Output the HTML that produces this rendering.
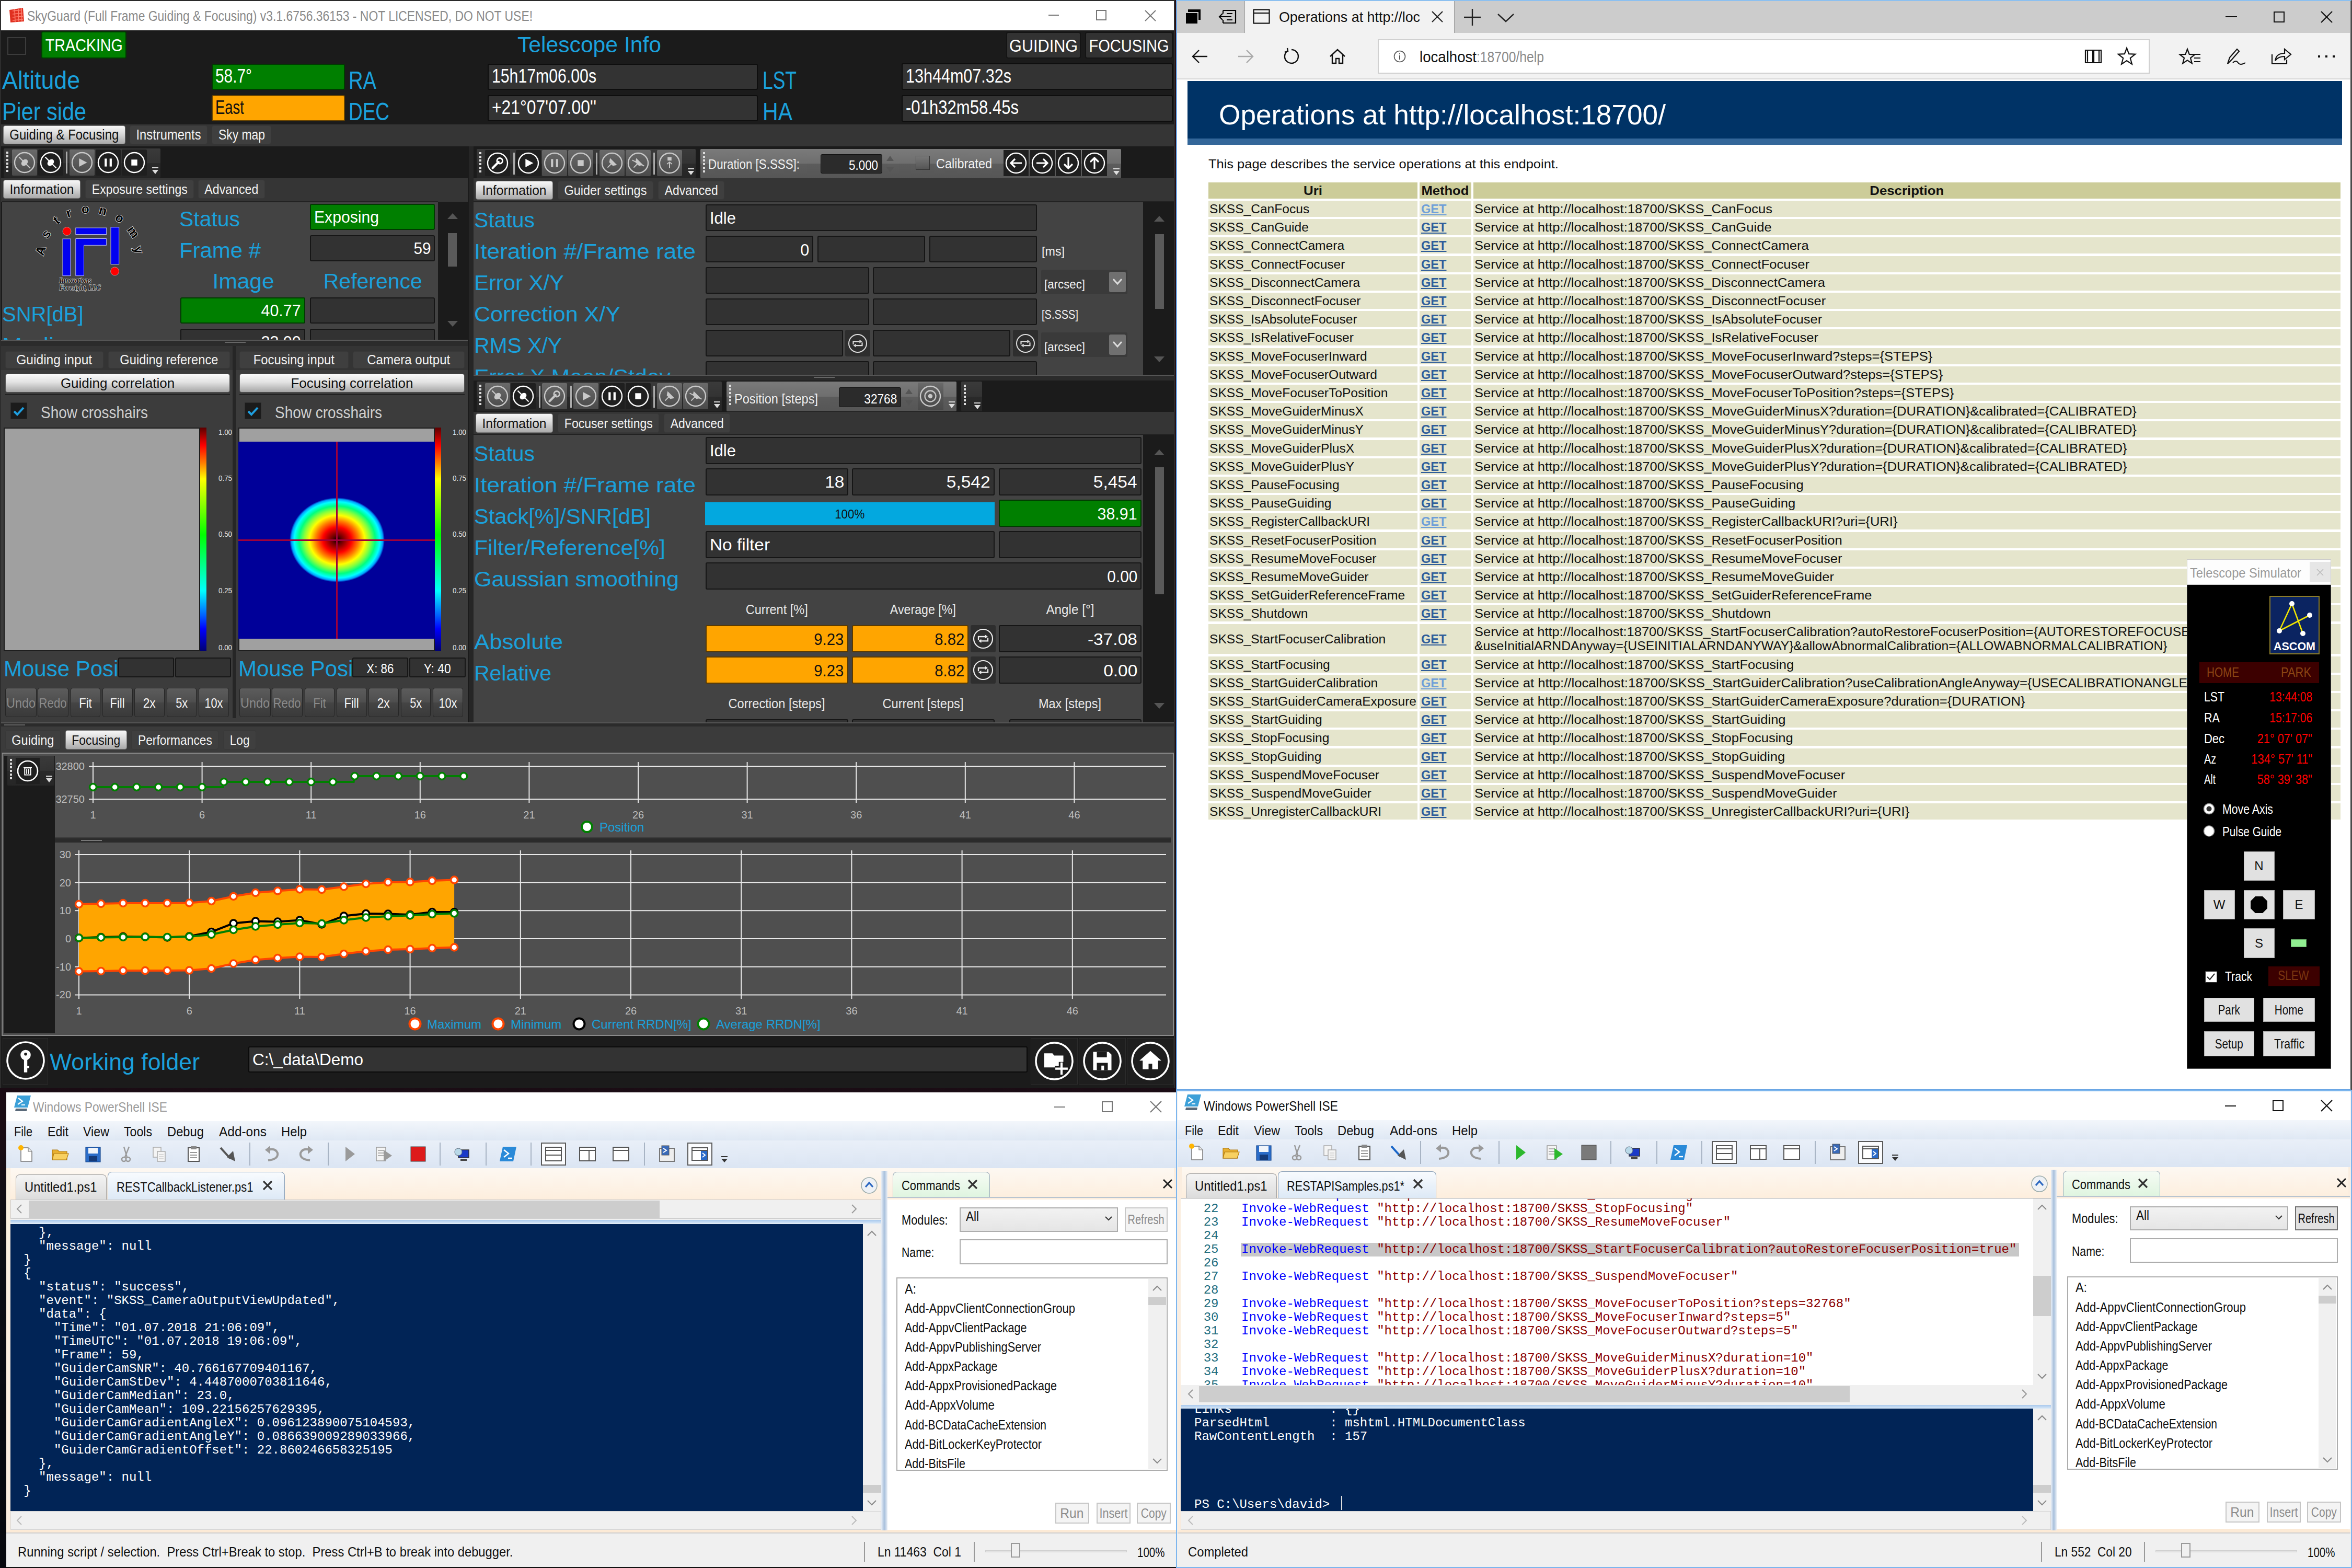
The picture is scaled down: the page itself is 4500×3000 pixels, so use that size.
<!DOCTYPE html>
<html><head><meta charset="utf-8"><title>Screen</title>
<style>
html,body{margin:0;padding:0;background:#000;}
#scr{position:relative;width:4500px;height:3000px;overflow:hidden;background:linear-gradient(#2a0e16 0%,#1a0c14 72%,#0c0c14 80%,#06080e 100%);font-family:"Liberation Sans",sans-serif;}
#scr div{position:absolute;box-sizing:border-box;}
#scr .t{white-space:pre;}
#scr svg{position:absolute;overflow:visible;}
</style></head><body><div id="scr">
<div style="left:0.0px;top:0.0px;width:2248.0px;height:2082.0px;background:#1b1b1b;border:2px solid #2d2d2d;border-top:2px solid #2a2a2a;"></div>
<div style="left:2.0px;top:2.0px;width:2244.0px;height:56.0px;background:#ffffff;"></div>
<svg style="left:16px;top:13px" width="32" height="32"><path d="M2,6 L28,2 L30,28 L4,30Z" fill="#e03020"/><path d="M8,8 L26,6 M8,14 L27,12 M8,20 L28,18 M8,26 L28,24 M12,5 L13,29 M19,4 L20,28 M25,3 L26,28" stroke="#ff8070" stroke-width="1.5"/></svg>
<div class="t" style="left:52.0px;top:18.1px;font-size:27px;line-height:27px;color:#8a8a8a;font-family:'Liberation Sans', sans-serif;transform:scaleX(0.8487);transform-origin:left 0;">SkyGuard (Full Frame Guiding &amp; Focusing) v3.1.6756.36153 - NOT LICENSED, DO NOT USE!</div>
<div style="left:2006.0px;top:28.0px;width:20.0px;height:2.0px;background:#777;"></div>
<div style="left:2097.0px;top:19.0px;width:20.0px;height:20.0px;border:2px solid #777;"></div>
<svg style="left:2190px;top:19px" width="22" height="22"><path d="M1,1 L21,21 M21,1 L1,21" stroke="#777" stroke-width="2"/></svg>
<div style="left:14.0px;top:71.0px;width:36.0px;height:34.0px;border:2px solid #3c3c3c;"></div>
<div style="left:79.0px;top:60.0px;width:163.0px;height:52.0px;background:#007f00;border:2px solid #003a00;border-radius:3px;"></div>
<div class="t" style="left:72.7px;top:69.2px;font-size:34px;line-height:34px;color:#fff;font-family:'Liberation Sans', sans-serif;transform:scaleX(0.8424);transform-origin:center 0;">TRACKING</div>
<div class="t" style="left:990.0px;top:65.4px;font-size:42px;line-height:42px;color:#1ba1dc;font-family:'Liberation Sans', sans-serif;transform:scaleX(1.0154);transform-origin:left 0;">Telescope Info</div>
<div style="left:1925.0px;top:61.0px;width:143.0px;height:51.0px;background:#323232;border:2px solid #141414;border-radius:4px;"></div>
<div class="t" style="left:1925.9px;top:71.1px;font-size:33px;line-height:33px;color:#fff;font-family:'Liberation Sans', sans-serif;transform:scaleX(0.9280);transform-origin:center 0;">GUIDING</div>
<div style="left:2076.0px;top:61.0px;width:168.0px;height:51.0px;background:#323232;border:2px solid #141414;border-radius:4px;"></div>
<div class="t" style="left:2072.9px;top:71.1px;font-size:33px;line-height:33px;color:#fff;font-family:'Liberation Sans', sans-serif;transform:scaleX(0.8785);transform-origin:center 0;">FOCUSING</div>
<div class="t" style="left:4.0px;top:128.5px;font-size:49px;line-height:49px;color:#1ba1dc;font-family:'Liberation Sans', sans-serif;transform:scaleX(0.9117);transform-origin:left 0;">Altitude</div>
<div class="t" style="left:4.0px;top:188.5px;font-size:49px;line-height:49px;color:#1ba1dc;font-family:'Liberation Sans', sans-serif;transform:scaleX(0.8445);transform-origin:left 0;">Pier side</div>
<div style="left:405.0px;top:122.0px;width:255.0px;height:50.0px;background:#007f00;border:2px solid #003a00;border-radius:3px;"></div>
<div class="t" style="left:412.0px;top:127.5px;font-size:36px;line-height:36px;color:#fff;font-family:'Liberation Sans', sans-serif;transform:scaleX(0.8288);transform-origin:left 0;">58.7°</div>
<div style="left:405.0px;top:182.0px;width:255.0px;height:50.0px;background:#ffa500;border:2px solid #6a4500;border-radius:3px;"></div>
<div class="t" style="left:412.0px;top:187.5px;font-size:36px;line-height:36px;color:#111;font-family:'Liberation Sans', sans-serif;transform:scaleX(0.7635);transform-origin:left 0;">East</div>
<div class="t" style="left:667.0px;top:128.5px;font-size:49px;line-height:49px;color:#1ba1dc;font-family:'Liberation Sans', sans-serif;transform:scaleX(0.7786);transform-origin:left 0;">RA</div>
<div class="t" style="left:667.0px;top:188.5px;font-size:49px;line-height:49px;color:#1ba1dc;font-family:'Liberation Sans', sans-serif;transform:scaleX(0.7540);transform-origin:left 0;">DEC</div>
<div style="left:933.0px;top:122.0px;width:517.0px;height:50.0px;background:#333;border:2px solid #0e0e0e;border-radius:3px;"></div>
<div class="t" style="left:941.0px;top:127.5px;font-size:36px;line-height:36px;color:#fff;font-family:'Liberation Sans', sans-serif;transform:scaleX(0.8397);transform-origin:left 0;">15h17m06.00s</div>
<div style="left:933.0px;top:182.0px;width:517.0px;height:50.0px;background:#333;border:2px solid #0e0e0e;border-radius:3px;"></div>
<div class="t" style="left:941.0px;top:187.5px;font-size:36px;line-height:36px;color:#fff;font-family:'Liberation Sans', sans-serif;transform:scaleX(0.8841);transform-origin:left 0;">+21°07&#x27;07.00&#x27;&#x27;</div>
<div class="t" style="left:1459.0px;top:128.5px;font-size:49px;line-height:49px;color:#1ba1dc;font-family:'Liberation Sans', sans-serif;transform:scaleX(0.7233);transform-origin:left 0;">LST</div>
<div class="t" style="left:1459.0px;top:188.5px;font-size:49px;line-height:49px;color:#1ba1dc;font-family:'Liberation Sans', sans-serif;transform:scaleX(0.8374);transform-origin:left 0;">HA</div>
<div style="left:1725.0px;top:121.0px;width:519.0px;height:51.0px;background:#333;border:2px solid #0e0e0e;border-radius:3px;"></div>
<div class="t" style="left:1733.0px;top:127.5px;font-size:36px;line-height:36px;color:#fff;font-family:'Liberation Sans', sans-serif;transform:scaleX(0.8481);transform-origin:left 0;">13h44m07.32s</div>
<div style="left:1725.0px;top:182.0px;width:519.0px;height:51.0px;background:#333;border:2px solid #0e0e0e;border-radius:3px;"></div>
<div class="t" style="left:1733.0px;top:187.5px;font-size:36px;line-height:36px;color:#fff;font-family:'Liberation Sans', sans-serif;transform:scaleX(0.8634);transform-origin:left 0;">-01h32m58.45s</div>
<div style="left:2.0px;top:238.0px;width:2244.0px;height:42.0px;background:#353535;"></div>
<div style="left:6.0px;top:240.0px;width:234.0px;height:36.0px;background:linear-gradient(#f7f7f7,#d9d9d9 45%,#a9a9a9);border-radius:4px;border:1px solid #777;"></div>
<div class="t" style="left:5.2px;top:244.6px;font-size:27px;line-height:27px;color:#111;font-family:'Liberation Sans', sans-serif;transform:scaleX(0.8870);transform-origin:center 0;">Guiding &amp; Focusing</div>
<div style="left:248.0px;top:240.0px;width:149.0px;height:36.0px;background:#3f3f3f;border-radius:4px;border:1px solid #383838;"></div>
<div class="t" style="left:252.0px;top:244.6px;font-size:27px;line-height:27px;color:#f2f2f2;font-family:'Liberation Sans', sans-serif;transform:scaleX(0.8791);transform-origin:center 0;">Instruments</div>
<div style="left:405.0px;top:240.0px;width:114.0px;height:36.0px;background:#3f3f3f;border-radius:4px;border:1px solid #383838;"></div>
<div class="t" style="left:409.5px;top:244.6px;font-size:27px;line-height:27px;color:#f2f2f2;font-family:'Liberation Sans', sans-serif;transform:scaleX(0.8474);transform-origin:center 0;">Sky map</div>
<div style="left:2.0px;top:280.0px;width:893.0px;height:61.0px;background:#1b1b1b;"></div>
<div style="left:7.0px;top:284.0px;width:300.0px;height:56.0px;background:linear-gradient(#3a3a3a,#333 50%,#2a2a2a 51%,#262626);border-radius:2px;"></div>
<svg style="left:11px;top:290px" width="8" height="44"><rect x="1" y="0" width="4" height="4" fill="#ddd"/><rect x="1" y="7" width="4" height="4" fill="#ddd"/><rect x="1" y="14" width="4" height="4" fill="#ddd"/><rect x="1" y="21" width="4" height="4" fill="#ddd"/><rect x="1" y="28" width="4" height="4" fill="#ddd"/><rect x="1" y="35" width="4" height="4" fill="#ddd"/></svg>
<div style="left:23.0px;top:286.0px;width:48.0px;height:50.0px;background:linear-gradient(#6a6a6a,#5a5a5a 50%,#4a4a4a);border-radius:2px;"></div>
<svg style="left:24.0px;top:288.0px" width="46" height="46" viewBox="-23 -23 46 46"><circle r="19" fill="none" stroke="#c8c8c8" stroke-width="2.4"/><path d="M-10.5,-10.5 L10.5,10.5" stroke="#c8c8c8" stroke-width="2.3"/><ellipse cx="0" cy="0" rx="7.2" ry="5.3" transform="rotate(-45)" fill="#c8c8c8"/></svg>
<div style="left:73.0px;top:286.0px;width:48.0px;height:50.0px;background:#1f1f1f;border-radius:2px;"></div>
<svg style="left:74.0px;top:288.0px" width="46" height="46" viewBox="-23 -23 46 46"><circle r="19" fill="none" stroke="#fff" stroke-width="2.4"/><path d="M-10.5,-10.5 L10.5,10.5" stroke="#fff" stroke-width="2.3"/><ellipse cx="0" cy="0" rx="7.2" ry="5.3" transform="rotate(-45)" fill="#fff"/></svg>
<div style="left:126.0px;top:290.0px;width:3.0px;height:42.0px;background:#aaa;"></div>
<div style="left:133.0px;top:286.0px;width:48.0px;height:50.0px;background:linear-gradient(#6a6a6a,#5a5a5a 50%,#4a4a4a);border-radius:2px;"></div>
<svg style="left:134.0px;top:288.0px" width="46" height="46" viewBox="-23 -23 46 46"><circle r="19" fill="none" stroke="#c8c8c8" stroke-width="2.4"/><path d="M-5.7,-8.0 L9.5,0 L-5.7,8.0 Z" fill="#c8c8c8"/></svg>
<div style="left:183.0px;top:286.0px;width:48.0px;height:50.0px;background:#1f1f1f;border-radius:2px;"></div>
<svg style="left:184.0px;top:288.0px" width="46" height="46" viewBox="-23 -23 46 46"><circle r="19" fill="none" stroke="#fff" stroke-width="2.4"/><rect x="-6.8" y="-7.6" width="4.2" height="15.2" fill="#fff"/><rect x="2.7" y="-7.6" width="4.2" height="15.2" fill="#fff"/></svg>
<div style="left:233.0px;top:286.0px;width:48.0px;height:50.0px;background:#1f1f1f;border-radius:2px;"></div>
<svg style="left:234.0px;top:288.0px" width="46" height="46" viewBox="-23 -23 46 46"><circle r="19" fill="none" stroke="#fff" stroke-width="2.4"/><rect x="-5.7" y="-5.7" width="11.4" height="11.4" fill="#fff"/></svg>
<svg style="left:290px;top:320px" width="14" height="16"><rect x="1" y="0" width="12" height="2" fill="#ddd"/><path d="M1,5 L13,5 L7,13Z" fill="#ddd"/></svg>
<div style="left:2.0px;top:341.0px;width:893.0px;height:45.0px;background:#353535;"></div>
<div style="left:6.0px;top:344.0px;width:148.0px;height:36.0px;background:linear-gradient(#f7f7f7,#d9d9d9 45%,#a9a9a9);border-radius:4px;border:1px solid #777;"></div>
<div class="t" style="left:15.0px;top:349.1px;font-size:26px;line-height:26px;color:#111;font-family:'Liberation Sans', sans-serif;transform:scaleX(0.9457);transform-origin:center 0;">Information</div>
<div style="left:163.0px;top:344.0px;width:208.0px;height:36.0px;background:#3f3f3f;border-radius:4px;border:1px solid #383838;"></div>
<div class="t" style="left:163.7px;top:349.1px;font-size:26px;line-height:26px;color:#f2f2f2;font-family:'Liberation Sans', sans-serif;transform:scaleX(0.8855);transform-origin:center 0;">Exposure settings</div>
<div style="left:379.0px;top:344.0px;width:128.0px;height:36.0px;background:#3f3f3f;border-radius:4px;border:1px solid #383838;"></div>
<div class="t" style="left:385.2px;top:349.1px;font-size:26px;line-height:26px;color:#f2f2f2;font-family:'Liberation Sans', sans-serif;transform:scaleX(0.8907);transform-origin:center 0;">Advanced</div>
<div style="left:4.0px;top:385.0px;width:834.0px;height:2.0px;background:#222;"></div>
<div style="left:4px;top:387px;width:834px;height:263px;overflow:hidden;background:#434343;">
<svg style="left:-4px;top:-7px" width="300" height="200" viewBox="0 380 300 200"><text x="77.8" y="487.5" text-anchor="middle" font-family="Liberation Sans" font-weight="bold" font-size="24" fill="#000" stroke="#e8e8e8" stroke-width="1.6" paint-order="stroke" transform="rotate(-72 77.8 479.5)">A</text><text x="88" y="455.6" text-anchor="middle" font-family="Liberation Sans" font-weight="bold" font-size="24" fill="#000" stroke="#e8e8e8" stroke-width="1.6" paint-order="stroke" transform="rotate(-55 88 447.6)">s</text><text x="107.8" y="429.5" text-anchor="middle" font-family="Liberation Sans" font-weight="bold" font-size="24" fill="#000" stroke="#e8e8e8" stroke-width="1.6" paint-order="stroke" transform="rotate(-38 107.8 421.5)">t</text><text x="131.4" y="415.4" text-anchor="middle" font-family="Liberation Sans" font-weight="bold" font-size="24" fill="#000" stroke="#e8e8e8" stroke-width="1.6" paint-order="stroke" transform="rotate(-18 131.4 407.4)">r</text><text x="163.3" y="408.4" text-anchor="middle" font-family="Liberation Sans" font-weight="bold" font-size="24" fill="#000" stroke="#e8e8e8" stroke-width="1.6" paint-order="stroke" transform="rotate(0 163.3 400.4)">o</text><text x="197" y="411" text-anchor="middle" font-family="Liberation Sans" font-weight="bold" font-size="24" fill="#000" stroke="#e8e8e8" stroke-width="1.6" paint-order="stroke" transform="rotate(15 197 403)">n</text><text x="229" y="425" text-anchor="middle" font-family="Liberation Sans" font-weight="bold" font-size="24" fill="#000" stroke="#e8e8e8" stroke-width="1.6" paint-order="stroke" transform="rotate(32 229 417)">o</text><text x="255" y="451.8" text-anchor="middle" font-family="Liberation Sans" font-weight="bold" font-size="24" fill="#000" stroke="#e8e8e8" stroke-width="1.6" paint-order="stroke" transform="rotate(55 255 443.8)">m</text><text x="265.3" y="486.2" text-anchor="middle" font-family="Liberation Sans" font-weight="bold" font-size="24" fill="#000" stroke="#e8e8e8" stroke-width="1.6" paint-order="stroke" transform="rotate(75 265.3 478.2)">y</text><circle cx="128" cy="442.5" r="8" fill="#f00" stroke="#ccc" stroke-width="0.6"/><circle cx="219.6" cy="519" r="8" fill="#f00" stroke="#ccc" stroke-width="0.6"/><rect x="120" y="457" width="15" height="70.6" fill="#0000f0" stroke="#b8b8ff" stroke-width="1"/><rect x="144.8" y="436" width="58.9" height="12.5" fill="#0000f0" stroke="#b8b8ff" stroke-width="1"/><path d="M144.8,456.5 L203.7,456.5 L203.7,469.3 L160.5,469.3 L160.5,527.6 L144.8,527.6Z" fill="#0000f0" stroke="#b8b8ff" stroke-width="1"/><rect x="212" y="434.8" width="15.7" height="70.8" fill="#0000f0" stroke="#b8b8ff" stroke-width="1"/><text x="113.5" y="541.3" font-family="Liberation Serif" font-style="italic" font-weight="bold" font-size="15" fill="#111" stroke="#eee" stroke-width="1.2" paint-order="stroke" textLength="61" lengthAdjust="spacingAndGlyphs">Innovations</text><text x="113.5" y="555.4" font-family="Liberation Serif" font-style="italic" font-weight="bold" font-size="15" fill="#111" stroke="#eee" stroke-width="1.2" paint-order="stroke" textLength="79" lengthAdjust="spacingAndGlyphs">Foresight, LLC</text></svg>
<div class="t" style="left:339.0px;top:12.1px;font-size:40px;line-height:40px;color:#1ba1dc;font-family:'Liberation Sans', sans-serif;transform:scaleX(1.0229);transform-origin:left 0;">Status</div>
<div style="left:589.0px;top:3.0px;width:239.0px;height:50.0px;background:#007f00;border:2px solid #003a00;border-radius:3px;"></div>
<div class="t" style="left:597.0px;top:12.8px;font-size:31px;line-height:31px;color:#fff;font-family:'Liberation Sans', sans-serif;transform:scaleX(0.9723);transform-origin:left 0;">Exposing</div>
<div class="t" style="left:339.0px;top:72.1px;font-size:40px;line-height:40px;color:#1ba1dc;font-family:'Liberation Sans', sans-serif;transform:scaleX(1.0475);transform-origin:left 0;">Frame #</div>
<div style="left:589.0px;top:63.0px;width:239.0px;height:50.0px;background:#323232;border:2px solid #161616;border-radius:3px;"></div>
<div class="t" style="left:785.5px;top:72.8px;font-size:31px;line-height:31px;color:#fff;font-family:'Liberation Sans', sans-serif;transform:scaleX(0.9570);transform-origin:right 0;">59</div>
<div class="t" style="left:406.4px;top:131.1px;font-size:40px;line-height:40px;color:#1ba1dc;font-family:'Liberation Sans', sans-serif;transform:scaleX(1.0614);transform-origin:center 0;">Image</div>
<div class="t" style="left:616.7px;top:131.1px;font-size:40px;line-height:40px;color:#1ba1dc;font-family:'Liberation Sans', sans-serif;transform:scaleX(1.0241);transform-origin:center 0;">Reference</div>
<div class="t" style="left:0.0px;top:194.1px;font-size:40px;line-height:40px;color:#1ba1dc;font-family:'Liberation Sans', sans-serif;">SNR[dB]</div>
<div style="left:341.0px;top:182.0px;width:239.0px;height:50.0px;background:#007f00;border:2px solid #003a00;border-radius:3px;"></div>
<div class="t" style="left:494.4px;top:191.8px;font-size:31px;line-height:31px;color:#fff;font-family:'Liberation Sans', sans-serif;transform:scaleX(0.9797);transform-origin:right 0;">40.77</div>
<div style="left:589.0px;top:182.0px;width:239.0px;height:50.0px;background:#323232;border:2px solid #161616;border-radius:3px;"></div>
<div class="t" style="left:0.0px;top:254.1px;font-size:40px;line-height:40px;color:#1ba1dc;font-family:'Liberation Sans', sans-serif;transform:scaleX(1.1433);transform-origin:left 0;">Median</div>
<div style="left:341.0px;top:242.0px;width:239.0px;height:50.0px;background:#323232;border:2px solid #161616;border-radius:3px;"></div>
<div class="t" style="left:494.4px;top:251.8px;font-size:31px;line-height:31px;color:#fff;font-family:'Liberation Sans', sans-serif;transform:scaleX(0.9797);transform-origin:right 0;">23.00</div>
<div style="left:589.0px;top:242.0px;width:239.0px;height:50.0px;background:#323232;border:2px solid #161616;border-radius:3px;"></div>
</div>
<div style="left:838.0px;top:387.0px;width:57.0px;height:263.0px;background:#1b1b1b;"></div>
<svg style="left:855px;top:405px" width="22" height="16"><path d="M1,14 L11,3 L21,14Z" fill="#555"/></svg>
<div style="left:857.0px;top:446.0px;width:17.0px;height:64.0px;background:#5a5a5a;"></div>
<svg style="left:855px;top:612px" width="22" height="16"><path d="M1,2 L11,13 L21,2Z" fill="#555"/></svg>
<div style="left:2.0px;top:650.0px;width:893.0px;height:12.0px;background:#2b2b2b;border-top:2px solid #555;"></div>
<div style="left:430.0px;top:654.0px;width:40.0px;height:2.0px;background:#666;"></div>
<div style="left:2.0px;top:662.0px;width:893.0px;height:720.0px;background:#3c3c3c;"></div>
<div style="left:2.0px;top:662.0px;width:893.0px;height:46.0px;background:#343434;"></div>
<div style="left:10.0px;top:672.0px;width:188.0px;height:33.0px;background:#3f3f3f;border-radius:4px;border:1px solid #383838;"></div>
<div class="t" style="left:30.3px;top:676.1px;font-size:25px;line-height:25px;color:#f2f2f2;font-family:'Liberation Sans', sans-serif;transform:scaleX(0.9842);transform-origin:center 0;">Guiding input</div>
<div style="left:207.0px;top:672.0px;width:233.0px;height:33.0px;background:#3f3f3f;border-radius:4px;border:1px solid #383838;"></div>
<div class="t" style="left:224.1px;top:676.1px;font-size:25px;line-height:25px;color:#f2f2f2;font-family:'Liberation Sans', sans-serif;transform:scaleX(0.9460);transform-origin:center 0;">Guiding reference</div>
<div style="left:458.0px;top:672.0px;width:209.0px;height:33.0px;background:#3f3f3f;border-radius:4px;border:1px solid #383838;"></div>
<div class="t" style="left:481.2px;top:676.1px;font-size:25px;line-height:25px;color:#f2f2f2;font-family:'Liberation Sans', sans-serif;transform:scaleX(0.9533);transform-origin:center 0;">Focusing input</div>
<div style="left:675.0px;top:672.0px;width:214.0px;height:33.0px;background:#3f3f3f;border-radius:4px;border:1px solid #383838;"></div>
<div class="t" style="left:699.3px;top:676.1px;font-size:25px;line-height:25px;color:#f2f2f2;font-family:'Liberation Sans', sans-serif;transform:scaleX(0.9615);transform-origin:center 0;">Camera output</div>
<div style="left:445.0px;top:662.0px;width:7.0px;height:712.0px;background:#262626;"></div>
<div style="left:10.0px;top:715.0px;width:430.0px;height:36.0px;background:linear-gradient(#fbfbfb,#e2e2e2 45%,#a6a6a6);border-radius:4px;border:1px solid #555;"></div>
<div class="t" style="left:115.9px;top:720.4px;font-size:26px;line-height:26px;color:#111;font-family:'Liberation Sans', sans-serif;">Guiding correlation</div>
<div style="left:458.0px;top:715.0px;width:431.0px;height:36.0px;background:linear-gradient(#fbfbfb,#e2e2e2 45%,#a6a6a6);border-radius:4px;border:1px solid #555;"></div>
<div class="t" style="left:556.4px;top:720.4px;font-size:26px;line-height:26px;color:#111;font-family:'Liberation Sans', sans-serif;">Focusing correlation</div>
<div style="left:10.0px;top:754.0px;width:430.0px;height:2.0px;background:#222;"></div>
<div style="left:458.0px;top:754.0px;width:431.0px;height:2.0px;background:#222;"></div>
<div style="left:20.0px;top:770.0px;width:32.0px;height:32.0px;background:#1b1b1b;border:1px solid #2a2a2a;"></div>
<svg style="left:24px;top:776px" width="24" height="22"><path d="M3,11 L9,17 L21,4" fill="none" stroke="#1e9fe0" stroke-width="4"/></svg>
<div class="t" style="left:78.0px;top:772.9px;font-size:32px;line-height:32px;color:#cfcfcf;font-family:'Liberation Sans', sans-serif;transform:scaleX(0.8733);transform-origin:left 0;">Show crosshairs</div>
<div style="left:468.0px;top:770.0px;width:32.0px;height:32.0px;background:#1b1b1b;border:1px solid #2a2a2a;"></div>
<svg style="left:472px;top:776px" width="24" height="22"><path d="M3,11 L9,17 L21,4" fill="none" stroke="#1e9fe0" stroke-width="4"/></svg>
<div class="t" style="left:526.0px;top:772.9px;font-size:32px;line-height:32px;color:#cfcfcf;font-family:'Liberation Sans', sans-serif;transform:scaleX(0.8733);transform-origin:left 0;">Show crosshairs</div>
<div style="left:7.0px;top:818.0px;width:376.0px;height:428.0px;background:#a0a0a0;border:2px solid #1e1e1e;"></div>
<div style="left:383.0px;top:818.0px;width:12.0px;height:428.0px;background:linear-gradient(#5a0000,#ff0000 8%,#ff8000 16%,#ffff00 23%,#00ff00 48%,#00ffff 73%,#0060ff 84%,#0000ff 90%,#000070);"></div>
<div class="t" style="left:418.0px;top:820.1px;font-size:14px;line-height:14px;color:#e6e6e6;font-family:'Liberation Sans', sans-serif;transform:scaleX(0.9542);transform-origin:left 0;">1.00</div>
<div class="t" style="left:866.0px;top:820.1px;font-size:14px;line-height:14px;color:#e6e6e6;font-family:'Liberation Sans', sans-serif;transform:scaleX(0.9542);transform-origin:left 0;">1.00</div>
<div class="t" style="left:418.0px;top:908.1px;font-size:14px;line-height:14px;color:#e6e6e6;font-family:'Liberation Sans', sans-serif;transform:scaleX(0.9542);transform-origin:left 0;">0.75</div>
<div class="t" style="left:866.0px;top:908.1px;font-size:14px;line-height:14px;color:#e6e6e6;font-family:'Liberation Sans', sans-serif;transform:scaleX(0.9542);transform-origin:left 0;">0.75</div>
<div class="t" style="left:418.0px;top:1015.1px;font-size:14px;line-height:14px;color:#e6e6e6;font-family:'Liberation Sans', sans-serif;transform:scaleX(0.9542);transform-origin:left 0;">0.50</div>
<div class="t" style="left:866.0px;top:1015.1px;font-size:14px;line-height:14px;color:#e6e6e6;font-family:'Liberation Sans', sans-serif;transform:scaleX(0.9542);transform-origin:left 0;">0.50</div>
<div class="t" style="left:418.0px;top:1123.1px;font-size:14px;line-height:14px;color:#e6e6e6;font-family:'Liberation Sans', sans-serif;transform:scaleX(0.9542);transform-origin:left 0;">0.25</div>
<div class="t" style="left:866.0px;top:1123.1px;font-size:14px;line-height:14px;color:#e6e6e6;font-family:'Liberation Sans', sans-serif;transform:scaleX(0.9542);transform-origin:left 0;">0.25</div>
<div class="t" style="left:418.0px;top:1232.1px;font-size:14px;line-height:14px;color:#e6e6e6;font-family:'Liberation Sans', sans-serif;transform:scaleX(0.9542);transform-origin:left 0;">0.00</div>
<div class="t" style="left:866.0px;top:1232.1px;font-size:14px;line-height:14px;color:#e6e6e6;font-family:'Liberation Sans', sans-serif;transform:scaleX(0.9542);transform-origin:left 0;">0.00</div>
<div style="left:456.0px;top:818.0px;width:376.0px;height:428.0px;background:#a0a0a0;border:2px solid #1e1e1e;"></div>
<div style="left:456px;top:845px;width:376px;height:377px;background:#000099;overflow:hidden;"><div style="left:98px;top:107px;width:182px;height:162px;border-radius:50%;background:radial-gradient(ellipse closest-side,#000 0%,#600 10%,#f00 30%,#ff8000 45%,#ffff00 58%,#80ff40 70%,#00ff80 80%,#00ffff 90%,#00a0ff 96%,rgba(0,0,153,0) 100%);"></div></div>
<div style="left:643.0px;top:845.0px;width:3.0px;height:377.0px;background:#a0003a;"></div>
<div style="left:456.0px;top:1032.0px;width:376.0px;height:3.0px;background:#a0003a;"></div>
<div style="left:832.0px;top:818.0px;width:12.0px;height:428.0px;background:linear-gradient(#5a0000,#ff0000 8%,#ff8000 16%,#ffff00 23%,#00ff00 48%,#00ffff 73%,#0060ff 84%,#0000ff 90%,#000070);"></div>
<div style="left:4px;top:1250px;width:222px;height:60px;overflow:hidden;">
<div class="t" style="left:3.0px;top:9.4px;font-size:42px;line-height:42px;color:#1ba1dc;font-family:'Liberation Sans', sans-serif;">Mouse Position</div>
</div>
<div style="left:226.0px;top:1258.0px;width:107.0px;height:38.0px;background:#323232;border:2px solid #161616;border-radius:3px;"></div>
<div style="left:335.0px;top:1258.0px;width:107.0px;height:38.0px;background:#323232;border:2px solid #161616;border-radius:3px;"></div>
<div style="left:452px;top:1250px;width:222px;height:60px;overflow:hidden;">
<div class="t" style="left:4.0px;top:9.4px;font-size:42px;line-height:42px;color:#1ba1dc;font-family:'Liberation Sans', sans-serif;">Mouse Position</div>
</div>
<div style="left:674.0px;top:1258.0px;width:107.0px;height:38.0px;background:#323232;border:2px solid #161616;border-radius:3px;"></div>
<div class="t" style="left:697.1px;top:1266.0px;font-size:26px;line-height:26px;color:#fff;font-family:'Liberation Sans', sans-serif;transform:scaleX(0.8566);transform-origin:center 0;">X: 86</div>
<div style="left:783.0px;top:1258.0px;width:108.0px;height:38.0px;background:#323232;border:2px solid #161616;border-radius:3px;"></div>
<div class="t" style="left:807.4px;top:1266.0px;font-size:26px;line-height:26px;color:#fff;font-family:'Liberation Sans', sans-serif;transform:scaleX(0.8773);transform-origin:center 0;">Y: 40</div>
<div style="left:10.0px;top:1316.0px;width:60.0px;height:56.0px;background:linear-gradient(#5c5c5c,#4e4e4e 50%,#444 51%,#3a3a3a);border:1px solid #262626;border-radius:4px;"></div>
<div class="t" style="left:8.9px;top:1332.4px;font-size:26px;line-height:26px;color:#8a8a8a;font-family:'Liberation Sans', sans-serif;transform:scaleX(0.9010);transform-origin:center 0;">Undo</div>
<div style="left:458.0px;top:1316.0px;width:60.0px;height:56.0px;background:linear-gradient(#5c5c5c,#4e4e4e 50%,#444 51%,#3a3a3a);border:1px solid #262626;border-radius:4px;"></div>
<div class="t" style="left:456.9px;top:1332.4px;font-size:26px;line-height:26px;color:#8a8a8a;font-family:'Liberation Sans', sans-serif;transform:scaleX(0.9010);transform-origin:center 0;">Undo</div>
<div style="left:72.0px;top:1316.0px;width:59.0px;height:56.0px;background:linear-gradient(#5c5c5c,#4e4e4e 50%,#444 51%,#3a3a3a);border:1px solid #262626;border-radius:4px;"></div>
<div class="t" style="left:70.4px;top:1332.4px;font-size:26px;line-height:26px;color:#8a8a8a;font-family:'Liberation Sans', sans-serif;transform:scaleX(0.8527);transform-origin:center 0;">Redo</div>
<div style="left:520.0px;top:1316.0px;width:59.0px;height:56.0px;background:linear-gradient(#5c5c5c,#4e4e4e 50%,#444 51%,#3a3a3a);border:1px solid #262626;border-radius:4px;"></div>
<div class="t" style="left:518.4px;top:1332.4px;font-size:26px;line-height:26px;color:#8a8a8a;font-family:'Liberation Sans', sans-serif;transform:scaleX(0.8527);transform-origin:center 0;">Redo</div>
<div style="left:135.0px;top:1316.0px;width:57.0px;height:56.0px;background:linear-gradient(#5c5c5c,#4e4e4e 50%,#444 51%,#3a3a3a);border:1px solid #262626;border-radius:4px;"></div>
<div class="t" style="left:149.1px;top:1332.4px;font-size:26px;line-height:26px;color:#f5f5f5;font-family:'Liberation Sans', sans-serif;transform:scaleX(0.8483);transform-origin:center 0;">Fit</div>
<div style="left:583.0px;top:1316.0px;width:57.0px;height:56.0px;background:linear-gradient(#5c5c5c,#4e4e4e 50%,#444 51%,#3a3a3a);border:1px solid #262626;border-radius:4px;"></div>
<div class="t" style="left:597.1px;top:1332.4px;font-size:26px;line-height:26px;color:#8a8a8a;font-family:'Liberation Sans', sans-serif;transform:scaleX(0.8483);transform-origin:center 0;">Fit</div>
<div style="left:196.0px;top:1316.0px;width:58.0px;height:56.0px;background:linear-gradient(#5c5c5c,#4e4e4e 50%,#444 51%,#3a3a3a);border:1px solid #262626;border-radius:4px;"></div>
<div class="t" style="left:208.4px;top:1332.4px;font-size:26px;line-height:26px;color:#f5f5f5;font-family:'Liberation Sans', sans-serif;transform:scaleX(0.8431);transform-origin:center 0;">Fill</div>
<div style="left:644.0px;top:1316.0px;width:58.0px;height:56.0px;background:linear-gradient(#5c5c5c,#4e4e4e 50%,#444 51%,#3a3a3a);border:1px solid #262626;border-radius:4px;"></div>
<div class="t" style="left:656.4px;top:1332.4px;font-size:26px;line-height:26px;color:#f5f5f5;font-family:'Liberation Sans', sans-serif;transform:scaleX(0.8431);transform-origin:center 0;">Fill</div>
<div style="left:257.0px;top:1316.0px;width:58.0px;height:56.0px;background:linear-gradient(#5c5c5c,#4e4e4e 50%,#444 51%,#3a3a3a);border:1px solid #262626;border-radius:4px;"></div>
<div class="t" style="left:272.3px;top:1332.4px;font-size:26px;line-height:26px;color:#f5f5f5;font-family:'Liberation Sans', sans-serif;transform:scaleX(0.8740);transform-origin:center 0;">2x</div>
<div style="left:705.0px;top:1316.0px;width:58.0px;height:56.0px;background:linear-gradient(#5c5c5c,#4e4e4e 50%,#444 51%,#3a3a3a);border:1px solid #262626;border-radius:4px;"></div>
<div class="t" style="left:720.3px;top:1332.4px;font-size:26px;line-height:26px;color:#f5f5f5;font-family:'Liberation Sans', sans-serif;transform:scaleX(0.8740);transform-origin:center 0;">2x</div>
<div style="left:319.0px;top:1316.0px;width:57.0px;height:56.0px;background:linear-gradient(#5c5c5c,#4e4e4e 50%,#444 51%,#3a3a3a);border:1px solid #262626;border-radius:4px;"></div>
<div class="t" style="left:333.8px;top:1332.4px;font-size:26px;line-height:26px;color:#f5f5f5;font-family:'Liberation Sans', sans-serif;transform:scaleX(0.8376);transform-origin:center 0;">5x</div>
<div style="left:767.0px;top:1316.0px;width:57.0px;height:56.0px;background:linear-gradient(#5c5c5c,#4e4e4e 50%,#444 51%,#3a3a3a);border:1px solid #262626;border-radius:4px;"></div>
<div class="t" style="left:781.8px;top:1332.4px;font-size:26px;line-height:26px;color:#f5f5f5;font-family:'Liberation Sans', sans-serif;transform:scaleX(0.8376);transform-origin:center 0;">5x</div>
<div style="left:380.0px;top:1316.0px;width:58.0px;height:56.0px;background:linear-gradient(#5c5c5c,#4e4e4e 50%,#444 51%,#3a3a3a);border:1px solid #262626;border-radius:4px;"></div>
<div class="t" style="left:388.0px;top:1332.4px;font-size:26px;line-height:26px;color:#f5f5f5;font-family:'Liberation Sans', sans-serif;transform:scaleX(0.8349);transform-origin:center 0;">10x</div>
<div style="left:828.0px;top:1316.0px;width:58.0px;height:56.0px;background:linear-gradient(#5c5c5c,#4e4e4e 50%,#444 51%,#3a3a3a);border:1px solid #262626;border-radius:4px;"></div>
<div class="t" style="left:836.0px;top:1332.4px;font-size:26px;line-height:26px;color:#f5f5f5;font-family:'Liberation Sans', sans-serif;transform:scaleX(0.8349);transform-origin:center 0;">10x</div>
<div style="left:895.0px;top:280.0px;width:11.0px;height:1102.0px;background:#262626;border-left:2px solid #1b1b1b;"></div>
<div style="left:906.0px;top:280.0px;width:1340.0px;height:61.0px;background:#1b1b1b;"></div>
<div style="left:912.0px;top:285.0px;width:419.0px;height:56.0px;background:linear-gradient(#3a3a3a,#333 50%,#2a2a2a 51%,#262626);border-radius:2px;"></div>
<svg style="left:916px;top:291px" width="8" height="44"><rect x="1" y="0" width="4" height="4" fill="#ddd"/><rect x="1" y="7" width="4" height="4" fill="#ddd"/><rect x="1" y="14" width="4" height="4" fill="#ddd"/><rect x="1" y="21" width="4" height="4" fill="#ddd"/><rect x="1" y="28" width="4" height="4" fill="#ddd"/><rect x="1" y="35" width="4" height="4" fill="#ddd"/></svg>
<div style="left:928.0px;top:287.0px;width:48.0px;height:50.0px;background:#1f1f1f;border-radius:2px;"></div>
<svg style="left:929.0px;top:289.0px" width="46" height="46" viewBox="-23 -23 46 46"><circle r="19" fill="none" stroke="#fff" stroke-width="2.4"/><path d="M-9.5,9.5 L1.9,-1.9" stroke="#fff" stroke-width="4.2" stroke-linecap="round"/><circle cx="4.2" cy="-4.2" r="5.3" fill="none" stroke="#fff" stroke-width="3.0"/></svg>
<div style="left:982.0px;top:292.0px;width:3.0px;height:42.0px;background:#aaa;"></div>
<div style="left:987.0px;top:287.0px;width:48.0px;height:50.0px;background:#1f1f1f;border-radius:2px;"></div>
<svg style="left:988.0px;top:289.0px" width="46" height="46" viewBox="-23 -23 46 46"><circle r="19" fill="none" stroke="#fff" stroke-width="2.4"/><path d="M-5.7,-8.0 L9.5,0 L-5.7,8.0 Z" fill="#fff"/></svg>
<div style="left:1037.0px;top:287.0px;width:48.0px;height:50.0px;background:linear-gradient(#6a6a6a,#5a5a5a 50%,#4a4a4a);border-radius:2px;"></div>
<svg style="left:1038.0px;top:289.0px" width="46" height="46" viewBox="-23 -23 46 46"><circle r="19" fill="none" stroke="#c8c8c8" stroke-width="2.4"/><rect x="-6.8" y="-7.6" width="4.2" height="15.2" fill="#c8c8c8"/><rect x="2.7" y="-7.6" width="4.2" height="15.2" fill="#c8c8c8"/></svg>
<div style="left:1087.0px;top:287.0px;width:48.0px;height:50.0px;background:linear-gradient(#6a6a6a,#5a5a5a 50%,#4a4a4a);border-radius:2px;"></div>
<svg style="left:1088.0px;top:289.0px" width="46" height="46" viewBox="-23 -23 46 46"><circle r="19" fill="none" stroke="#c8c8c8" stroke-width="2.4"/><rect x="-5.7" y="-5.7" width="11.4" height="11.4" fill="#c8c8c8"/></svg>
<div style="left:1140.0px;top:292.0px;width:3.0px;height:42.0px;background:#aaa;"></div>
<div style="left:1147.0px;top:287.0px;width:48.0px;height:50.0px;background:linear-gradient(#6a6a6a,#5a5a5a 50%,#4a4a4a);border-radius:2px;"></div>
<svg style="left:1148.0px;top:289.0px" width="46" height="46" viewBox="-23 -23 46 46"><circle r="19" fill="none" stroke="#c8c8c8" stroke-width="2.4"/><path d="M-8.6,8.6 L0,0" stroke="#c8c8c8" stroke-width="1.9"/><path d="M-2.9,-6.6 L6.6,2.9 L1.9,3.8 L-3.8,-1.9Z" fill="#c8c8c8" stroke="#c8c8c8" stroke-width="2.9"/></svg>
<div style="left:1197.0px;top:287.0px;width:48.0px;height:50.0px;background:linear-gradient(#6a6a6a,#5a5a5a 50%,#4a4a4a);border-radius:2px;"></div>
<svg style="left:1198.0px;top:289.0px" width="46" height="46" viewBox="-23 -23 46 46"><circle r="19" fill="none" stroke="#c8c8c8" stroke-width="2.4"/><path d="M-8.6,8.6 L0,0" stroke="#c8c8c8" stroke-width="1.9"/><path d="M-2.9,-6.6 L6.6,2.9 L1.9,3.8 L-3.8,-1.9Z" fill="#c8c8c8" stroke="#c8c8c8" stroke-width="2.9"/><path d="M-11.4,-5.7 L11.4,5.7" stroke="#c8c8c8" stroke-width="1.9"/></svg>
<div style="left:1250.0px;top:292.0px;width:3.0px;height:42.0px;background:#aaa;"></div>
<div style="left:1257.0px;top:287.0px;width:48.0px;height:50.0px;background:linear-gradient(#6a6a6a,#5a5a5a 50%,#4a4a4a);border-radius:2px;"></div>
<svg style="left:1258.0px;top:289.0px" width="46" height="46" viewBox="-23 -23 46 46"><circle r="19" fill="none" stroke="#c8c8c8" stroke-width="2.4"/><rect x="-3.8" y="-11.4" width="7.6" height="6.6" fill="#c8c8c8"/><path d="M0,9.5 L0,-1.9 M-4.8,1.9 L0,-1.9 L4.8,1.9" fill="none" stroke="#c8c8c8" stroke-width="1.9"/></svg>
<svg style="left:1315px;top:322px" width="14" height="16"><rect x="1" y="0" width="12" height="2" fill="#ddd"/><path d="M1,5 L13,5 L7,13Z" fill="#ddd"/></svg>
<div style="left:1340.0px;top:285.0px;width:805.0px;height:56.0px;background:linear-gradient(#7a7a7a,#6e6e6e 50%,#5c5c5c 51%,#565656);border-radius:2px;"></div>
<svg style="left:1344px;top:291px" width="8" height="44"><rect x="1" y="0" width="4" height="4" fill="#ddd"/><rect x="1" y="7" width="4" height="4" fill="#ddd"/><rect x="1" y="14" width="4" height="4" fill="#ddd"/><rect x="1" y="21" width="4" height="4" fill="#ddd"/><rect x="1" y="28" width="4" height="4" fill="#ddd"/><rect x="1" y="35" width="4" height="4" fill="#ddd"/></svg>
<div class="t" style="left:1355.0px;top:301.0px;font-size:26px;line-height:26px;color:#f0f0f0;font-family:'Liberation Sans', sans-serif;transform:scaleX(0.8589);transform-origin:left 0;">Duration [S.SSS]:</div>
<div style="left:1570.0px;top:295.0px;width:118.0px;height:37.0px;background:#2b2b2b;border:1px solid #111;border-radius:3px;"></div>
<div class="t" style="left:1614.9px;top:303.0px;font-size:26px;line-height:26px;color:#fff;font-family:'Liberation Sans', sans-serif;transform:scaleX(0.8607);transform-origin:right 0;">5.000</div>
<svg style="left:1694px;top:294px" width="18" height="40"><path d="M2,14 L9,4 L16,14Z M2,26 L9,36 L16,26Z" fill="#555"/></svg>
<div style="left:1752.0px;top:298.0px;width:27.0px;height:27.0px;background:linear-gradient(#777,#555);border:1px solid #333;"></div>
<div class="t" style="left:1791.0px;top:300.0px;font-size:26px;line-height:26px;color:#f0f0f0;font-family:'Liberation Sans', sans-serif;transform:scaleX(0.9029);transform-origin:left 0;">Calibrated</div>
<div style="left:1920.0px;top:287.0px;width:48.0px;height:50.0px;background:#1f1f1f;"></div>
<div style="left:1969.5px;top:287.0px;width:48.0px;height:50.0px;background:#1f1f1f;"></div>
<div style="left:2019.5px;top:287.0px;width:48.0px;height:50.0px;background:#1f1f1f;"></div>
<div style="left:2069.5px;top:287.0px;width:48.0px;height:50.0px;background:#1f1f1f;"></div>
<svg style="left:1921px;top:288.5px" width="46" height="46" viewBox="-23 -23 46 46"><circle r="19" fill="none" stroke="#fff" stroke-width="2.4"/><g transform="rotate(270)"><path d="M0,11 L0,-10 M-8,-2 L0,-10 L8,-2" fill="none" stroke="#fff" stroke-width="3.2"/></g></svg>
<svg style="left:1970.5px;top:288.5px" width="46" height="46" viewBox="-23 -23 46 46"><circle r="19" fill="none" stroke="#fff" stroke-width="2.4"/><g transform="rotate(90)"><path d="M0,11 L0,-10 M-8,-2 L0,-10 L8,-2" fill="none" stroke="#fff" stroke-width="3.2"/></g></svg>
<svg style="left:2020.5px;top:288.5px" width="46" height="46" viewBox="-23 -23 46 46"><circle r="19" fill="none" stroke="#fff" stroke-width="2.4"/><g transform="rotate(180)"><path d="M0,11 L0,-10 M-8,-2 L0,-10 L8,-2" fill="none" stroke="#fff" stroke-width="3.2"/></g></svg>
<svg style="left:2070.5px;top:288.5px" width="46" height="46" viewBox="-23 -23 46 46"><circle r="19" fill="none" stroke="#fff" stroke-width="2.4"/><g transform="rotate(0)"><path d="M0,11 L0,-10 M-8,-2 L0,-10 L8,-2" fill="none" stroke="#fff" stroke-width="3.2"/></g></svg>
<svg style="left:2129px;top:322px" width="14" height="16"><rect x="1" y="0" width="12" height="2" fill="#ddd"/><path d="M1,5 L13,5 L7,13Z" fill="#ddd"/></svg>
<div style="left:906.0px;top:341.0px;width:1340.0px;height:46.0px;background:#353535;"></div>
<div style="left:910.0px;top:346.0px;width:148.0px;height:36.0px;background:linear-gradient(#f7f7f7,#d9d9d9 45%,#a9a9a9);border-radius:4px;border:1px solid #777;"></div>
<div class="t" style="left:919.0px;top:351.1px;font-size:26px;line-height:26px;color:#111;font-family:'Liberation Sans', sans-serif;transform:scaleX(0.9457);transform-origin:center 0;">Information</div>
<div style="left:1067.0px;top:346.0px;width:183.0px;height:36.0px;background:#3f3f3f;border-radius:4px;border:1px solid #383838;"></div>
<div class="t" style="left:1071.1px;top:351.1px;font-size:26px;line-height:26px;color:#f2f2f2;font-family:'Liberation Sans', sans-serif;transform:scaleX(0.9036);transform-origin:center 0;">Guider settings</div>
<div style="left:1259.0px;top:346.0px;width:127.0px;height:36.0px;background:#3f3f3f;border-radius:4px;border:1px solid #383838;"></div>
<div class="t" style="left:1264.7px;top:351.1px;font-size:26px;line-height:26px;color:#f2f2f2;font-family:'Liberation Sans', sans-serif;transform:scaleX(0.8821);transform-origin:center 0;">Advanced</div>
<div style="left:906.0px;top:385.0px;width:1340.0px;height:2.0px;background:#222;"></div>
<div style="left:906px;top:387px;width:1281px;height:330px;overflow:hidden;background:#434343;">
<div class="t" style="left:1.0px;top:14.1px;font-size:40px;line-height:40px;color:#1ba1dc;font-family:'Liberation Sans', sans-serif;transform:scaleX(1.0229);transform-origin:left 0;">Status</div>
<div class="t" style="left:1.0px;top:74.1px;font-size:40px;line-height:40px;color:#1ba1dc;font-family:'Liberation Sans', sans-serif;transform:scaleX(1.1024);transform-origin:left 0;">Iteration #/Frame rate</div>
<div class="t" style="left:1.0px;top:134.1px;font-size:40px;line-height:40px;color:#1ba1dc;font-family:'Liberation Sans', sans-serif;transform:scaleX(1.0458);transform-origin:left 0;">Error X/Y</div>
<div class="t" style="left:1.0px;top:194.1px;font-size:40px;line-height:40px;color:#1ba1dc;font-family:'Liberation Sans', sans-serif;transform:scaleX(1.0765);transform-origin:left 0;">Correction X/Y</div>
<div class="t" style="left:1.0px;top:254.1px;font-size:40px;line-height:40px;color:#1ba1dc;font-family:'Liberation Sans', sans-serif;transform:scaleX(1.0214);transform-origin:left 0;">RMS X/Y</div>
<div class="t" style="left:1.0px;top:314.1px;font-size:40px;line-height:40px;color:#1ba1dc;font-family:'Liberation Sans', sans-serif;transform:scaleX(1.0704);transform-origin:left 0;">Error X Mean/Stdev</div>
<div style="left:444.0px;top:4.0px;width:634.0px;height:51.0px;background:#323232;border:2px solid #161616;border-radius:3px;"></div>
<div class="t" style="left:452.0px;top:14.8px;font-size:31px;line-height:31px;color:#fff;font-family:'Liberation Sans', sans-serif;">Idle</div>
<div style="left:444.0px;top:64.0px;width:206.0px;height:51.0px;background:#323232;border:2px solid #161616;border-radius:3px;"></div>
<div style="left:658.0px;top:64.0px;width:206.0px;height:51.0px;background:#323232;border:2px solid #161616;border-radius:3px;"></div>
<div style="left:872.0px;top:64.0px;width:206.0px;height:51.0px;background:#323232;border:2px solid #161616;border-radius:3px;"></div>
<div class="t" style="left:624.8px;top:75.8px;font-size:31px;line-height:31px;color:#fff;font-family:'Liberation Sans', sans-serif;transform:scaleX(0.9860);transform-origin:right 0;">0</div>
<div class="t" style="left:1087.0px;top:81.7px;font-size:24px;line-height:24px;color:#f0f0f0;font-family:'Liberation Sans', sans-serif;transform:scaleX(0.9707);transform-origin:left 0;">[ms]</div>
<div style="left:444.0px;top:124.0px;width:313.0px;height:51.0px;background:#323232;border:2px solid #161616;border-radius:3px;"></div>
<div style="left:764.0px;top:124.0px;width:314.0px;height:51.0px;background:#323232;border:2px solid #161616;border-radius:3px;"></div>
<div style="left:444.0px;top:184.0px;width:313.0px;height:51.0px;background:#323232;border:2px solid #161616;border-radius:3px;"></div>
<div style="left:764.0px;top:184.0px;width:314.0px;height:51.0px;background:#323232;border:2px solid #161616;border-radius:3px;"></div>
<div style="left:444.0px;top:304.0px;width:313.0px;height:51.0px;background:#323232;border:2px solid #161616;border-radius:3px;"></div>
<div style="left:764.0px;top:304.0px;width:314.0px;height:51.0px;background:#323232;border:2px solid #161616;border-radius:3px;"></div>
<div style="left:444.0px;top:244.0px;width:263.0px;height:51.0px;background:#323232;border:2px solid #161616;border-radius:3px;"></div>
<div style="left:764.0px;top:244.0px;width:263.0px;height:51.0px;background:#323232;border:2px solid #161616;border-radius:3px;"></div>
<div style="left:711.0px;top:244.0px;width:48.0px;height:51.0px;background:#2e2e2e;border-radius:3px;"></div>
<svg style="left:714.0px;top:249.0px" width="42" height="42" viewBox="-21 -21 42 42"><circle r="17" fill="none" stroke="#ddd" stroke-width="2"/><path d="M-8.5,2.0 L-8.5,-3.7 L3.7,-3.7" fill="none" stroke="#ddd" stroke-width="2.2"/><path d="M3.4,-7.1 L8.5,-3.7 L3.4,-0.3Z" fill="#ddd"/><path d="M8.5,-1.7 L8.5,4.1 L-3.7,4.1" fill="none" stroke="#ddd" stroke-width="2.2"/><path d="M-3.4,0.7 L-8.5,4.1 L-3.4,7.5Z" fill="#ddd"/></svg>
<div style="left:1032.0px;top:244.0px;width:48.0px;height:51.0px;background:#2e2e2e;border-radius:3px;"></div>
<svg style="left:1035.0px;top:249.0px" width="42" height="42" viewBox="-21 -21 42 42"><circle r="17" fill="none" stroke="#ddd" stroke-width="2"/><path d="M-8.5,2.0 L-8.5,-3.7 L3.7,-3.7" fill="none" stroke="#ddd" stroke-width="2.2"/><path d="M3.4,-7.1 L8.5,-3.7 L3.4,-0.3Z" fill="#ddd"/><path d="M8.5,-1.7 L8.5,4.1 L-3.7,4.1" fill="none" stroke="#ddd" stroke-width="2.2"/><path d="M-3.4,0.7 L-8.5,4.1 L-3.4,7.5Z" fill="#ddd"/></svg>
<div style="left:1086.0px;top:129.0px;width:165.0px;height:47.0px;background:#3a3a3a;border-radius:3px;"></div>
<div class="t" style="left:1092.0px;top:144.7px;font-size:24px;line-height:24px;color:#f0f0f0;font-family:'Liberation Sans', sans-serif;transform:scaleX(0.9283);transform-origin:left 0;">[arcsec]</div>
<div style="left:1216.0px;top:133.0px;width:32.0px;height:39.0px;background:#707070;border-radius:3px;"></div>
<svg style="left:1222px;top:145px" width="20" height="14"><path d="M2,2 L10,11 L18,2" fill="none" stroke="#ddd" stroke-width="3"/></svg>
<div style="left:1086.0px;top:249.0px;width:165.0px;height:47.0px;background:#3a3a3a;border-radius:3px;"></div>
<div class="t" style="left:1092.0px;top:264.7px;font-size:24px;line-height:24px;color:#f0f0f0;font-family:'Liberation Sans', sans-serif;transform:scaleX(0.9283);transform-origin:left 0;">[arcsec]</div>
<div style="left:1216.0px;top:253.0px;width:32.0px;height:39.0px;background:#707070;border-radius:3px;"></div>
<svg style="left:1222px;top:265px" width="20" height="14"><path d="M2,2 L10,11 L18,2" fill="none" stroke="#ddd" stroke-width="3"/></svg>
<div style="left:1086.0px;top:369.0px;width:165.0px;height:47.0px;background:#3a3a3a;border-radius:3px;"></div>
<div class="t" style="left:1092.0px;top:384.7px;font-size:24px;line-height:24px;color:#f0f0f0;font-family:'Liberation Sans', sans-serif;transform:scaleX(0.9283);transform-origin:left 0;">[arcsec]</div>
<div style="left:1216.0px;top:373.0px;width:32.0px;height:39.0px;background:#707070;border-radius:3px;"></div>
<svg style="left:1222px;top:385px" width="20" height="14"><path d="M2,2 L10,11 L18,2" fill="none" stroke="#ddd" stroke-width="3"/></svg>
<div class="t" style="left:1087.0px;top:202.7px;font-size:24px;line-height:24px;color:#f0f0f0;font-family:'Liberation Sans', sans-serif;transform:scaleX(0.8330);transform-origin:left 0;">[S.SSS]</div>
</div>
<div style="left:2187.0px;top:387.0px;width:59.0px;height:330.0px;background:#1b1b1b;"></div>
<svg style="left:2207px;top:410px" width="22" height="16"><path d="M1,14 L11,3 L21,14Z" fill="#555"/></svg>
<div style="left:2210.0px;top:448.0px;width:17.0px;height:143.0px;background:#5a5a5a;"></div>
<svg style="left:2207px;top:680px" width="22" height="16"><path d="M1,2 L11,13 L21,2Z" fill="#555"/></svg>
<div style="left:906.0px;top:717.0px;width:1340.0px;height:11.0px;background:#2b2b2b;border-top:2px solid #555;"></div>
<div style="left:1557.0px;top:721.0px;width:40.0px;height:2.0px;background:#666;"></div>
<div style="left:906.0px;top:728.0px;width:1340.0px;height:60.0px;background:#1b1b1b;"></div>
<div style="left:912.0px;top:730.0px;width:469.0px;height:57.0px;background:linear-gradient(#3a3a3a,#333 50%,#2a2a2a 51%,#262626);border-radius:2px;"></div>
<svg style="left:916px;top:736px" width="8" height="45"><rect x="1" y="0" width="4" height="4" fill="#ddd"/><rect x="1" y="7" width="4" height="4" fill="#ddd"/><rect x="1" y="14" width="4" height="4" fill="#ddd"/><rect x="1" y="21" width="4" height="4" fill="#ddd"/><rect x="1" y="28" width="4" height="4" fill="#ddd"/><rect x="1" y="35" width="4" height="4" fill="#ddd"/></svg>
<div style="left:928.0px;top:733.0px;width:48.0px;height:50.0px;background:linear-gradient(#6a6a6a,#5a5a5a 50%,#4a4a4a);border-radius:2px;"></div>
<svg style="left:929.0px;top:735.0px" width="46" height="46" viewBox="-23 -23 46 46"><circle r="19" fill="none" stroke="#c8c8c8" stroke-width="2.4"/><path d="M-10.5,-10.5 L10.5,10.5" stroke="#c8c8c8" stroke-width="2.3"/><ellipse cx="0" cy="0" rx="7.2" ry="5.3" transform="rotate(-45)" fill="#c8c8c8"/></svg>
<div style="left:977.0px;top:733.0px;width:48.0px;height:50.0px;background:#1f1f1f;border-radius:2px;"></div>
<svg style="left:978.0px;top:735.0px" width="46" height="46" viewBox="-23 -23 46 46"><circle r="19" fill="none" stroke="#fff" stroke-width="2.4"/><path d="M-10.5,-10.5 L10.5,10.5" stroke="#fff" stroke-width="2.3"/><ellipse cx="0" cy="0" rx="7.2" ry="5.3" transform="rotate(-45)" fill="#fff"/></svg>
<div style="left:1031.0px;top:738.0px;width:3.0px;height:42.0px;background:#aaa;"></div>
<div style="left:1037.0px;top:733.0px;width:48.0px;height:50.0px;background:linear-gradient(#6a6a6a,#5a5a5a 50%,#4a4a4a);border-radius:2px;"></div>
<svg style="left:1038.0px;top:735.0px" width="46" height="46" viewBox="-23 -23 46 46"><circle r="19" fill="none" stroke="#c8c8c8" stroke-width="2.4"/><path d="M-9.5,9.5 L1.9,-1.9" stroke="#c8c8c8" stroke-width="4.2" stroke-linecap="round"/><circle cx="4.2" cy="-4.2" r="5.3" fill="none" stroke="#c8c8c8" stroke-width="3.0"/></svg>
<div style="left:1091.0px;top:738.0px;width:3.0px;height:42.0px;background:#aaa;"></div>
<div style="left:1097.0px;top:733.0px;width:48.0px;height:50.0px;background:linear-gradient(#6a6a6a,#5a5a5a 50%,#4a4a4a);border-radius:2px;"></div>
<svg style="left:1098.0px;top:735.0px" width="46" height="46" viewBox="-23 -23 46 46"><circle r="19" fill="none" stroke="#c8c8c8" stroke-width="2.4"/><path d="M-5.7,-8.0 L9.5,0 L-5.7,8.0 Z" fill="#c8c8c8"/></svg>
<div style="left:1147.0px;top:733.0px;width:48.0px;height:50.0px;background:#1f1f1f;border-radius:2px;"></div>
<svg style="left:1148.0px;top:735.0px" width="46" height="46" viewBox="-23 -23 46 46"><circle r="19" fill="none" stroke="#fff" stroke-width="2.4"/><rect x="-6.8" y="-7.6" width="4.2" height="15.2" fill="#fff"/><rect x="2.7" y="-7.6" width="4.2" height="15.2" fill="#fff"/></svg>
<div style="left:1197.0px;top:733.0px;width:48.0px;height:50.0px;background:#1f1f1f;border-radius:2px;"></div>
<svg style="left:1198.0px;top:735.0px" width="46" height="46" viewBox="-23 -23 46 46"><circle r="19" fill="none" stroke="#fff" stroke-width="2.4"/><rect x="-5.7" y="-5.7" width="11.4" height="11.4" fill="#fff"/></svg>
<div style="left:1250.0px;top:738.0px;width:3.0px;height:42.0px;background:#aaa;"></div>
<div style="left:1257.0px;top:733.0px;width:48.0px;height:50.0px;background:linear-gradient(#6a6a6a,#5a5a5a 50%,#4a4a4a);border-radius:2px;"></div>
<svg style="left:1258.0px;top:735.0px" width="46" height="46" viewBox="-23 -23 46 46"><circle r="19" fill="none" stroke="#c8c8c8" stroke-width="2.4"/><path d="M-8.6,8.6 L0,0" stroke="#c8c8c8" stroke-width="1.9"/><path d="M-2.9,-6.6 L6.6,2.9 L1.9,3.8 L-3.8,-1.9Z" fill="#c8c8c8" stroke="#c8c8c8" stroke-width="2.9"/></svg>
<div style="left:1307.0px;top:733.0px;width:48.0px;height:50.0px;background:linear-gradient(#6a6a6a,#5a5a5a 50%,#4a4a4a);border-radius:2px;"></div>
<svg style="left:1308.0px;top:735.0px" width="46" height="46" viewBox="-23 -23 46 46"><circle r="19" fill="none" stroke="#c8c8c8" stroke-width="2.4"/><path d="M-8.6,8.6 L0,0" stroke="#c8c8c8" stroke-width="1.9"/><path d="M-2.9,-6.6 L6.6,2.9 L1.9,3.8 L-3.8,-1.9Z" fill="#c8c8c8" stroke="#c8c8c8" stroke-width="2.9"/><path d="M-11.4,-5.7 L11.4,5.7" stroke="#c8c8c8" stroke-width="1.9"/></svg>
<svg style="left:1365px;top:768px" width="14" height="16"><rect x="1" y="0" width="12" height="2" fill="#ddd"/><path d="M1,5 L13,5 L7,13Z" fill="#ddd"/></svg>
<div style="left:1390.0px;top:730.0px;width:440.0px;height:57.0px;background:linear-gradient(#7a7a7a,#6e6e6e 50%,#5c5c5c 51%,#565656);border-radius:2px;"></div>
<svg style="left:1394px;top:736px" width="8" height="45"><rect x="1" y="0" width="4" height="4" fill="#ddd"/><rect x="1" y="7" width="4" height="4" fill="#ddd"/><rect x="1" y="14" width="4" height="4" fill="#ddd"/><rect x="1" y="21" width="4" height="4" fill="#ddd"/><rect x="1" y="28" width="4" height="4" fill="#ddd"/><rect x="1" y="35" width="4" height="4" fill="#ddd"/></svg>
<div class="t" style="left:1405.0px;top:750.0px;font-size:26px;line-height:26px;color:#f0f0f0;font-family:'Liberation Sans', sans-serif;transform:scaleX(0.9075);transform-origin:left 0;">Position [steps]</div>
<div style="left:1605.0px;top:741.0px;width:119.0px;height:38.0px;background:#2b2b2b;border:1px solid #111;border-radius:3px;"></div>
<div class="t" style="left:1643.7px;top:750.0px;font-size:26px;line-height:26px;color:#fff;font-family:'Liberation Sans', sans-serif;transform:scaleX(0.8714);transform-origin:right 0;">32768</div>
<svg style="left:1730px;top:740px" width="18" height="40"><path d="M2,14 L9,4 L16,14Z M2,26 L9,36 L16,26Z" fill="#555"/></svg>
<div style="left:1756.0px;top:732.0px;width:49.0px;height:52.0px;background:linear-gradient(#6a6a6a,#555 50%,#4a4a4a);"></div>
<svg style="left:1757.0px;top:735.0px" width="46" height="46" viewBox="-23 -23 46 46"><circle r="19" fill="none" stroke="#c8c8c8" stroke-width="2.4"/><circle r="10.5" fill="none" stroke="#c8c8c8" stroke-width="2.3"/><circle r="4.2" fill="#c8c8c8"/></svg>
<svg style="left:1814px;top:768px" width="14" height="16"><rect x="1" y="0" width="12" height="2" fill="#ddd"/><path d="M1,5 L13,5 L7,13Z" fill="#ddd"/></svg>
<div style="left:1839.0px;top:730.0px;width:40.0px;height:57.0px;background:linear-gradient(#3a3a3a,#333 50%,#2a2a2a 51%,#262626);border-radius:2px;"></div>
<svg style="left:1843px;top:736px" width="8" height="45"><rect x="1" y="0" width="4" height="4" fill="#ddd"/><rect x="1" y="7" width="4" height="4" fill="#ddd"/><rect x="1" y="14" width="4" height="4" fill="#ddd"/><rect x="1" y="21" width="4" height="4" fill="#ddd"/><rect x="1" y="28" width="4" height="4" fill="#ddd"/><rect x="1" y="35" width="4" height="4" fill="#ddd"/></svg>
<svg style="left:1863px;top:770px" width="14" height="16"><rect x="1" y="0" width="12" height="2" fill="#ddd"/><path d="M1,5 L13,5 L7,13Z" fill="#ddd"/></svg>
<div style="left:906.0px;top:788.0px;width:1340.0px;height:44.0px;background:#353535;"></div>
<div style="left:910.0px;top:791.0px;width:148.0px;height:37.0px;background:linear-gradient(#f7f7f7,#d9d9d9 45%,#a9a9a9);border-radius:4px;border:1px solid #777;"></div>
<div class="t" style="left:919.0px;top:796.6px;font-size:26px;line-height:26px;color:#111;font-family:'Liberation Sans', sans-serif;transform:scaleX(0.9457);transform-origin:center 0;">Information</div>
<div style="left:1067.0px;top:791.0px;width:194.0px;height:37.0px;background:#3f3f3f;border-radius:4px;border:1px solid #383838;"></div>
<div class="t" style="left:1068.6px;top:796.6px;font-size:26px;line-height:26px;color:#f2f2f2;font-family:'Liberation Sans', sans-serif;transform:scaleX(0.8860);transform-origin:center 0;">Focuser settings</div>
<div style="left:1270.0px;top:791.0px;width:127.0px;height:37.0px;background:#3f3f3f;border-radius:4px;border:1px solid #383838;"></div>
<div class="t" style="left:1275.7px;top:796.6px;font-size:26px;line-height:26px;color:#f2f2f2;font-family:'Liberation Sans', sans-serif;transform:scaleX(0.8821);transform-origin:center 0;">Advanced</div>
<div style="left:906.0px;top:830.0px;width:1340.0px;height:2.0px;background:#222;"></div>
<div style="left:906px;top:832px;width:1281px;height:550px;overflow:hidden;background:#434343;">
<div class="t" style="left:1.0px;top:16.1px;font-size:40px;line-height:40px;color:#1ba1dc;font-family:'Liberation Sans', sans-serif;transform:scaleX(1.0229);transform-origin:left 0;">Status</div>
<div class="t" style="left:1.0px;top:76.1px;font-size:40px;line-height:40px;color:#1ba1dc;font-family:'Liberation Sans', sans-serif;transform:scaleX(1.1024);transform-origin:left 0;">Iteration #/Frame rate</div>
<div class="t" style="left:1.0px;top:136.1px;font-size:40px;line-height:40px;color:#1ba1dc;font-family:'Liberation Sans', sans-serif;transform:scaleX(1.0414);transform-origin:left 0;">Stack[%]/SNR[dB]</div>
<div class="t" style="left:1.0px;top:196.1px;font-size:40px;line-height:40px;color:#1ba1dc;font-family:'Liberation Sans', sans-serif;transform:scaleX(1.0691);transform-origin:left 0;">Filter/Reference[%]</div>
<div class="t" style="left:1.0px;top:256.1px;font-size:40px;line-height:40px;color:#1ba1dc;font-family:'Liberation Sans', sans-serif;transform:scaleX(1.0750);transform-origin:left 0;">Gaussian smoothing</div>
<div class="t" style="left:1.0px;top:376.1px;font-size:40px;line-height:40px;color:#1ba1dc;font-family:'Liberation Sans', sans-serif;transform:scaleX(1.0921);transform-origin:left 0;">Absolute</div>
<div class="t" style="left:1.0px;top:436.1px;font-size:40px;line-height:40px;color:#1ba1dc;font-family:'Liberation Sans', sans-serif;transform:scaleX(1.0241);transform-origin:left 0;">Relative</div>
<div style="left:444.0px;top:4.0px;width:834.0px;height:52.0px;background:#323232;border:2px solid #161616;border-radius:3px;"></div>
<div class="t" style="left:452.0px;top:14.8px;font-size:31px;line-height:31px;color:#fff;font-family:'Liberation Sans', sans-serif;">Idle</div>
<div style="left:444.0px;top:64.0px;width:273.0px;height:52.0px;background:#323232;border:2px solid #161616;border-radius:3px;"></div>
<div class="t" style="left:674.5px;top:74.8px;font-size:31px;line-height:31px;color:#fff;font-family:'Liberation Sans', sans-serif;transform:scaleX(1.0800);transform-origin:right 0;">18</div>
<div style="left:724.0px;top:64.0px;width:273.0px;height:52.0px;background:#323232;border:2px solid #161616;border-radius:3px;"></div>
<div class="t" style="left:911.4px;top:74.8px;font-size:31px;line-height:31px;color:#fff;font-family:'Liberation Sans', sans-serif;transform:scaleX(1.0800);transform-origin:right 0;">5,542</div>
<div style="left:1005.0px;top:64.0px;width:273.0px;height:52.0px;background:#323232;border:2px solid #161616;border-radius:3px;"></div>
<div class="t" style="left:1192.4px;top:74.8px;font-size:31px;line-height:31px;color:#fff;font-family:'Liberation Sans', sans-serif;transform:scaleX(1.0800);transform-origin:right 0;">5,454</div>
<div style="left:443.0px;top:129.0px;width:554.0px;height:44.0px;background:#03a8df;"></div>
<div class="t" style="left:689.3px;top:139.7px;font-size:24px;line-height:24px;color:#111;font-family:'Liberation Sans', sans-serif;transform:scaleX(0.9286);transform-origin:center 0;">100%</div>
<div style="left:1005.0px;top:124.0px;width:273.0px;height:52.0px;background:#007f00;border:2px solid #003a00;border-radius:3px;"></div>
<div class="t" style="left:1192.4px;top:135.8px;font-size:31px;line-height:31px;color:#fff;font-family:'Liberation Sans', sans-serif;transform:scaleX(0.9797);transform-origin:right 0;">38.91</div>
<div style="left:444.0px;top:184.0px;width:553.0px;height:52.0px;background:#323232;border:2px solid #161616;border-radius:3px;"></div>
<div class="t" style="left:452.0px;top:194.8px;font-size:31px;line-height:31px;color:#fff;font-family:'Liberation Sans', sans-serif;transform:scaleX(1.0767);transform-origin:left 0;">No filter</div>
<div style="left:1005.0px;top:184.0px;width:273.0px;height:52.0px;background:#323232;border:2px solid #161616;border-radius:3px;"></div>
<div style="left:444.0px;top:244.0px;width:834.0px;height:52.0px;background:#323232;border:2px solid #161616;border-radius:3px;"></div>
<div class="t" style="left:1209.7px;top:255.8px;font-size:31px;line-height:31px;color:#fff;font-family:'Liberation Sans', sans-serif;transform:scaleX(0.9613);transform-origin:right 0;">0.00</div>
<div class="t" style="left:516.8px;top:321.8px;font-size:25px;line-height:25px;color:#e8e8e8;font-family:'Liberation Sans', sans-serif;transform:scaleX(0.9413);transform-origin:center 0;">Current [%]</div>
<div class="t" style="left:792.1px;top:321.8px;font-size:25px;line-height:25px;color:#e8e8e8;font-family:'Liberation Sans', sans-serif;transform:scaleX(0.9283);transform-origin:center 0;">Average [%]</div>
<div class="t" style="left:1093.6px;top:321.8px;font-size:25px;line-height:25px;color:#e8e8e8;font-family:'Liberation Sans', sans-serif;transform:scaleX(0.9708);transform-origin:center 0;">Angle [°]</div>
<div style="left:444.0px;top:364.0px;width:273.0px;height:52.0px;background:#ffa500;border:2px solid #5a3a00;border-radius:3px;"></div>
<div class="t" style="left:647.7px;top:375.8px;font-size:31px;line-height:31px;color:#111;font-family:'Liberation Sans', sans-serif;transform:scaleX(0.9447);transform-origin:right 0;">9.23</div>
<div style="left:724.0px;top:364.0px;width:223.0px;height:52.0px;background:#ffa500;border:2px solid #5a3a00;border-radius:3px;"></div>
<div class="t" style="left:878.7px;top:375.8px;font-size:31px;line-height:31px;color:#111;font-family:'Liberation Sans', sans-serif;transform:scaleX(0.9447);transform-origin:right 0;">8.82</div>
<div style="left:951.0px;top:364.0px;width:48.0px;height:52.0px;background:#2e2e2e;border-radius:3px;"></div>
<svg style="left:953.0px;top:368.0px" width="44" height="44" viewBox="-22 -22 44 44"><circle r="18" fill="none" stroke="#eee" stroke-width="2.2"/><path d="M-9.0,2.2 L-9.0,-4.0 L4.0,-4.0" fill="none" stroke="#eee" stroke-width="2.3"/><path d="M3.6,-7.6 L9.0,-4.0 L3.6,-0.4Z" fill="#eee"/><path d="M9.0,-1.8 L9.0,4.3 L-4.0,4.3" fill="none" stroke="#eee" stroke-width="2.3"/><path d="M-3.6,0.7 L-9.0,4.3 L-3.6,7.9Z" fill="#eee"/></svg>
<div style="left:1005.0px;top:364.0px;width:273.0px;height:52.0px;background:#323232;border:2px solid #161616;border-radius:3px;"></div>
<div class="t" style="left:1182.1px;top:375.8px;font-size:31px;line-height:31px;color:#fff;font-family:'Liberation Sans', sans-serif;transform:scaleX(1.0800);transform-origin:right 0;">-37.08</div>
<div style="left:444.0px;top:424.0px;width:273.0px;height:52.0px;background:#ffa500;border:2px solid #5a3a00;border-radius:3px;"></div>
<div class="t" style="left:647.7px;top:435.8px;font-size:31px;line-height:31px;color:#111;font-family:'Liberation Sans', sans-serif;transform:scaleX(0.9447);transform-origin:right 0;">9.23</div>
<div style="left:724.0px;top:424.0px;width:223.0px;height:52.0px;background:#ffa500;border:2px solid #5a3a00;border-radius:3px;"></div>
<div class="t" style="left:878.7px;top:435.8px;font-size:31px;line-height:31px;color:#111;font-family:'Liberation Sans', sans-serif;transform:scaleX(0.9447);transform-origin:right 0;">8.82</div>
<div style="left:951.0px;top:424.0px;width:48.0px;height:52.0px;background:#2e2e2e;border-radius:3px;"></div>
<svg style="left:953.0px;top:428.0px" width="44" height="44" viewBox="-22 -22 44 44"><circle r="18" fill="none" stroke="#eee" stroke-width="2.2"/><path d="M-9.0,2.2 L-9.0,-4.0 L4.0,-4.0" fill="none" stroke="#eee" stroke-width="2.3"/><path d="M3.6,-7.6 L9.0,-4.0 L3.6,-0.4Z" fill="#eee"/><path d="M9.0,-1.8 L9.0,4.3 L-4.0,4.3" fill="none" stroke="#eee" stroke-width="2.3"/><path d="M-3.6,0.7 L-9.0,4.3 L-3.6,7.9Z" fill="#eee"/></svg>
<div style="left:1005.0px;top:424.0px;width:273.0px;height:52.0px;background:#323232;border:2px solid #161616;border-radius:3px;"></div>
<div class="t" style="left:1209.7px;top:435.8px;font-size:31px;line-height:31px;color:#fff;font-family:'Liberation Sans', sans-serif;transform:scaleX(1.0800);transform-origin:right 0;">0.00</div>
<div class="t" style="left:482.0px;top:501.8px;font-size:25px;line-height:25px;color:#e8e8e8;font-family:'Liberation Sans', sans-serif;transform:scaleX(0.9443);transform-origin:center 0;">Correction [steps]</div>
<div class="t" style="left:778.0px;top:501.8px;font-size:25px;line-height:25px;color:#e8e8e8;font-family:'Liberation Sans', sans-serif;transform:scaleX(0.9454);transform-origin:center 0;">Current [steps]</div>
<div class="t" style="left:1077.1px;top:501.8px;font-size:25px;line-height:25px;color:#e8e8e8;font-family:'Liberation Sans', sans-serif;transform:scaleX(0.9389);transform-origin:center 0;">Max [steps]</div>
<div style="left:444.0px;top:544.0px;width:273.0px;height:52.0px;background:#323232;border:2px solid #161616;border-radius:3px;"></div>
<div style="left:724.0px;top:544.0px;width:273.0px;height:52.0px;background:#323232;border:2px solid #161616;border-radius:3px;"></div>
<div style="left:1025.0px;top:544.0px;width:253.0px;height:52.0px;background:#323232;border:2px solid #161616;border-radius:3px;"></div>
</div>
<div style="left:2187.0px;top:832.0px;width:59.0px;height:550.0px;background:#1b1b1b;"></div>
<svg style="left:2207px;top:857px" width="22" height="16"><path d="M1,14 L11,3 L21,14Z" fill="#555"/></svg>
<div style="left:2210.0px;top:894.0px;width:17.0px;height:243.0px;background:#5a5a5a;"></div>
<svg style="left:2207px;top:1343px" width="22" height="16"><path d="M1,2 L11,13 L21,2Z" fill="#555"/></svg>
<div style="left:2.0px;top:1382.0px;width:2244.0px;height:8.0px;background:#2b2b2b;border-top:2px solid #555;"></div>
<div style="left:8.0px;top:1386.0px;width:40.0px;height:2.0px;background:#666;"></div>
<div style="left:2.0px;top:1390.0px;width:2244.0px;height:50.0px;background:#3b3b3b;"></div>
<div style="left:10.0px;top:1397.0px;width:106.0px;height:37.0px;background:#3f3f3f;border-radius:4px;border:1px solid #383838;"></div>
<div class="t" style="left:18.2px;top:1402.6px;font-size:26px;line-height:26px;color:#f2f2f2;font-family:'Liberation Sans', sans-serif;transform:scaleX(0.9039);transform-origin:center 0;">Guiding</div>
<div style="left:125.0px;top:1397.0px;width:118.0px;height:37.0px;background:linear-gradient(#f7f7f7,#d9d9d9 45%,#a9a9a9);border-radius:4px;border:1px solid #777;"></div>
<div class="t" style="left:131.3px;top:1402.6px;font-size:26px;line-height:26px;color:#111;font-family:'Liberation Sans', sans-serif;transform:scaleX(0.8816);transform-origin:center 0;">Focusing</div>
<div style="left:251.0px;top:1397.0px;width:167.0px;height:37.0px;background:#3f3f3f;border-radius:4px;border:1px solid #383838;"></div>
<div class="t" style="left:253.6px;top:1402.6px;font-size:26px;line-height:26px;color:#f2f2f2;font-family:'Liberation Sans', sans-serif;transform:scaleX(0.8774);transform-origin:center 0;">Performances</div>
<div style="left:427.0px;top:1397.0px;width:63.0px;height:37.0px;background:#3f3f3f;border-radius:4px;border:1px solid #383838;"></div>
<div class="t" style="left:436.8px;top:1402.6px;font-size:26px;line-height:26px;color:#f2f2f2;font-family:'Liberation Sans', sans-serif;transform:scaleX(0.8760);transform-origin:center 0;">Log</div>
<div style="left:3.0px;top:1440.0px;width:2243.0px;height:542.0px;background:#4f4f4f;border:2px solid #8a8a8a;"></div>
<div style="left:7.0px;top:1446.0px;width:98.0px;height:531.0px;background:#1b1b1b;"></div>
<div style="left:14.0px;top:1446.0px;width:90.0px;height:57.0px;background:linear-gradient(#3a3a3a,#333 50%,#2a2a2a 51%,#262626);border-radius:2px;"></div>
<svg style="left:18px;top:1452px" width="8" height="45"><rect x="1" y="0" width="4" height="4" fill="#ddd"/><rect x="1" y="7" width="4" height="4" fill="#ddd"/><rect x="1" y="14" width="4" height="4" fill="#ddd"/><rect x="1" y="21" width="4" height="4" fill="#ddd"/><rect x="1" y="28" width="4" height="4" fill="#ddd"/><rect x="1" y="35" width="4" height="4" fill="#ddd"/></svg>
<div style="left:30.0px;top:1450.0px;width:46.0px;height:50.0px;background:#1f1f1f;"></div>
<svg style="left:30.0px;top:1452.0px" width="46" height="46" viewBox="-23 -23 46 46"><circle r="19" fill="none" stroke="#fff" stroke-width="2.6"/><rect x="-5.7" y="-5.7" width="11.4" height="13.3" fill="none" stroke="#fff" stroke-width="1.9"/><path d="M-8.0,-6.8 L8.0,-6.8 M-1.9,-3.8 L-1.9,5.7 M1.9,-3.8 L1.9,5.7" stroke="#fff" stroke-width="1.9"/></svg>
<svg style="left:87px;top:1484px" width="14" height="16"><rect x="1" y="0" width="12" height="2" fill="#ddd"/><path d="M1,5 L13,5 L7,13Z" fill="#ddd"/></svg>
<div style="left:105.0px;top:1602.0px;width:2135.0px;height:10.0px;background:#2b2b2b;border-top:2px solid #3a3a3a;"></div>
<div style="left:155.0px;top:1607.0px;width:40.0px;height:2.0px;background:#777;"></div>
<svg style="left:0px;top:0px" width="2250" height="2000"><line x1="178.0" y1="1458" x2="178.0" y2="1536" stroke="#e8e8e8" stroke-width="2"/><text x="178.0" y="1566" text-anchor="middle" font-size="20" fill="#bdbdbd" font-family="Liberation Sans">1</text><line x1="386.6" y1="1458" x2="386.6" y2="1536" stroke="#e8e8e8" stroke-width="2"/><text x="386.6" y="1566" text-anchor="middle" font-size="20" fill="#bdbdbd" font-family="Liberation Sans">6</text><line x1="595.2" y1="1458" x2="595.2" y2="1536" stroke="#e8e8e8" stroke-width="2"/><text x="595.2" y="1566" text-anchor="middle" font-size="20" fill="#bdbdbd" font-family="Liberation Sans">11</text><line x1="803.8" y1="1458" x2="803.8" y2="1536" stroke="#e8e8e8" stroke-width="2"/><text x="803.8" y="1566" text-anchor="middle" font-size="20" fill="#bdbdbd" font-family="Liberation Sans">16</text><line x1="1012.4" y1="1458" x2="1012.4" y2="1536" stroke="#e8e8e8" stroke-width="2"/><text x="1012.4" y="1566" text-anchor="middle" font-size="20" fill="#bdbdbd" font-family="Liberation Sans">21</text><line x1="1221.0" y1="1458" x2="1221.0" y2="1536" stroke="#e8e8e8" stroke-width="2"/><text x="1221.0" y="1566" text-anchor="middle" font-size="20" fill="#bdbdbd" font-family="Liberation Sans">26</text><line x1="1429.6" y1="1458" x2="1429.6" y2="1536" stroke="#e8e8e8" stroke-width="2"/><text x="1429.6" y="1566" text-anchor="middle" font-size="20" fill="#bdbdbd" font-family="Liberation Sans">31</text><line x1="1638.2" y1="1458" x2="1638.2" y2="1536" stroke="#e8e8e8" stroke-width="2"/><text x="1638.2" y="1566" text-anchor="middle" font-size="20" fill="#bdbdbd" font-family="Liberation Sans">36</text><line x1="1846.8" y1="1458" x2="1846.8" y2="1536" stroke="#e8e8e8" stroke-width="2"/><text x="1846.8" y="1566" text-anchor="middle" font-size="20" fill="#bdbdbd" font-family="Liberation Sans">41</text><line x1="2055.4" y1="1458" x2="2055.4" y2="1536" stroke="#e8e8e8" stroke-width="2"/><text x="2055.4" y="1566" text-anchor="middle" font-size="20" fill="#bdbdbd" font-family="Liberation Sans">46</text><line x1="170" y1="1466" x2="2231" y2="1466" stroke="#e8e8e8" stroke-width="2"/><text x="162" y="1473" text-anchor="end" font-size="20" fill="#bdbdbd" font-family="Liberation Sans">32800</text><line x1="170" y1="1529" x2="2231" y2="1529" stroke="#e8e8e8" stroke-width="2"/><text x="162" y="1536" text-anchor="end" font-size="20" fill="#bdbdbd" font-family="Liberation Sans">32750</text><polyline points="178.0,1506.0 219.7,1506.0 261.4,1506.0 303.2,1506.0 344.9,1506.0 386.6,1506.0 426.3,1506.0 428.3,1496.0 470.0,1496.0 511.8,1496.0 553.5,1496.0 595.2,1496.0 636.9,1496.0 676.6,1496.0 678.6,1485.0 720.4,1485.0 762.1,1485.0 803.8,1485.0 845.5,1485.0 887.2,1485.0" fill="none" stroke="#008000" stroke-width="4"/><circle cx="178.0" cy="1506" r="6.5" fill="#fff" stroke="#008000" stroke-width="3.5"/><circle cx="219.7" cy="1506" r="6.5" fill="#fff" stroke="#008000" stroke-width="3.5"/><circle cx="261.4" cy="1506" r="6.5" fill="#fff" stroke="#008000" stroke-width="3.5"/><circle cx="303.2" cy="1506" r="6.5" fill="#fff" stroke="#008000" stroke-width="3.5"/><circle cx="344.9" cy="1506" r="6.5" fill="#fff" stroke="#008000" stroke-width="3.5"/><circle cx="386.6" cy="1506" r="6.5" fill="#fff" stroke="#008000" stroke-width="3.5"/><circle cx="428.3" cy="1496" r="6.5" fill="#fff" stroke="#008000" stroke-width="3.5"/><circle cx="470.0" cy="1496" r="6.5" fill="#fff" stroke="#008000" stroke-width="3.5"/><circle cx="511.8" cy="1496" r="6.5" fill="#fff" stroke="#008000" stroke-width="3.5"/><circle cx="553.5" cy="1496" r="6.5" fill="#fff" stroke="#008000" stroke-width="3.5"/><circle cx="595.2" cy="1496" r="6.5" fill="#fff" stroke="#008000" stroke-width="3.5"/><circle cx="636.9" cy="1496" r="6.5" fill="#fff" stroke="#008000" stroke-width="3.5"/><circle cx="678.6" cy="1485" r="6.5" fill="#fff" stroke="#008000" stroke-width="3.5"/><circle cx="720.4" cy="1485" r="6.5" fill="#fff" stroke="#008000" stroke-width="3.5"/><circle cx="762.1" cy="1485" r="6.5" fill="#fff" stroke="#008000" stroke-width="3.5"/><circle cx="803.8" cy="1485" r="6.5" fill="#fff" stroke="#008000" stroke-width="3.5"/><circle cx="845.5" cy="1485" r="6.5" fill="#fff" stroke="#008000" stroke-width="3.5"/><circle cx="887.2" cy="1485" r="6.5" fill="#fff" stroke="#008000" stroke-width="3.5"/><circle cx="1123" cy="1582" r="10" fill="#fff" stroke="#008000" stroke-width="4"/><text x="1147" y="1591" font-size="24" fill="#1ba1dc" font-family="Liberation Sans">Position</text><line x1="151.0" y1="1627" x2="151.0" y2="1911" stroke="#e8e8e8" stroke-width="2"/><text x="151.0" y="1941" text-anchor="middle" font-size="20" fill="#bdbdbd" font-family="Liberation Sans">1</text><line x1="362.2" y1="1627" x2="362.2" y2="1911" stroke="#e8e8e8" stroke-width="2"/><text x="362.2" y="1941" text-anchor="middle" font-size="20" fill="#bdbdbd" font-family="Liberation Sans">6</text><line x1="573.4" y1="1627" x2="573.4" y2="1911" stroke="#e8e8e8" stroke-width="2"/><text x="573.4" y="1941" text-anchor="middle" font-size="20" fill="#bdbdbd" font-family="Liberation Sans">11</text><line x1="784.6" y1="1627" x2="784.6" y2="1911" stroke="#e8e8e8" stroke-width="2"/><text x="784.6" y="1941" text-anchor="middle" font-size="20" fill="#bdbdbd" font-family="Liberation Sans">16</text><line x1="995.8" y1="1627" x2="995.8" y2="1911" stroke="#e8e8e8" stroke-width="2"/><text x="995.8" y="1941" text-anchor="middle" font-size="20" fill="#bdbdbd" font-family="Liberation Sans">21</text><line x1="1207.0" y1="1627" x2="1207.0" y2="1911" stroke="#e8e8e8" stroke-width="2"/><text x="1207.0" y="1941" text-anchor="middle" font-size="20" fill="#bdbdbd" font-family="Liberation Sans">26</text><line x1="1418.2" y1="1627" x2="1418.2" y2="1911" stroke="#e8e8e8" stroke-width="2"/><text x="1418.2" y="1941" text-anchor="middle" font-size="20" fill="#bdbdbd" font-family="Liberation Sans">31</text><line x1="1629.4" y1="1627" x2="1629.4" y2="1911" stroke="#e8e8e8" stroke-width="2"/><text x="1629.4" y="1941" text-anchor="middle" font-size="20" fill="#bdbdbd" font-family="Liberation Sans">36</text><line x1="1840.6" y1="1627" x2="1840.6" y2="1911" stroke="#e8e8e8" stroke-width="2"/><text x="1840.6" y="1941" text-anchor="middle" font-size="20" fill="#bdbdbd" font-family="Liberation Sans">41</text><line x1="2051.8" y1="1627" x2="2051.8" y2="1911" stroke="#e8e8e8" stroke-width="2"/><text x="2051.8" y="1941" text-anchor="middle" font-size="20" fill="#bdbdbd" font-family="Liberation Sans">46</text><line x1="143" y1="1634.9" x2="2231" y2="1634.9" stroke="#e8e8e8" stroke-width="2"/><text x="136" y="1641.9" text-anchor="end" font-size="20" fill="#bdbdbd" font-family="Liberation Sans">30</text><line x1="143" y1="1688.6" x2="2231" y2="1688.6" stroke="#e8e8e8" stroke-width="2"/><text x="136" y="1695.6" text-anchor="end" font-size="20" fill="#bdbdbd" font-family="Liberation Sans">20</text><line x1="143" y1="1742.3" x2="2231" y2="1742.3" stroke="#e8e8e8" stroke-width="2"/><text x="136" y="1749.3" text-anchor="end" font-size="20" fill="#bdbdbd" font-family="Liberation Sans">10</text><line x1="143" y1="1796.0" x2="2231" y2="1796.0" stroke="#e8e8e8" stroke-width="2"/><text x="136" y="1803.0" text-anchor="end" font-size="20" fill="#bdbdbd" font-family="Liberation Sans">0</text><line x1="143" y1="1849.7" x2="2231" y2="1849.7" stroke="#e8e8e8" stroke-width="2"/><text x="136" y="1856.7" text-anchor="end" font-size="20" fill="#bdbdbd" font-family="Liberation Sans">-10</text><line x1="143" y1="1903.4" x2="2231" y2="1903.4" stroke="#e8e8e8" stroke-width="2"/><text x="136" y="1910.4" text-anchor="end" font-size="20" fill="#bdbdbd" font-family="Liberation Sans">-20</text><polygon points="151.0,1730.0 193.2,1729.0 235.5,1728.0 277.7,1728.0 320.0,1728.0 362.2,1727.5 404.4,1724.0 446.7,1715.0 488.9,1708.0 531.2,1704.5 573.4,1701.5 615.6,1702.0 657.9,1696.5 700.1,1691.0 742.4,1688.0 784.6,1687.5 826.8,1685.0 869.1,1683.5 869.1,1812.5 826.8,1814.0 784.6,1816.0 742.4,1817.0 700.1,1820.0 657.9,1825.0 615.6,1831.0 573.4,1830.5 531.2,1833.0 488.9,1836.5 446.7,1843.5 404.4,1853.0 362.2,1856.5 320.0,1857.0 277.7,1857.0 235.5,1857.0 193.2,1858.0 151.0,1858.5" fill="#ffa500"/><polyline points="151.0,1730.0 193.2,1729.0 235.5,1728.0 277.7,1728.0 320.0,1728.0 362.2,1727.5 404.4,1724.0 446.7,1715.0 488.9,1708.0 531.2,1704.5 573.4,1701.5 615.6,1702.0 657.9,1696.5 700.1,1691.0 742.4,1688.0 784.6,1687.5 826.8,1685.0 869.1,1683.5" fill="none" stroke="#ff4500" stroke-width="4"/><polyline points="151.0,1858.5 193.2,1858.0 235.5,1857.0 277.7,1857.0 320.0,1857.0 362.2,1856.5 404.4,1853.0 446.7,1843.5 488.9,1836.5 531.2,1833.0 573.4,1830.5 615.6,1831.0 657.9,1825.0 700.1,1820.0 742.4,1817.0 784.6,1816.0 826.8,1814.0 869.1,1812.5" fill="none" stroke="#ff4500" stroke-width="4"/><polyline points="151.0,1794.5 193.2,1793.0 235.5,1792.0 277.7,1792.5 320.0,1793.5 362.2,1791.5 404.4,1783.0 446.7,1766.5 488.9,1762.5 531.2,1763.5 573.4,1760.5 615.6,1768.5 657.9,1752.5 700.1,1748.0 742.4,1748.5 784.6,1750.0 826.8,1745.0 869.1,1745.0" fill="none" stroke="#000" stroke-width="4"/><polyline points="151.0,1794.5 193.2,1793.5 235.5,1793.0 277.7,1792.5 320.0,1793.0 362.2,1792.0 404.4,1788.0 446.7,1779.0 488.9,1772.5 531.2,1769.0 573.4,1766.0 615.6,1767.0 657.9,1760.5 700.1,1755.5 742.4,1753.0 784.6,1751.5 826.8,1749.0 869.1,1747.5" fill="none" stroke="#008000" stroke-width="4"/><circle cx="151.0" cy="1730.0" r="6.5" fill="#fff" stroke="#ff4500" stroke-width="3.5"/><circle cx="193.2" cy="1729.0" r="6.5" fill="#fff" stroke="#ff4500" stroke-width="3.5"/><circle cx="235.5" cy="1728.0" r="6.5" fill="#fff" stroke="#ff4500" stroke-width="3.5"/><circle cx="277.7" cy="1728.0" r="6.5" fill="#fff" stroke="#ff4500" stroke-width="3.5"/><circle cx="320.0" cy="1728.0" r="6.5" fill="#fff" stroke="#ff4500" stroke-width="3.5"/><circle cx="362.2" cy="1727.5" r="6.5" fill="#fff" stroke="#ff4500" stroke-width="3.5"/><circle cx="404.4" cy="1724.0" r="6.5" fill="#fff" stroke="#ff4500" stroke-width="3.5"/><circle cx="446.7" cy="1715.0" r="6.5" fill="#fff" stroke="#ff4500" stroke-width="3.5"/><circle cx="488.9" cy="1708.0" r="6.5" fill="#fff" stroke="#ff4500" stroke-width="3.5"/><circle cx="531.2" cy="1704.5" r="6.5" fill="#fff" stroke="#ff4500" stroke-width="3.5"/><circle cx="573.4" cy="1701.5" r="6.5" fill="#fff" stroke="#ff4500" stroke-width="3.5"/><circle cx="615.6" cy="1702.0" r="6.5" fill="#fff" stroke="#ff4500" stroke-width="3.5"/><circle cx="657.9" cy="1696.5" r="6.5" fill="#fff" stroke="#ff4500" stroke-width="3.5"/><circle cx="700.1" cy="1691.0" r="6.5" fill="#fff" stroke="#ff4500" stroke-width="3.5"/><circle cx="742.4" cy="1688.0" r="6.5" fill="#fff" stroke="#ff4500" stroke-width="3.5"/><circle cx="784.6" cy="1687.5" r="6.5" fill="#fff" stroke="#ff4500" stroke-width="3.5"/><circle cx="826.8" cy="1685.0" r="6.5" fill="#fff" stroke="#ff4500" stroke-width="3.5"/><circle cx="869.1" cy="1683.5" r="6.5" fill="#fff" stroke="#ff4500" stroke-width="3.5"/><circle cx="151.0" cy="1858.5" r="6.5" fill="#fff" stroke="#ff4500" stroke-width="3.5"/><circle cx="193.2" cy="1858.0" r="6.5" fill="#fff" stroke="#ff4500" stroke-width="3.5"/><circle cx="235.5" cy="1857.0" r="6.5" fill="#fff" stroke="#ff4500" stroke-width="3.5"/><circle cx="277.7" cy="1857.0" r="6.5" fill="#fff" stroke="#ff4500" stroke-width="3.5"/><circle cx="320.0" cy="1857.0" r="6.5" fill="#fff" stroke="#ff4500" stroke-width="3.5"/><circle cx="362.2" cy="1856.5" r="6.5" fill="#fff" stroke="#ff4500" stroke-width="3.5"/><circle cx="404.4" cy="1853.0" r="6.5" fill="#fff" stroke="#ff4500" stroke-width="3.5"/><circle cx="446.7" cy="1843.5" r="6.5" fill="#fff" stroke="#ff4500" stroke-width="3.5"/><circle cx="488.9" cy="1836.5" r="6.5" fill="#fff" stroke="#ff4500" stroke-width="3.5"/><circle cx="531.2" cy="1833.0" r="6.5" fill="#fff" stroke="#ff4500" stroke-width="3.5"/><circle cx="573.4" cy="1830.5" r="6.5" fill="#fff" stroke="#ff4500" stroke-width="3.5"/><circle cx="615.6" cy="1831.0" r="6.5" fill="#fff" stroke="#ff4500" stroke-width="3.5"/><circle cx="657.9" cy="1825.0" r="6.5" fill="#fff" stroke="#ff4500" stroke-width="3.5"/><circle cx="700.1" cy="1820.0" r="6.5" fill="#fff" stroke="#ff4500" stroke-width="3.5"/><circle cx="742.4" cy="1817.0" r="6.5" fill="#fff" stroke="#ff4500" stroke-width="3.5"/><circle cx="784.6" cy="1816.0" r="6.5" fill="#fff" stroke="#ff4500" stroke-width="3.5"/><circle cx="826.8" cy="1814.0" r="6.5" fill="#fff" stroke="#ff4500" stroke-width="3.5"/><circle cx="869.1" cy="1812.5" r="6.5" fill="#fff" stroke="#ff4500" stroke-width="3.5"/><circle cx="151.0" cy="1794.5" r="6.5" fill="#fff" stroke="#000" stroke-width="3.5"/><circle cx="193.2" cy="1793.0" r="6.5" fill="#fff" stroke="#000" stroke-width="3.5"/><circle cx="235.5" cy="1792.0" r="6.5" fill="#fff" stroke="#000" stroke-width="3.5"/><circle cx="277.7" cy="1792.5" r="6.5" fill="#fff" stroke="#000" stroke-width="3.5"/><circle cx="320.0" cy="1793.5" r="6.5" fill="#fff" stroke="#000" stroke-width="3.5"/><circle cx="362.2" cy="1791.5" r="6.5" fill="#fff" stroke="#000" stroke-width="3.5"/><circle cx="404.4" cy="1783.0" r="6.5" fill="#fff" stroke="#000" stroke-width="3.5"/><circle cx="446.7" cy="1766.5" r="6.5" fill="#fff" stroke="#000" stroke-width="3.5"/><circle cx="488.9" cy="1762.5" r="6.5" fill="#fff" stroke="#000" stroke-width="3.5"/><circle cx="531.2" cy="1763.5" r="6.5" fill="#fff" stroke="#000" stroke-width="3.5"/><circle cx="573.4" cy="1760.5" r="6.5" fill="#fff" stroke="#000" stroke-width="3.5"/><circle cx="615.6" cy="1768.5" r="6.5" fill="#fff" stroke="#000" stroke-width="3.5"/><circle cx="657.9" cy="1752.5" r="6.5" fill="#fff" stroke="#000" stroke-width="3.5"/><circle cx="700.1" cy="1748.0" r="6.5" fill="#fff" stroke="#000" stroke-width="3.5"/><circle cx="742.4" cy="1748.5" r="6.5" fill="#fff" stroke="#000" stroke-width="3.5"/><circle cx="784.6" cy="1750.0" r="6.5" fill="#fff" stroke="#000" stroke-width="3.5"/><circle cx="826.8" cy="1745.0" r="6.5" fill="#fff" stroke="#000" stroke-width="3.5"/><circle cx="869.1" cy="1745.0" r="6.5" fill="#fff" stroke="#000" stroke-width="3.5"/><circle cx="151.0" cy="1794.5" r="6.5" fill="#fff" stroke="#008000" stroke-width="3.5"/><circle cx="193.2" cy="1793.5" r="6.5" fill="#fff" stroke="#008000" stroke-width="3.5"/><circle cx="235.5" cy="1793.0" r="6.5" fill="#fff" stroke="#008000" stroke-width="3.5"/><circle cx="277.7" cy="1792.5" r="6.5" fill="#fff" stroke="#008000" stroke-width="3.5"/><circle cx="320.0" cy="1793.0" r="6.5" fill="#fff" stroke="#008000" stroke-width="3.5"/><circle cx="362.2" cy="1792.0" r="6.5" fill="#fff" stroke="#008000" stroke-width="3.5"/><circle cx="404.4" cy="1788.0" r="6.5" fill="#fff" stroke="#008000" stroke-width="3.5"/><circle cx="446.7" cy="1779.0" r="6.5" fill="#fff" stroke="#008000" stroke-width="3.5"/><circle cx="488.9" cy="1772.5" r="6.5" fill="#fff" stroke="#008000" stroke-width="3.5"/><circle cx="531.2" cy="1769.0" r="6.5" fill="#fff" stroke="#008000" stroke-width="3.5"/><circle cx="573.4" cy="1766.0" r="6.5" fill="#fff" stroke="#008000" stroke-width="3.5"/><circle cx="615.6" cy="1767.0" r="6.5" fill="#fff" stroke="#008000" stroke-width="3.5"/><circle cx="657.9" cy="1760.5" r="6.5" fill="#fff" stroke="#008000" stroke-width="3.5"/><circle cx="700.1" cy="1755.5" r="6.5" fill="#fff" stroke="#008000" stroke-width="3.5"/><circle cx="742.4" cy="1753.0" r="6.5" fill="#fff" stroke="#008000" stroke-width="3.5"/><circle cx="784.6" cy="1751.5" r="6.5" fill="#fff" stroke="#008000" stroke-width="3.5"/><circle cx="826.8" cy="1749.0" r="6.5" fill="#fff" stroke="#008000" stroke-width="3.5"/><circle cx="869.1" cy="1747.5" r="6.5" fill="#fff" stroke="#008000" stroke-width="3.5"/><circle cx="794" cy="1959" r="10.5" fill="#fff" stroke="#ff4500" stroke-width="4"/><text x="817" y="1968" font-size="24" fill="#1ba1dc" font-family="Liberation Sans">Maximum</text><circle cx="953" cy="1959" r="10.5" fill="#fff" stroke="#ff4500" stroke-width="4"/><text x="977" y="1968" font-size="24" fill="#1ba1dc" font-family="Liberation Sans">Minimum</text><circle cx="1108" cy="1959" r="10.5" fill="#fff" stroke="#000" stroke-width="4"/><text x="1132" y="1968" font-size="24" fill="#1ba1dc" font-family="Liberation Sans">Current RRDN[%]</text><circle cx="1346" cy="1959" r="10.5" fill="#fff" stroke="#008000" stroke-width="4"/><text x="1370" y="1968" font-size="24" fill="#1ba1dc" font-family="Liberation Sans">Average RRDN[%]</text></svg>
<div style="left:2.0px;top:1982.0px;width:2244.0px;height:100.0px;background:#1b1b1b;"></div>
<div style="left:5.0px;top:1986.0px;width:87.0px;height:89.0px;background:#1e1e1e;border:1px solid #2c2c2c;"></div>
<svg style="left:10.0px;top:1990.0px" width="78" height="78" viewBox="-39 -39 78 78"><circle r="35" fill="none" stroke="#fff" stroke-width="3.5"/><circle cx="0" cy="-10.5" r="9.8" fill="#fff"/><rect x="-3.1" y="-3.5" width="6.3" height="26.2" fill="#fff"/><rect x="0" y="10.5" width="7.0" height="4.2" fill="#fff"/><circle cx="0" cy="-12.2" r="2.8" fill="#1b1b1b"/></svg>
<div class="t" style="left:95.0px;top:2008.9px;font-size:45px;line-height:45px;color:#1ba1dc;font-family:'Liberation Sans', sans-serif;transform:scaleX(0.9921);transform-origin:left 0;">Working folder</div>
<div style="left:475.0px;top:2002.0px;width:1491.0px;height:50.0px;background:#333;border:2px solid #0a0a0a;border-radius:3px;"></div>
<div class="t" style="left:483.0px;top:2010.9px;font-size:32px;line-height:32px;color:#fff;font-family:'Liberation Sans', sans-serif;transform:scaleX(0.9850);transform-origin:left 0;">C:\_data\Demo</div>
<div style="left:1972.0px;top:1986.0px;width:90.0px;height:89.0px;background:#1e1e1e;border:1px solid #2c2c2c;"></div>
<svg style="left:1978.0px;top:1991.0px" width="78" height="78" viewBox="-39 -39 78 78"><circle r="35" fill="none" stroke="#fff" stroke-width="3.5"/><path d="M-19.2,-14.7 L-3.5,-14.7 L0.0,-10.5 L17.5,-10.5 L17.5,12.2 L-19.2,12.2Z" fill="#fff"/><path d="M14.0,1.8 L14.0,27.3 M1.1,14.7 L26.9,14.7" stroke="#1b1b1b" stroke-width="10.5"/><path d="M14.0,2.8 L14.0,26.2 M2.1,14.7 L25.9,14.7" stroke="#fff" stroke-width="4.2"/></svg>
<div style="left:2064.0px;top:1986.0px;width:90.0px;height:89.0px;background:#1e1e1e;border:1px solid #2c2c2c;"></div>
<svg style="left:2070.0px;top:1991.0px" width="78" height="78" viewBox="-39 -39 78 78"><circle r="35" fill="none" stroke="#fff" stroke-width="3.5"/><path d="M-17.5,-17.5 L12.2,-17.5 L17.5,-12.2 L17.5,17.5 L-17.5,17.5Z" fill="#fff"/><rect x="-10.5" y="-17.5" width="19.2" height="10.5" fill="#1b1b1b"/><rect x="-10.5" y="3.5" width="21.0" height="14.0" fill="#1b1b1b"/><rect x="-1.8" y="8.8" width="5.2" height="8.8" fill="#fff"/></svg>
<div style="left:2156.0px;top:1986.0px;width:90.0px;height:89.0px;background:#1e1e1e;border:1px solid #2c2c2c;"></div>
<svg style="left:2162.0px;top:1991.0px" width="78" height="78" viewBox="-39 -39 78 78"><circle r="35" fill="none" stroke="#fff" stroke-width="3.5"/><path d="M0,-19.2 L21.0,-0.7 L14.7,-0.7 L14.7,15.8 L3.5,15.8 L3.5,5.2 L-3.5,5.2 L-3.5,15.8 L-14.7,15.8 L-14.7,-0.7 L-21.0,-0.7Z" fill="#fff"/></svg>
<div style="left:2250.0px;top:0.0px;width:2250.0px;height:2086.0px;background:#ffffff;border:2px solid #6aa6e4;border-top:2px solid #8cc0f0;border-right:3px solid #4a4a4a;"></div>
<div style="left:2252.0px;top:2.0px;width:2244.0px;height:61.0px;background:#cccccc;"></div>
<svg style="left:2266px;top:16px" width="34" height="32"><rect x="7" y="2" width="24" height="20" fill="#000"/><rect x="2" y="8" width="24" height="22" fill="#000" stroke="#ccc" stroke-width="2"/></svg>
<svg style="left:2330px;top:18px" width="38" height="30"><path d="M10,2 L34,2 L34,26 L10,26 M10,8 L10,2 M10,20 L10,26" fill="none" stroke="#000" stroke-width="2.2"/><path d="M26,14 L3,14 M9,8 L3,14 L9,20" fill="none" stroke="#000" stroke-width="2.2"/><path d="M17,8 L28,8 M17,20 L28,20" stroke="#000" stroke-width="2"/></svg>
<div style="left:2381.0px;top:2.0px;width:402.0px;height:61.0px;background:#f2f2f2;border-left:1px solid #999;border-right:1px solid #999;"></div>
<svg style="left:2397px;top:17px" width="34" height="30"><rect x="1.5" y="1.5" width="30" height="26" fill="none" stroke="#111" stroke-width="2.2"/><path d="M1.5,8 L31.5,8" stroke="#111" stroke-width="2.2"/></svg>
<div class="t" style="left:2447.0px;top:19.3px;font-size:28px;line-height:28px;color:#111;font-family:'Liberation Sans', sans-serif;transform:scaleX(0.9584);transform-origin:left 0;">Operations at http://loc</div>
<svg style="left:2739px;top:21px" width="22" height="22"><path d="M1,1 L21,21 M21,1 L1,21" stroke="#222" stroke-width="2.2"/></svg>
<svg style="left:2800px;top:16px" width="34" height="34"><path d="M17,1 L17,33 M1,17 L33,17" stroke="#222" stroke-width="2.4"/></svg>
<svg style="left:2864px;top:25px" width="34" height="18"><path d="M2,2 L17,16 L32,2" fill="none" stroke="#222" stroke-width="2.4"/></svg>
<div style="left:4258.0px;top:31.0px;width:22.0px;height:2.0px;background:#111;"></div>
<div style="left:4350.0px;top:22.0px;width:21.0px;height:21.0px;border:2px solid #111;"></div>
<svg style="left:4440px;top:21px" width="23" height="23"><path d="M1,1 L22,22 M22,1 L1,22" stroke="#111" stroke-width="2.2"/></svg>
<div style="left:2252.0px;top:63.0px;width:2244.0px;height:89.0px;background:#f2f2f2;border-bottom:2px solid #d6d6d6;"></div>
<svg style="left:2280px;top:94px" width="32" height="28"><path d="M30,14 L2,14 M14,2 L2,14 L14,26" fill="none" stroke="#111" stroke-width="2.4"/></svg>
<svg style="left:2367px;top:94px" width="32" height="28"><path d="M2,14 L30,14 M18,2 L30,14 L18,26" fill="none" stroke="#aaa" stroke-width="2.4"/></svg>
<svg style="left:2455px;top:92px" width="32" height="32"><path d="M9,5 A13,13 0 1 0 16,3" fill="none" stroke="#111" stroke-width="2.4"/><path d="M8,0 L9,6 L3,8" fill="none" stroke="#111" stroke-width="2.4"/></svg>
<svg style="left:2543px;top:93px" width="32" height="30"><path d="M2,15 L16,2 L30,15 M6,12 L6,28 L13,28 L13,19 L19,19 L19,28 L26,28 L26,12" fill="none" stroke="#111" stroke-width="2.4"/></svg>
<div style="left:2636.0px;top:75.0px;width:1477.0px;height:66.0px;background:#ffffff;border:2px solid #d0d0d0;"></div>
<svg style="left:2666px;top:96px" width="24" height="24"><circle cx="12" cy="12" r="10.5" fill="none" stroke="#555" stroke-width="1.6"/><path d="M12,10 L12,18 M12,6 L12,8" stroke="#555" stroke-width="2"/></svg>
<div class="t" style="left:2716.0px;top:93.6px;font-size:30px;line-height:30px;color:#111;font-family:'Liberation Sans', sans-serif;transform:scaleX(0.9206);transform-origin:left 0;">localhost</div>
<div class="t" style="left:2825.0px;top:93.6px;font-size:30px;line-height:30px;color:#8a8a8a;font-family:'Liberation Sans', sans-serif;transform:scaleX(0.8227);transform-origin:left 0;">:18700/help</div>
<svg style="left:3988px;top:92px" width="36" height="32"><path d="M2,4 L2,28 L16,28 L16,4 Z M18,4 L18,28 L32,28 L32,4Z M6,4 L6,26 M28,4 L28,26" fill="none" stroke="#111" stroke-width="2.2"/></svg>
<svg style="left:4050px;top:90px" width="40" height="36"><polygon points="19.0,2.0 23.2,13.2 35.2,13.7 25.8,21.2 29.0,32.8 19.0,26.1 9.0,32.8 12.2,21.2 2.8,13.7 14.8,13.2" fill="none" stroke="#111" stroke-width="2.2"/></svg>
<svg style="left:4170px;top:90px" width="44" height="36"><polygon points="15.0,4.0 18.7,13.9 29.3,14.4 21.0,20.9 23.8,31.1 15.0,25.3 6.2,31.1 9.0,20.9 0.7,14.4 11.3,13.9" fill="none" stroke="#111" stroke-width="2.2"/><path d="M26,14 L40,14 M28,21 L40,21 M28,28 L40,28" stroke="#111" stroke-width="2.2"/></svg>
<svg style="left:4258px;top:90px" width="40" height="36"><path d="M4,32 L8,20 L22,4 L26,8 L12,24 Z" fill="none" stroke="#111" stroke-width="2.2"/><path d="M14,30 Q20,24 24,30 T38,30" fill="none" stroke="#111" stroke-width="2"/></svg>
<svg style="left:4345px;top:90px" width="40" height="36"><path d="M2,14 L2,32 L30,32 L30,24" fill="none" stroke="#111" stroke-width="2.2"/><path d="M8,26 Q10,12 26,12 L26,4 L38,14 L26,24 L26,18 Q14,18 8,26Z" fill="none" stroke="#111" stroke-width="2.2"/></svg>
<div style="left:4435.0px;top:106.0px;width:4.0px;height:4.0px;background:#111;"></div>
<div style="left:4449.0px;top:106.0px;width:4.0px;height:4.0px;background:#111;"></div>
<div style="left:4463.0px;top:106.0px;width:4.0px;height:4.0px;background:#111;"></div>
<div style="left:2272.0px;top:155.0px;width:2209.0px;height:110.0px;background:#003366;"></div>
<div style="left:2272.0px;top:265.0px;width:2209.0px;height:12.0px;background:#336699;"></div>
<div class="t" style="left:2332.0px;top:192.3px;font-size:54px;line-height:54px;color:#ffffff;font-family:'Liberation Sans', sans-serif;transform:scaleX(0.9855);transform-origin:left 0;">Operations at http://localhost:18700/</div>
<div class="t" style="left:2312.0px;top:301.7px;font-size:24px;line-height:24px;color:#111;font-family:'Liberation Sans', sans-serif;transform:scaleX(1.0594);transform-origin:left 0;">This page describes the service operations at this endpoint.</div>
<div style="left:2312.0px;top:349.0px;width:400.0px;height:31.0px;background:#cccc99;"></div>
<div style="left:2716.0px;top:349.0px;width:99.0px;height:31.0px;background:#cccc99;"></div>
<div style="left:2819.0px;top:349.0px;width:1659.0px;height:31.0px;background:#cccc99;"></div>
<div class="t" style="left:2496.0px;top:353.5px;font-size:23px;line-height:23px;color:#111;font-family:'Liberation Sans', sans-serif;font-weight:bold;transform:scaleX(1.1268);transform-origin:center 0;">Uri</div>
<div class="t" style="left:2724.1px;top:353.5px;font-size:23px;line-height:23px;color:#111;font-family:'Liberation Sans', sans-serif;font-weight:bold;transform:scaleX(1.1130);transform-origin:center 0;">Method</div>
<div class="t" style="left:3584.7px;top:353.5px;font-size:23px;line-height:23px;color:#111;font-family:'Liberation Sans', sans-serif;font-weight:bold;transform:scaleX(1.1223);transform-origin:center 0;">Description</div>
<div style="left:2312.0px;top:384.0px;width:400.0px;height:31.0px;background:#e5e5cc;"></div>
<div style="left:2716.0px;top:384.0px;width:99.0px;height:31.0px;background:#e5e5cc;"></div>
<div style="left:2819.0px;top:384.0px;width:1659.0px;height:31.0px;background:#e5e5cc;"></div>
<div class="t" style="left:2314.0px;top:389.0px;font-size:23px;line-height:23px;color:#111;font-family:'Liberation Sans', sans-serif;transform:scaleX(1.0681);transform-origin:left 0;">SKSS_CanFocus</div>
<div class="t" style="left:2719.0px;top:389.0px;font-size:23px;line-height:23px;color:#6f9fd8;font-family:'Liberation Sans', sans-serif;font-weight:bold;transform:scaleX(1.0258);transform-origin:left 0;text-decoration:underline;">GET</div>
<div class="t" style="left:2821.0px;top:389.0px;font-size:23px;line-height:23px;color:#111;font-family:'Liberation Sans', sans-serif;transform:scaleX(1.1118);transform-origin:left 0;">Service at http://localhost:18700/SKSS_CanFocus</div>
<div style="left:2312.0px;top:419.2px;width:400.0px;height:31.0px;background:#e5e5cc;"></div>
<div style="left:2716.0px;top:419.2px;width:99.0px;height:31.0px;background:#e5e5cc;"></div>
<div style="left:2819.0px;top:419.2px;width:1659.0px;height:31.0px;background:#e5e5cc;"></div>
<div class="t" style="left:2314.0px;top:424.2px;font-size:23px;line-height:23px;color:#111;font-family:'Liberation Sans', sans-serif;transform:scaleX(1.0681);transform-origin:left 0;">SKSS_CanGuide</div>
<div class="t" style="left:2719.0px;top:424.2px;font-size:23px;line-height:23px;color:#2f5d9a;font-family:'Liberation Sans', sans-serif;font-weight:bold;transform:scaleX(1.0258);transform-origin:left 0;text-decoration:underline;">GET</div>
<div class="t" style="left:2821.0px;top:424.2px;font-size:23px;line-height:23px;color:#111;font-family:'Liberation Sans', sans-serif;transform:scaleX(1.1118);transform-origin:left 0;">Service at http://localhost:18700/SKSS_CanGuide</div>
<div style="left:2312.0px;top:454.4px;width:400.0px;height:31.0px;background:#e5e5cc;"></div>
<div style="left:2716.0px;top:454.4px;width:99.0px;height:31.0px;background:#e5e5cc;"></div>
<div style="left:2819.0px;top:454.4px;width:1659.0px;height:31.0px;background:#e5e5cc;"></div>
<div class="t" style="left:2314.0px;top:459.4px;font-size:23px;line-height:23px;color:#111;font-family:'Liberation Sans', sans-serif;transform:scaleX(1.0681);transform-origin:left 0;">SKSS_ConnectCamera</div>
<div class="t" style="left:2719.0px;top:459.4px;font-size:23px;line-height:23px;color:#2f5d9a;font-family:'Liberation Sans', sans-serif;font-weight:bold;transform:scaleX(1.0258);transform-origin:left 0;text-decoration:underline;">GET</div>
<div class="t" style="left:2821.0px;top:459.4px;font-size:23px;line-height:23px;color:#111;font-family:'Liberation Sans', sans-serif;transform:scaleX(1.1118);transform-origin:left 0;">Service at http://localhost:18700/SKSS_ConnectCamera</div>
<div style="left:2312.0px;top:489.6px;width:400.0px;height:31.0px;background:#e5e5cc;"></div>
<div style="left:2716.0px;top:489.6px;width:99.0px;height:31.0px;background:#e5e5cc;"></div>
<div style="left:2819.0px;top:489.6px;width:1659.0px;height:31.0px;background:#e5e5cc;"></div>
<div class="t" style="left:2314.0px;top:494.6px;font-size:23px;line-height:23px;color:#111;font-family:'Liberation Sans', sans-serif;transform:scaleX(1.0681);transform-origin:left 0;">SKSS_ConnectFocuser</div>
<div class="t" style="left:2719.0px;top:494.6px;font-size:23px;line-height:23px;color:#2f5d9a;font-family:'Liberation Sans', sans-serif;font-weight:bold;transform:scaleX(1.0258);transform-origin:left 0;text-decoration:underline;">GET</div>
<div class="t" style="left:2821.0px;top:494.6px;font-size:23px;line-height:23px;color:#111;font-family:'Liberation Sans', sans-serif;transform:scaleX(1.1118);transform-origin:left 0;">Service at http://localhost:18700/SKSS_ConnectFocuser</div>
<div style="left:2312.0px;top:524.8px;width:400.0px;height:31.0px;background:#e5e5cc;"></div>
<div style="left:2716.0px;top:524.8px;width:99.0px;height:31.0px;background:#e5e5cc;"></div>
<div style="left:2819.0px;top:524.8px;width:1659.0px;height:31.0px;background:#e5e5cc;"></div>
<div class="t" style="left:2314.0px;top:529.8px;font-size:23px;line-height:23px;color:#111;font-family:'Liberation Sans', sans-serif;transform:scaleX(1.0681);transform-origin:left 0;">SKSS_DisconnectCamera</div>
<div class="t" style="left:2719.0px;top:529.8px;font-size:23px;line-height:23px;color:#2f5d9a;font-family:'Liberation Sans', sans-serif;font-weight:bold;transform:scaleX(1.0258);transform-origin:left 0;text-decoration:underline;">GET</div>
<div class="t" style="left:2821.0px;top:529.8px;font-size:23px;line-height:23px;color:#111;font-family:'Liberation Sans', sans-serif;transform:scaleX(1.1118);transform-origin:left 0;">Service at http://localhost:18700/SKSS_DisconnectCamera</div>
<div style="left:2312.0px;top:560.0px;width:400.0px;height:31.0px;background:#e5e5cc;"></div>
<div style="left:2716.0px;top:560.0px;width:99.0px;height:31.0px;background:#e5e5cc;"></div>
<div style="left:2819.0px;top:560.0px;width:1659.0px;height:31.0px;background:#e5e5cc;"></div>
<div class="t" style="left:2314.0px;top:565.0px;font-size:23px;line-height:23px;color:#111;font-family:'Liberation Sans', sans-serif;transform:scaleX(1.0681);transform-origin:left 0;">SKSS_DisconnectFocuser</div>
<div class="t" style="left:2719.0px;top:565.0px;font-size:23px;line-height:23px;color:#2f5d9a;font-family:'Liberation Sans', sans-serif;font-weight:bold;transform:scaleX(1.0258);transform-origin:left 0;text-decoration:underline;">GET</div>
<div class="t" style="left:2821.0px;top:565.0px;font-size:23px;line-height:23px;color:#111;font-family:'Liberation Sans', sans-serif;transform:scaleX(1.1118);transform-origin:left 0;">Service at http://localhost:18700/SKSS_DisconnectFocuser</div>
<div style="left:2312.0px;top:595.2px;width:400.0px;height:31.0px;background:#e5e5cc;"></div>
<div style="left:2716.0px;top:595.2px;width:99.0px;height:31.0px;background:#e5e5cc;"></div>
<div style="left:2819.0px;top:595.2px;width:1659.0px;height:31.0px;background:#e5e5cc;"></div>
<div class="t" style="left:2314.0px;top:600.2px;font-size:23px;line-height:23px;color:#111;font-family:'Liberation Sans', sans-serif;transform:scaleX(1.0681);transform-origin:left 0;">SKSS_IsAbsoluteFocuser</div>
<div class="t" style="left:2719.0px;top:600.2px;font-size:23px;line-height:23px;color:#2f5d9a;font-family:'Liberation Sans', sans-serif;font-weight:bold;transform:scaleX(1.0258);transform-origin:left 0;text-decoration:underline;">GET</div>
<div class="t" style="left:2821.0px;top:600.2px;font-size:23px;line-height:23px;color:#111;font-family:'Liberation Sans', sans-serif;transform:scaleX(1.1118);transform-origin:left 0;">Service at http://localhost:18700/SKSS_IsAbsoluteFocuser</div>
<div style="left:2312.0px;top:630.4px;width:400.0px;height:31.0px;background:#e5e5cc;"></div>
<div style="left:2716.0px;top:630.4px;width:99.0px;height:31.0px;background:#e5e5cc;"></div>
<div style="left:2819.0px;top:630.4px;width:1659.0px;height:31.0px;background:#e5e5cc;"></div>
<div class="t" style="left:2314.0px;top:635.4px;font-size:23px;line-height:23px;color:#111;font-family:'Liberation Sans', sans-serif;transform:scaleX(1.0681);transform-origin:left 0;">SKSS_IsRelativeFocuser</div>
<div class="t" style="left:2719.0px;top:635.4px;font-size:23px;line-height:23px;color:#2f5d9a;font-family:'Liberation Sans', sans-serif;font-weight:bold;transform:scaleX(1.0258);transform-origin:left 0;text-decoration:underline;">GET</div>
<div class="t" style="left:2821.0px;top:635.4px;font-size:23px;line-height:23px;color:#111;font-family:'Liberation Sans', sans-serif;transform:scaleX(1.1118);transform-origin:left 0;">Service at http://localhost:18700/SKSS_IsRelativeFocuser</div>
<div style="left:2312.0px;top:665.6px;width:400.0px;height:31.0px;background:#e5e5cc;"></div>
<div style="left:2716.0px;top:665.6px;width:99.0px;height:31.0px;background:#e5e5cc;"></div>
<div style="left:2819.0px;top:665.6px;width:1659.0px;height:31.0px;background:#e5e5cc;"></div>
<div class="t" style="left:2314.0px;top:670.6px;font-size:23px;line-height:23px;color:#111;font-family:'Liberation Sans', sans-serif;transform:scaleX(1.0681);transform-origin:left 0;">SKSS_MoveFocuserInward</div>
<div class="t" style="left:2719.0px;top:670.6px;font-size:23px;line-height:23px;color:#2f5d9a;font-family:'Liberation Sans', sans-serif;font-weight:bold;transform:scaleX(1.0258);transform-origin:left 0;text-decoration:underline;">GET</div>
<div class="t" style="left:2821.0px;top:670.6px;font-size:23px;line-height:23px;color:#111;font-family:'Liberation Sans', sans-serif;transform:scaleX(1.1118);transform-origin:left 0;">Service at http://localhost:18700/SKSS_MoveFocuserInward?steps={STEPS}</div>
<div style="left:2312.0px;top:700.8px;width:400.0px;height:31.0px;background:#e5e5cc;"></div>
<div style="left:2716.0px;top:700.8px;width:99.0px;height:31.0px;background:#e5e5cc;"></div>
<div style="left:2819.0px;top:700.8px;width:1659.0px;height:31.0px;background:#e5e5cc;"></div>
<div class="t" style="left:2314.0px;top:705.8px;font-size:23px;line-height:23px;color:#111;font-family:'Liberation Sans', sans-serif;transform:scaleX(1.0681);transform-origin:left 0;">SKSS_MoveFocuserOutward</div>
<div class="t" style="left:2719.0px;top:705.8px;font-size:23px;line-height:23px;color:#2f5d9a;font-family:'Liberation Sans', sans-serif;font-weight:bold;transform:scaleX(1.0258);transform-origin:left 0;text-decoration:underline;">GET</div>
<div class="t" style="left:2821.0px;top:705.8px;font-size:23px;line-height:23px;color:#111;font-family:'Liberation Sans', sans-serif;transform:scaleX(1.1118);transform-origin:left 0;">Service at http://localhost:18700/SKSS_MoveFocuserOutward?steps={STEPS}</div>
<div style="left:2312.0px;top:736.0px;width:400.0px;height:31.0px;background:#e5e5cc;"></div>
<div style="left:2716.0px;top:736.0px;width:99.0px;height:31.0px;background:#e5e5cc;"></div>
<div style="left:2819.0px;top:736.0px;width:1659.0px;height:31.0px;background:#e5e5cc;"></div>
<div class="t" style="left:2314.0px;top:741.0px;font-size:23px;line-height:23px;color:#111;font-family:'Liberation Sans', sans-serif;transform:scaleX(1.0681);transform-origin:left 0;">SKSS_MoveFocuserToPosition</div>
<div class="t" style="left:2719.0px;top:741.0px;font-size:23px;line-height:23px;color:#2f5d9a;font-family:'Liberation Sans', sans-serif;font-weight:bold;transform:scaleX(1.0258);transform-origin:left 0;text-decoration:underline;">GET</div>
<div class="t" style="left:2821.0px;top:741.0px;font-size:23px;line-height:23px;color:#111;font-family:'Liberation Sans', sans-serif;transform:scaleX(1.1118);transform-origin:left 0;">Service at http://localhost:18700/SKSS_MoveFocuserToPosition?steps={STEPS}</div>
<div style="left:2312.0px;top:771.2px;width:400.0px;height:31.0px;background:#e5e5cc;"></div>
<div style="left:2716.0px;top:771.2px;width:99.0px;height:31.0px;background:#e5e5cc;"></div>
<div style="left:2819.0px;top:771.2px;width:1659.0px;height:31.0px;background:#e5e5cc;"></div>
<div class="t" style="left:2314.0px;top:776.2px;font-size:23px;line-height:23px;color:#111;font-family:'Liberation Sans', sans-serif;transform:scaleX(1.0681);transform-origin:left 0;">SKSS_MoveGuiderMinusX</div>
<div class="t" style="left:2719.0px;top:776.2px;font-size:23px;line-height:23px;color:#2f5d9a;font-family:'Liberation Sans', sans-serif;font-weight:bold;transform:scaleX(1.0258);transform-origin:left 0;text-decoration:underline;">GET</div>
<div class="t" style="left:2821.0px;top:776.2px;font-size:23px;line-height:23px;color:#111;font-family:'Liberation Sans', sans-serif;transform:scaleX(1.1118);transform-origin:left 0;">Service at http://localhost:18700/SKSS_MoveGuiderMinusX?duration={DURATION}&amp;calibrated={CALIBRATED}</div>
<div style="left:2312.0px;top:806.4px;width:400.0px;height:31.0px;background:#e5e5cc;"></div>
<div style="left:2716.0px;top:806.4px;width:99.0px;height:31.0px;background:#e5e5cc;"></div>
<div style="left:2819.0px;top:806.4px;width:1659.0px;height:31.0px;background:#e5e5cc;"></div>
<div class="t" style="left:2314.0px;top:811.4px;font-size:23px;line-height:23px;color:#111;font-family:'Liberation Sans', sans-serif;transform:scaleX(1.0681);transform-origin:left 0;">SKSS_MoveGuiderMinusY</div>
<div class="t" style="left:2719.0px;top:811.4px;font-size:23px;line-height:23px;color:#2f5d9a;font-family:'Liberation Sans', sans-serif;font-weight:bold;transform:scaleX(1.0258);transform-origin:left 0;text-decoration:underline;">GET</div>
<div class="t" style="left:2821.0px;top:811.4px;font-size:23px;line-height:23px;color:#111;font-family:'Liberation Sans', sans-serif;transform:scaleX(1.1118);transform-origin:left 0;">Service at http://localhost:18700/SKSS_MoveGuiderMinusY?duration={DURATION}&amp;calibrated={CALIBRATED}</div>
<div style="left:2312.0px;top:841.6px;width:400.0px;height:31.0px;background:#e5e5cc;"></div>
<div style="left:2716.0px;top:841.6px;width:99.0px;height:31.0px;background:#e5e5cc;"></div>
<div style="left:2819.0px;top:841.6px;width:1659.0px;height:31.0px;background:#e5e5cc;"></div>
<div class="t" style="left:2314.0px;top:846.6px;font-size:23px;line-height:23px;color:#111;font-family:'Liberation Sans', sans-serif;transform:scaleX(1.0681);transform-origin:left 0;">SKSS_MoveGuiderPlusX</div>
<div class="t" style="left:2719.0px;top:846.6px;font-size:23px;line-height:23px;color:#2f5d9a;font-family:'Liberation Sans', sans-serif;font-weight:bold;transform:scaleX(1.0258);transform-origin:left 0;text-decoration:underline;">GET</div>
<div class="t" style="left:2821.0px;top:846.6px;font-size:23px;line-height:23px;color:#111;font-family:'Liberation Sans', sans-serif;transform:scaleX(1.1118);transform-origin:left 0;">Service at http://localhost:18700/SKSS_MoveGuiderPlusX?duration={DURATION}&amp;calibrated={CALIBRATED}</div>
<div style="left:2312.0px;top:876.8px;width:400.0px;height:31.0px;background:#e5e5cc;"></div>
<div style="left:2716.0px;top:876.8px;width:99.0px;height:31.0px;background:#e5e5cc;"></div>
<div style="left:2819.0px;top:876.8px;width:1659.0px;height:31.0px;background:#e5e5cc;"></div>
<div class="t" style="left:2314.0px;top:881.8px;font-size:23px;line-height:23px;color:#111;font-family:'Liberation Sans', sans-serif;transform:scaleX(1.0681);transform-origin:left 0;">SKSS_MoveGuiderPlusY</div>
<div class="t" style="left:2719.0px;top:881.8px;font-size:23px;line-height:23px;color:#2f5d9a;font-family:'Liberation Sans', sans-serif;font-weight:bold;transform:scaleX(1.0258);transform-origin:left 0;text-decoration:underline;">GET</div>
<div class="t" style="left:2821.0px;top:881.8px;font-size:23px;line-height:23px;color:#111;font-family:'Liberation Sans', sans-serif;transform:scaleX(1.1118);transform-origin:left 0;">Service at http://localhost:18700/SKSS_MoveGuiderPlusY?duration={DURATION}&amp;calibrated={CALIBRATED}</div>
<div style="left:2312.0px;top:912.0px;width:400.0px;height:31.0px;background:#e5e5cc;"></div>
<div style="left:2716.0px;top:912.0px;width:99.0px;height:31.0px;background:#e5e5cc;"></div>
<div style="left:2819.0px;top:912.0px;width:1659.0px;height:31.0px;background:#e5e5cc;"></div>
<div class="t" style="left:2314.0px;top:917.0px;font-size:23px;line-height:23px;color:#111;font-family:'Liberation Sans', sans-serif;transform:scaleX(1.0681);transform-origin:left 0;">SKSS_PauseFocusing</div>
<div class="t" style="left:2719.0px;top:917.0px;font-size:23px;line-height:23px;color:#2f5d9a;font-family:'Liberation Sans', sans-serif;font-weight:bold;transform:scaleX(1.0258);transform-origin:left 0;text-decoration:underline;">GET</div>
<div class="t" style="left:2821.0px;top:917.0px;font-size:23px;line-height:23px;color:#111;font-family:'Liberation Sans', sans-serif;transform:scaleX(1.1118);transform-origin:left 0;">Service at http://localhost:18700/SKSS_PauseFocusing</div>
<div style="left:2312.0px;top:947.2px;width:400.0px;height:31.0px;background:#e5e5cc;"></div>
<div style="left:2716.0px;top:947.2px;width:99.0px;height:31.0px;background:#e5e5cc;"></div>
<div style="left:2819.0px;top:947.2px;width:1659.0px;height:31.0px;background:#e5e5cc;"></div>
<div class="t" style="left:2314.0px;top:952.2px;font-size:23px;line-height:23px;color:#111;font-family:'Liberation Sans', sans-serif;transform:scaleX(1.0681);transform-origin:left 0;">SKSS_PauseGuiding</div>
<div class="t" style="left:2719.0px;top:952.2px;font-size:23px;line-height:23px;color:#2f5d9a;font-family:'Liberation Sans', sans-serif;font-weight:bold;transform:scaleX(1.0258);transform-origin:left 0;text-decoration:underline;">GET</div>
<div class="t" style="left:2821.0px;top:952.2px;font-size:23px;line-height:23px;color:#111;font-family:'Liberation Sans', sans-serif;transform:scaleX(1.1118);transform-origin:left 0;">Service at http://localhost:18700/SKSS_PauseGuiding</div>
<div style="left:2312.0px;top:982.4px;width:400.0px;height:31.0px;background:#e5e5cc;"></div>
<div style="left:2716.0px;top:982.4px;width:99.0px;height:31.0px;background:#e5e5cc;"></div>
<div style="left:2819.0px;top:982.4px;width:1659.0px;height:31.0px;background:#e5e5cc;"></div>
<div class="t" style="left:2314.0px;top:987.4px;font-size:23px;line-height:23px;color:#111;font-family:'Liberation Sans', sans-serif;transform:scaleX(1.0681);transform-origin:left 0;">SKSS_RegisterCallbackURI</div>
<div class="t" style="left:2719.0px;top:987.4px;font-size:23px;line-height:23px;color:#6f9fd8;font-family:'Liberation Sans', sans-serif;font-weight:bold;transform:scaleX(1.0258);transform-origin:left 0;text-decoration:underline;">GET</div>
<div class="t" style="left:2821.0px;top:987.4px;font-size:23px;line-height:23px;color:#111;font-family:'Liberation Sans', sans-serif;transform:scaleX(1.1118);transform-origin:left 0;">Service at http://localhost:18700/SKSS_RegisterCallbackURI?uri={URI}</div>
<div style="left:2312.0px;top:1017.6px;width:400.0px;height:31.0px;background:#e5e5cc;"></div>
<div style="left:2716.0px;top:1017.6px;width:99.0px;height:31.0px;background:#e5e5cc;"></div>
<div style="left:2819.0px;top:1017.6px;width:1659.0px;height:31.0px;background:#e5e5cc;"></div>
<div class="t" style="left:2314.0px;top:1022.6px;font-size:23px;line-height:23px;color:#111;font-family:'Liberation Sans', sans-serif;transform:scaleX(1.0681);transform-origin:left 0;">SKSS_ResetFocuserPosition</div>
<div class="t" style="left:2719.0px;top:1022.6px;font-size:23px;line-height:23px;color:#2f5d9a;font-family:'Liberation Sans', sans-serif;font-weight:bold;transform:scaleX(1.0258);transform-origin:left 0;text-decoration:underline;">GET</div>
<div class="t" style="left:2821.0px;top:1022.6px;font-size:23px;line-height:23px;color:#111;font-family:'Liberation Sans', sans-serif;transform:scaleX(1.1118);transform-origin:left 0;">Service at http://localhost:18700/SKSS_ResetFocuserPosition</div>
<div style="left:2312.0px;top:1052.8px;width:400.0px;height:31.0px;background:#e5e5cc;"></div>
<div style="left:2716.0px;top:1052.8px;width:99.0px;height:31.0px;background:#e5e5cc;"></div>
<div style="left:2819.0px;top:1052.8px;width:1659.0px;height:31.0px;background:#e5e5cc;"></div>
<div class="t" style="left:2314.0px;top:1057.8px;font-size:23px;line-height:23px;color:#111;font-family:'Liberation Sans', sans-serif;transform:scaleX(1.0681);transform-origin:left 0;">SKSS_ResumeMoveFocuser</div>
<div class="t" style="left:2719.0px;top:1057.8px;font-size:23px;line-height:23px;color:#2f5d9a;font-family:'Liberation Sans', sans-serif;font-weight:bold;transform:scaleX(1.0258);transform-origin:left 0;text-decoration:underline;">GET</div>
<div class="t" style="left:2821.0px;top:1057.8px;font-size:23px;line-height:23px;color:#111;font-family:'Liberation Sans', sans-serif;transform:scaleX(1.1118);transform-origin:left 0;">Service at http://localhost:18700/SKSS_ResumeMoveFocuser</div>
<div style="left:2312.0px;top:1088.0px;width:400.0px;height:31.0px;background:#e5e5cc;"></div>
<div style="left:2716.0px;top:1088.0px;width:99.0px;height:31.0px;background:#e5e5cc;"></div>
<div style="left:2819.0px;top:1088.0px;width:1659.0px;height:31.0px;background:#e5e5cc;"></div>
<div class="t" style="left:2314.0px;top:1093.0px;font-size:23px;line-height:23px;color:#111;font-family:'Liberation Sans', sans-serif;transform:scaleX(1.0681);transform-origin:left 0;">SKSS_ResumeMoveGuider</div>
<div class="t" style="left:2719.0px;top:1093.0px;font-size:23px;line-height:23px;color:#2f5d9a;font-family:'Liberation Sans', sans-serif;font-weight:bold;transform:scaleX(1.0258);transform-origin:left 0;text-decoration:underline;">GET</div>
<div class="t" style="left:2821.0px;top:1093.0px;font-size:23px;line-height:23px;color:#111;font-family:'Liberation Sans', sans-serif;transform:scaleX(1.1118);transform-origin:left 0;">Service at http://localhost:18700/SKSS_ResumeMoveGuider</div>
<div style="left:2312.0px;top:1123.2px;width:400.0px;height:31.0px;background:#e5e5cc;"></div>
<div style="left:2716.0px;top:1123.2px;width:99.0px;height:31.0px;background:#e5e5cc;"></div>
<div style="left:2819.0px;top:1123.2px;width:1659.0px;height:31.0px;background:#e5e5cc;"></div>
<div class="t" style="left:2314.0px;top:1128.2px;font-size:23px;line-height:23px;color:#111;font-family:'Liberation Sans', sans-serif;transform:scaleX(1.0681);transform-origin:left 0;">SKSS_SetGuiderReferenceFrame</div>
<div class="t" style="left:2719.0px;top:1128.2px;font-size:23px;line-height:23px;color:#2f5d9a;font-family:'Liberation Sans', sans-serif;font-weight:bold;transform:scaleX(1.0258);transform-origin:left 0;text-decoration:underline;">GET</div>
<div class="t" style="left:2821.0px;top:1128.2px;font-size:23px;line-height:23px;color:#111;font-family:'Liberation Sans', sans-serif;transform:scaleX(1.1118);transform-origin:left 0;">Service at http://localhost:18700/SKSS_SetGuiderReferenceFrame</div>
<div style="left:2312.0px;top:1158.4px;width:400.0px;height:31.0px;background:#e5e5cc;"></div>
<div style="left:2716.0px;top:1158.4px;width:99.0px;height:31.0px;background:#e5e5cc;"></div>
<div style="left:2819.0px;top:1158.4px;width:1659.0px;height:31.0px;background:#e5e5cc;"></div>
<div class="t" style="left:2314.0px;top:1163.4px;font-size:23px;line-height:23px;color:#111;font-family:'Liberation Sans', sans-serif;transform:scaleX(1.0681);transform-origin:left 0;">SKSS_Shutdown</div>
<div class="t" style="left:2719.0px;top:1163.4px;font-size:23px;line-height:23px;color:#2f5d9a;font-family:'Liberation Sans', sans-serif;font-weight:bold;transform:scaleX(1.0258);transform-origin:left 0;text-decoration:underline;">GET</div>
<div class="t" style="left:2821.0px;top:1163.4px;font-size:23px;line-height:23px;color:#111;font-family:'Liberation Sans', sans-serif;transform:scaleX(1.1118);transform-origin:left 0;">Service at http://localhost:18700/SKSS_Shutdown</div>
<div style="left:2312.0px;top:1193.6px;width:400.0px;height:57.5px;background:#e5e5cc;"></div>
<div style="left:2716.0px;top:1193.6px;width:99.0px;height:57.5px;background:#e5e5cc;"></div>
<div style="left:2819.0px;top:1193.6px;width:1659.0px;height:57.5px;background:#e5e5cc;"></div>
<div class="t" style="left:2314.0px;top:1212.1px;font-size:23px;line-height:23px;color:#111;font-family:'Liberation Sans', sans-serif;transform:scaleX(1.0681);transform-origin:left 0;">SKSS_StartFocuserCalibration</div>
<div class="t" style="left:2719.0px;top:1212.1px;font-size:23px;line-height:23px;color:#2f5d9a;font-family:'Liberation Sans', sans-serif;font-weight:bold;transform:scaleX(1.0258);transform-origin:left 0;text-decoration:underline;">GET</div>
<div class="t" style="left:2821.0px;top:1198.1px;font-size:23px;line-height:23px;color:#111;font-family:'Liberation Sans', sans-serif;transform:scaleX(1.1072);transform-origin:left 0;">Service at http://localhost:18700/SKSS_StartFocuserCalibration?autoRestoreFocuserPosition=</div>
<div class="t" style="left:3890.5px;top:1198.1px;font-size:23px;line-height:23px;color:#111;font-family:'Liberation Sans', sans-serif;transform:scaleX(1.0751);transform-origin:left 0;">{AUTORESTOREFOCUSERPOSITION}</div>
<div class="t" style="left:2821.0px;top:1225.1px;font-size:23px;line-height:23px;color:#111;font-family:'Liberation Sans', sans-serif;transform:scaleX(1.0746);transform-origin:left 0;">&amp;useInitialARNDAnyway={USEINITIALARNDANYWAY}&amp;allowAbnormalCalibration={ALLOWABNORMALCALIBRATION}</div>
<div style="left:2312.0px;top:1255.6px;width:400.0px;height:31.0px;background:#e5e5cc;"></div>
<div style="left:2716.0px;top:1255.6px;width:99.0px;height:31.0px;background:#e5e5cc;"></div>
<div style="left:2819.0px;top:1255.6px;width:1659.0px;height:31.0px;background:#e5e5cc;"></div>
<div class="t" style="left:2314.0px;top:1260.6px;font-size:23px;line-height:23px;color:#111;font-family:'Liberation Sans', sans-serif;transform:scaleX(1.0681);transform-origin:left 0;">SKSS_StartFocusing</div>
<div class="t" style="left:2719.0px;top:1260.6px;font-size:23px;line-height:23px;color:#2f5d9a;font-family:'Liberation Sans', sans-serif;font-weight:bold;transform:scaleX(1.0258);transform-origin:left 0;text-decoration:underline;">GET</div>
<div class="t" style="left:2821.0px;top:1260.6px;font-size:23px;line-height:23px;color:#111;font-family:'Liberation Sans', sans-serif;transform:scaleX(1.1118);transform-origin:left 0;">Service at http://localhost:18700/SKSS_StartFocusing</div>
<div style="left:2312.0px;top:1290.8px;width:400.0px;height:31.0px;background:#e5e5cc;"></div>
<div style="left:2716.0px;top:1290.8px;width:99.0px;height:31.0px;background:#e5e5cc;"></div>
<div style="left:2819.0px;top:1290.8px;width:1659.0px;height:31.0px;background:#e5e5cc;"></div>
<div class="t" style="left:2314.0px;top:1295.8px;font-size:23px;line-height:23px;color:#111;font-family:'Liberation Sans', sans-serif;transform:scaleX(1.0681);transform-origin:left 0;">SKSS_StartGuiderCalibration</div>
<div class="t" style="left:2719.0px;top:1295.8px;font-size:23px;line-height:23px;color:#6f9fd8;font-family:'Liberation Sans', sans-serif;font-weight:bold;transform:scaleX(1.0258);transform-origin:left 0;text-decoration:underline;">GET</div>
<div class="t" style="left:2821.0px;top:1295.8px;font-size:23px;line-height:23px;color:#111;font-family:'Liberation Sans', sans-serif;transform:scaleX(1.1160);transform-origin:left 0;">Service at http://localhost:18700/SKSS_StartGuiderCalibration?useCalibrationAngleAnyway=</div>
<div class="t" style="left:3879.0px;top:1295.8px;font-size:23px;line-height:23px;color:#111;font-family:'Liberation Sans', sans-serif;transform:scaleX(1.0751);transform-origin:left 0;">{USECALIBRATIONANGLEANYWAY}</div>
<div style="left:2312.0px;top:1326.0px;width:400.0px;height:31.0px;background:#e5e5cc;"></div>
<div style="left:2716.0px;top:1326.0px;width:99.0px;height:31.0px;background:#e5e5cc;"></div>
<div style="left:2819.0px;top:1326.0px;width:1659.0px;height:31.0px;background:#e5e5cc;"></div>
<div class="t" style="left:2314.0px;top:1331.0px;font-size:23px;line-height:23px;color:#111;font-family:'Liberation Sans', sans-serif;transform:scaleX(1.0681);transform-origin:left 0;">SKSS_StartGuiderCameraExposure</div>
<div class="t" style="left:2719.0px;top:1331.0px;font-size:23px;line-height:23px;color:#2f5d9a;font-family:'Liberation Sans', sans-serif;font-weight:bold;transform:scaleX(1.0258);transform-origin:left 0;text-decoration:underline;">GET</div>
<div class="t" style="left:2821.0px;top:1331.0px;font-size:23px;line-height:23px;color:#111;font-family:'Liberation Sans', sans-serif;transform:scaleX(1.1118);transform-origin:left 0;">Service at http://localhost:18700/SKSS_StartGuiderCameraExposure?duration={DURATION}</div>
<div style="left:2312.0px;top:1361.2px;width:400.0px;height:31.0px;background:#e5e5cc;"></div>
<div style="left:2716.0px;top:1361.2px;width:99.0px;height:31.0px;background:#e5e5cc;"></div>
<div style="left:2819.0px;top:1361.2px;width:1659.0px;height:31.0px;background:#e5e5cc;"></div>
<div class="t" style="left:2314.0px;top:1366.2px;font-size:23px;line-height:23px;color:#111;font-family:'Liberation Sans', sans-serif;transform:scaleX(1.0681);transform-origin:left 0;">SKSS_StartGuiding</div>
<div class="t" style="left:2719.0px;top:1366.2px;font-size:23px;line-height:23px;color:#2f5d9a;font-family:'Liberation Sans', sans-serif;font-weight:bold;transform:scaleX(1.0258);transform-origin:left 0;text-decoration:underline;">GET</div>
<div class="t" style="left:2821.0px;top:1366.2px;font-size:23px;line-height:23px;color:#111;font-family:'Liberation Sans', sans-serif;transform:scaleX(1.1118);transform-origin:left 0;">Service at http://localhost:18700/SKSS_StartGuiding</div>
<div style="left:2312.0px;top:1396.4px;width:400.0px;height:31.0px;background:#e5e5cc;"></div>
<div style="left:2716.0px;top:1396.4px;width:99.0px;height:31.0px;background:#e5e5cc;"></div>
<div style="left:2819.0px;top:1396.4px;width:1659.0px;height:31.0px;background:#e5e5cc;"></div>
<div class="t" style="left:2314.0px;top:1401.4px;font-size:23px;line-height:23px;color:#111;font-family:'Liberation Sans', sans-serif;transform:scaleX(1.0681);transform-origin:left 0;">SKSS_StopFocusing</div>
<div class="t" style="left:2719.0px;top:1401.4px;font-size:23px;line-height:23px;color:#2f5d9a;font-family:'Liberation Sans', sans-serif;font-weight:bold;transform:scaleX(1.0258);transform-origin:left 0;text-decoration:underline;">GET</div>
<div class="t" style="left:2821.0px;top:1401.4px;font-size:23px;line-height:23px;color:#111;font-family:'Liberation Sans', sans-serif;transform:scaleX(1.1118);transform-origin:left 0;">Service at http://localhost:18700/SKSS_StopFocusing</div>
<div style="left:2312.0px;top:1431.6px;width:400.0px;height:31.0px;background:#e5e5cc;"></div>
<div style="left:2716.0px;top:1431.6px;width:99.0px;height:31.0px;background:#e5e5cc;"></div>
<div style="left:2819.0px;top:1431.6px;width:1659.0px;height:31.0px;background:#e5e5cc;"></div>
<div class="t" style="left:2314.0px;top:1436.6px;font-size:23px;line-height:23px;color:#111;font-family:'Liberation Sans', sans-serif;transform:scaleX(1.0681);transform-origin:left 0;">SKSS_StopGuiding</div>
<div class="t" style="left:2719.0px;top:1436.6px;font-size:23px;line-height:23px;color:#2f5d9a;font-family:'Liberation Sans', sans-serif;font-weight:bold;transform:scaleX(1.0258);transform-origin:left 0;text-decoration:underline;">GET</div>
<div class="t" style="left:2821.0px;top:1436.6px;font-size:23px;line-height:23px;color:#111;font-family:'Liberation Sans', sans-serif;transform:scaleX(1.1118);transform-origin:left 0;">Service at http://localhost:18700/SKSS_StopGuiding</div>
<div style="left:2312.0px;top:1466.8px;width:400.0px;height:31.0px;background:#e5e5cc;"></div>
<div style="left:2716.0px;top:1466.8px;width:99.0px;height:31.0px;background:#e5e5cc;"></div>
<div style="left:2819.0px;top:1466.8px;width:1659.0px;height:31.0px;background:#e5e5cc;"></div>
<div class="t" style="left:2314.0px;top:1471.8px;font-size:23px;line-height:23px;color:#111;font-family:'Liberation Sans', sans-serif;transform:scaleX(1.0681);transform-origin:left 0;">SKSS_SuspendMoveFocuser</div>
<div class="t" style="left:2719.0px;top:1471.8px;font-size:23px;line-height:23px;color:#2f5d9a;font-family:'Liberation Sans', sans-serif;font-weight:bold;transform:scaleX(1.0258);transform-origin:left 0;text-decoration:underline;">GET</div>
<div class="t" style="left:2821.0px;top:1471.8px;font-size:23px;line-height:23px;color:#111;font-family:'Liberation Sans', sans-serif;transform:scaleX(1.1118);transform-origin:left 0;">Service at http://localhost:18700/SKSS_SuspendMoveFocuser</div>
<div style="left:2312.0px;top:1502.0px;width:400.0px;height:31.0px;background:#e5e5cc;"></div>
<div style="left:2716.0px;top:1502.0px;width:99.0px;height:31.0px;background:#e5e5cc;"></div>
<div style="left:2819.0px;top:1502.0px;width:1659.0px;height:31.0px;background:#e5e5cc;"></div>
<div class="t" style="left:2314.0px;top:1507.0px;font-size:23px;line-height:23px;color:#111;font-family:'Liberation Sans', sans-serif;transform:scaleX(1.0681);transform-origin:left 0;">SKSS_SuspendMoveGuider</div>
<div class="t" style="left:2719.0px;top:1507.0px;font-size:23px;line-height:23px;color:#2f5d9a;font-family:'Liberation Sans', sans-serif;font-weight:bold;transform:scaleX(1.0258);transform-origin:left 0;text-decoration:underline;">GET</div>
<div class="t" style="left:2821.0px;top:1507.0px;font-size:23px;line-height:23px;color:#111;font-family:'Liberation Sans', sans-serif;transform:scaleX(1.1118);transform-origin:left 0;">Service at http://localhost:18700/SKSS_SuspendMoveGuider</div>
<div style="left:2312.0px;top:1537.2px;width:400.0px;height:31.0px;background:#e5e5cc;"></div>
<div style="left:2716.0px;top:1537.2px;width:99.0px;height:31.0px;background:#e5e5cc;"></div>
<div style="left:2819.0px;top:1537.2px;width:1659.0px;height:31.0px;background:#e5e5cc;"></div>
<div class="t" style="left:2314.0px;top:1542.2px;font-size:23px;line-height:23px;color:#111;font-family:'Liberation Sans', sans-serif;transform:scaleX(1.0681);transform-origin:left 0;">SKSS_UnregisterCallbackURI</div>
<div class="t" style="left:2719.0px;top:1542.2px;font-size:23px;line-height:23px;color:#2f5d9a;font-family:'Liberation Sans', sans-serif;font-weight:bold;transform:scaleX(1.0258);transform-origin:left 0;text-decoration:underline;">GET</div>
<div class="t" style="left:2821.0px;top:1542.2px;font-size:23px;line-height:23px;color:#111;font-family:'Liberation Sans', sans-serif;transform:scaleX(1.1118);transform-origin:left 0;">Service at http://localhost:18700/SKSS_UnregisterCallbackURI?uri={URI}</div>
<div style="left:4184.0px;top:1070.0px;width:276.0px;height:975.0px;background:#000;border:1px solid #555;"></div>
<div style="left:4184.0px;top:1070.0px;width:276.0px;height:49.0px;background:#fdfdfd;border:1px solid #ccc;"></div>
<div class="t" style="left:4190.0px;top:1083.0px;font-size:26px;line-height:26px;color:#9a9a9a;font-family:'Liberation Sans', sans-serif;transform:scaleX(0.9098);transform-origin:left 0;">Telescope Simulator</div>
<div style="left:4419.0px;top:1075.0px;width:40.0px;height:39.0px;background:#e6e6e6;"></div>
<svg style="left:4432px;top:1088px" width="14" height="14"><path d="M1,1 L13,13 M13,1 L1,13" stroke="#bbb" stroke-width="1.6"/></svg>
<svg style="left:4342px;top:1140px" width="96" height="112" viewBox="0 0 96 112"><rect x="1" y="1" width="94" height="110" fill="#0b2461" stroke="#8c7d2a" stroke-width="2"/><path d="M43,15 L19,67 M43,15 L64,72 M19,67 L77,37" stroke="#f2e600" stroke-width="2.6" fill="none"/><circle cx="43" cy="15" r="5" fill="#fff"/><circle cx="77" cy="37" r="5" fill="#fff"/><circle cx="19" cy="67" r="5" fill="#fff"/><circle cx="64" cy="72" r="5" fill="#fff"/><text x="48" y="104" text-anchor="middle" font-family="Liberation Sans" font-weight="bold" font-size="22" fill="#fff" textLength="80" lengthAdjust="spacingAndGlyphs">ASCOM</text></svg>
<div style="left:4208.0px;top:1267.0px;width:229.0px;height:40.0px;background:#3c0000;"></div>
<div class="t" style="left:4222.0px;top:1273.0px;font-size:26px;line-height:26px;color:#8b4513;font-family:'Liberation Sans', sans-serif;transform:scaleX(0.7949);transform-origin:left 0;">HOME</div>
<div class="t" style="left:4364.0px;top:1273.0px;font-size:26px;line-height:26px;color:#8b4513;font-family:'Liberation Sans', sans-serif;transform:scaleX(0.8421);transform-origin:left 0;">PARK</div>
<div class="t" style="left:4217.0px;top:1320.0px;font-size:26px;line-height:26px;color:#fff;font-family:'Liberation Sans', sans-serif;transform:scaleX(0.8179);transform-origin:left 0;">LST</div>
<div class="t" style="left:4322.8px;top:1320.0px;font-size:26px;line-height:26px;color:#ff0000;font-family:'Liberation Sans', sans-serif;transform:scaleX(0.8103);transform-origin:right 0;">13:44:08</div>
<div class="t" style="left:4217.0px;top:1360.0px;font-size:26px;line-height:26px;color:#fff;font-family:'Liberation Sans', sans-serif;transform:scaleX(0.8306);transform-origin:left 0;">RA</div>
<div class="t" style="left:4322.8px;top:1360.0px;font-size:26px;line-height:26px;color:#ff0000;font-family:'Liberation Sans', sans-serif;transform:scaleX(0.8103);transform-origin:right 0;">15:17:06</div>
<div class="t" style="left:4217.0px;top:1400.0px;font-size:26px;line-height:26px;color:#fff;font-family:'Liberation Sans', sans-serif;transform:scaleX(0.8435);transform-origin:left 0;">Dec</div>
<div class="t" style="left:4298.2px;top:1400.0px;font-size:26px;line-height:26px;color:#ff0000;font-family:'Liberation Sans', sans-serif;transform:scaleX(0.8347);transform-origin:right 0;">21° 07&#x27; 07&quot;</div>
<div class="t" style="left:4217.0px;top:1439.0px;font-size:26px;line-height:26px;color:#fff;font-family:'Liberation Sans', sans-serif;transform:scaleX(0.7580);transform-origin:left 0;">Az</div>
<div class="t" style="left:4285.7px;top:1439.0px;font-size:26px;line-height:26px;color:#ff0000;font-family:'Liberation Sans', sans-serif;transform:scaleX(0.8458);transform-origin:right 0;">134° 57&#x27; 11&quot;</div>
<div class="t" style="left:4217.0px;top:1478.0px;font-size:26px;line-height:26px;color:#fff;font-family:'Liberation Sans', sans-serif;transform:scaleX(0.7251);transform-origin:left 0;">Alt</div>
<div class="t" style="left:4298.2px;top:1478.0px;font-size:26px;line-height:26px;color:#ff0000;font-family:'Liberation Sans', sans-serif;transform:scaleX(0.8347);transform-origin:right 0;">58° 39&#x27; 38&quot;</div>
<svg style="left:4214px;top:1535px" width="26" height="66"><circle cx="12.5" cy="12.5" r="10" fill="#fff" stroke="#999" stroke-width="1.5"/><circle cx="12.5" cy="12.5" r="5" fill="#333"/><circle cx="12.5" cy="55" r="10" fill="#fff" stroke="#999" stroke-width="1.5"/></svg>
<div class="t" style="left:4251.5px;top:1535.8px;font-size:25px;line-height:25px;color:#fff;font-family:'Liberation Sans', sans-serif;transform:scaleX(0.8514);transform-origin:left 0;">Move Axis</div>
<div class="t" style="left:4251.5px;top:1578.8px;font-size:25px;line-height:25px;color:#fff;font-family:'Liberation Sans', sans-serif;transform:scaleX(0.8297);transform-origin:left 0;">Pulse Guide</div>
<div style="left:4292.5px;top:1628.5px;width:59.0px;height:56.5px;background:#e1e1e1;border:1px solid #adadad;"></div>
<div class="t" style="left:4313.3px;top:1645.1px;font-size:24px;line-height:24px;color:#111;font-family:'Liberation Sans', sans-serif;">N</div>
<div style="left:4216.5px;top:1702.5px;width:59.0px;height:56.5px;background:#e1e1e1;border:1px solid #adadad;"></div>
<div class="t" style="left:4234.7px;top:1719.1px;font-size:24px;line-height:24px;color:#111;font-family:'Liberation Sans', sans-serif;">W</div>
<div style="left:4292.5px;top:1702.5px;width:59.0px;height:56.5px;background:#e1e1e1;border:1px solid #adadad;"></div>
<svg style="left:4304px;top:1713px" width="36" height="36"><polygon points="11,2 25,2 34,11 34,25 25,34 11,34 2,25 2,11" fill="#000"/></svg>
<div style="left:4368.0px;top:1702.5px;width:61.0px;height:56.5px;background:#e1e1e1;border:1px solid #adadad;"></div>
<div class="t" style="left:4390.5px;top:1719.1px;font-size:24px;line-height:24px;color:#111;font-family:'Liberation Sans', sans-serif;">E</div>
<div style="left:4292.5px;top:1776.0px;width:59.0px;height:56.5px;background:#e1e1e1;border:1px solid #adadad;"></div>
<div class="t" style="left:4314.0px;top:1792.6px;font-size:24px;line-height:24px;color:#111;font-family:'Liberation Sans', sans-serif;">S</div>
<div style="left:4382.5px;top:1796.5px;width:30.5px;height:15.0px;background:#90ee90;border:1px solid #6a6;"></div>
<div style="left:4219.0px;top:1857.5px;width:22.5px;height:22.5px;background:#fff;border:1px solid #333;"></div>
<svg style="left:4221px;top:1860px" width="18" height="18"><path d="M2,9 L7,14 L16,3" fill="none" stroke="#222" stroke-width="2"/></svg>
<div class="t" style="left:4256.5px;top:1855.8px;font-size:25px;line-height:25px;color:#fff;font-family:'Liberation Sans', sans-serif;transform:scaleX(0.8446);transform-origin:left 0;">Track</div>
<div style="left:4340.0px;top:1848.5px;width:97.5px;height:38.0px;background:#3c0000;"></div>
<div class="t" style="left:4351.2px;top:1853.0px;font-size:26px;line-height:26px;color:#7a3510;font-family:'Liberation Sans', sans-serif;transform:scaleX(0.8007);transform-origin:center 0;">SLEW</div>
<div style="left:4216.5px;top:1909.0px;width:96.5px;height:46.0px;background:#e1e1e1;border:1px solid #adadad;"></div>
<div class="t" style="left:4239.0px;top:1919.8px;font-size:25px;line-height:25px;color:#111;font-family:'Liberation Sans', sans-serif;transform:scaleX(0.8171);transform-origin:center 0;">Park</div>
<div style="left:4330.0px;top:1909.0px;width:99.0px;height:46.0px;background:#e1e1e1;border:1px solid #adadad;"></div>
<div class="t" style="left:4346.2px;top:1919.8px;font-size:25px;line-height:25px;color:#111;font-family:'Liberation Sans', sans-serif;transform:scaleX(0.8248);transform-origin:center 0;">Home</div>
<div style="left:4216.5px;top:1972.5px;width:96.5px;height:48.5px;background:#e1e1e1;border:1px solid #adadad;"></div>
<div class="t" style="left:4232.1px;top:1984.6px;font-size:25px;line-height:25px;color:#111;font-family:'Liberation Sans', sans-serif;transform:scaleX(0.8266);transform-origin:center 0;">Setup</div>
<div style="left:4330.0px;top:1972.5px;width:99.0px;height:48.5px;background:#e1e1e1;border:1px solid #adadad;"></div>
<div class="t" style="left:4345.5px;top:1984.6px;font-size:25px;line-height:25px;color:#111;font-family:'Liberation Sans', sans-serif;transform:scaleX(0.8521);transform-origin:center 0;">Traffic</div>
<div style="left:12.0px;top:2090.0px;width:2238.0px;height:910.0px;background:#f0f0f0;"></div>
<div style="left:12.0px;top:2090.0px;width:2238.0px;height:55.0px;background:#ffffff;"></div>
<svg style="left:26px;top:2095px" width="34" height="32" viewBox="0 0 34 32"><path d="M7,1 L33,1 L27,24 L1,24Z" fill="#3ca0d8"/><path d="M4,26 L26,26 L25,31 L3,31Z" fill="#5a6a7a"/><path d="M9,6 L17,12 L8,18 M15,19 L22,19" fill="none" stroke="#fff" stroke-width="2.2"/></svg>
<div class="t" style="left:63.0px;top:2105.0px;font-size:26px;line-height:26px;color:#9a9a9a;font-family:'Liberation Sans', sans-serif;transform:scaleX(0.8761);transform-origin:left 0;">Windows PowerShell ISE</div>
<div style="left:2017.0px;top:2117.0px;width:21.0px;height:2.0px;background:#777;"></div>
<div style="left:2108.0px;top:2107.0px;width:21.0px;height:21.0px;border:2px solid #777;"></div>
<svg style="left:2200px;top:2106px" width="23" height="23"><path d="M1,1 L22,22 M22,1 L1,22" stroke="#777" stroke-width="2.2"/></svg>
<div style="left:12.0px;top:2145.0px;width:2238.0px;height:37.0px;background:linear-gradient(#f2f6fb,#dfe8f4);"></div>
<div class="t" style="left:27.0px;top:2152.0px;font-size:26px;line-height:26px;color:#111;font-family:'Liberation Sans', sans-serif;transform:scaleX(0.8354);transform-origin:left 0;">File</div>
<div class="t" style="left:91.0px;top:2152.0px;font-size:26px;line-height:26px;color:#111;font-family:'Liberation Sans', sans-serif;transform:scaleX(0.8928);transform-origin:left 0;">Edit</div>
<div class="t" style="left:159.0px;top:2152.0px;font-size:26px;line-height:26px;color:#111;font-family:'Liberation Sans', sans-serif;transform:scaleX(0.8947);transform-origin:left 0;">View</div>
<div class="t" style="left:237.0px;top:2152.0px;font-size:26px;line-height:26px;color:#111;font-family:'Liberation Sans', sans-serif;transform:scaleX(0.8897);transform-origin:left 0;">Tools</div>
<div class="t" style="left:320.0px;top:2152.0px;font-size:26px;line-height:26px;color:#111;font-family:'Liberation Sans', sans-serif;transform:scaleX(0.9137);transform-origin:left 0;">Debug</div>
<div class="t" style="left:419.0px;top:2152.0px;font-size:26px;line-height:26px;color:#111;font-family:'Liberation Sans', sans-serif;transform:scaleX(0.9397);transform-origin:left 0;">Add-ons</div>
<div class="t" style="left:538.0px;top:2152.0px;font-size:26px;line-height:26px;color:#111;font-family:'Liberation Sans', sans-serif;transform:scaleX(0.9164);transform-origin:left 0;">Help</div>
<div style="left:12.0px;top:2182.0px;width:2238.0px;height:53.0px;background:linear-gradient(#e9eff8,#dbe5f3);"></div>
<svg style="left:32.0px;top:2189.5px" width="36" height="36" viewBox="0 0 36 36"><path d="M8,6 L22,6 L29,13 L29,32 L8,32Z" fill="#fff" stroke="#777" stroke-width="1.5"/><path d="M22,6 L22,13 L29,13" fill="#eee" stroke="#777" stroke-width="1.2"/><circle cx="8" cy="6" r="5" fill="#ffb400"/></svg>
<svg style="left:97.0px;top:2189.5px" width="36" height="36" viewBox="0 0 36 36"><path d="M3,10 L13,10 L16,13 L31,13 L31,29 L3,29Z" fill="#e8b030" stroke="#b07a10" stroke-width="1.2"/><path d="M6,17 L34,17 L30,29 L3,29Z" fill="#f8d060" stroke="#b07a10" stroke-width="1.2"/></svg>
<svg style="left:160.0px;top:2189.5px" width="36" height="36" viewBox="0 0 36 36"><rect x="4" y="5" width="28" height="28" fill="#2a6cc8" stroke="#1a4a90" stroke-width="1.2"/><rect x="9" y="6" width="18" height="11" fill="#f0f4fa"/><rect x="10" y="22" width="16" height="10" fill="#143a78"/></svg>
<svg style="left:223.0px;top:2189.5px" width="36" height="36" viewBox="0 0 36 36"><path d="M14,4 L20,24 M24,4 L16,24" stroke="#9a9a9a" stroke-width="2.5"/><circle cx="14" cy="28" r="4" fill="none" stroke="#9a9a9a" stroke-width="2.5"/><circle cx="22" cy="28" r="4" fill="none" stroke="#9a9a9a" stroke-width="2.5"/></svg>
<svg style="left:287.0px;top:2189.5px" width="36" height="36" viewBox="0 0 36 36"><rect x="6" y="5" width="15" height="19" fill="#f4f4f4" stroke="#aaa" stroke-width="1.5"/><rect x="14" y="13" width="15" height="19" fill="#f4f4f4" stroke="#aaa" stroke-width="1.5"/><path d="M17,19 L26,19 M17,23 L26,23 M17,27 L26,27" stroke="#bbb" stroke-width="1.2"/></svg>
<svg style="left:352.0px;top:2189.5px" width="36" height="36" viewBox="0 0 36 36"><rect x="8" y="6" width="21" height="26" fill="#fff" stroke="#555" stroke-width="2"/><rect x="13" y="3" width="11" height="6" fill="#888"/><path d="M12,15 L25,15 M12,20 L25,20 M12,25 L25,25" stroke="#777" stroke-width="1.5"/></svg>
<svg style="left:416.0px;top:2189.5px" width="36" height="36" viewBox="0 0 36 36"><path d="M6,6 L24,26" stroke="#555" stroke-width="4"/><path d="M18,24 L30,12 L34,32 Z" fill="#555"/></svg>
<svg style="left:503.0px;top:2189.5px" width="36" height="36" viewBox="0 0 36 36"><path d="M10,30 Q30,28 28,16 Q24,6 10,10" fill="none" stroke="#9a9a9a" stroke-width="4"/><path d="M4,10 L14,2 L14,18Z" fill="#9a9a9a"/></svg>
<svg style="left:567.0px;top:2189.5px" width="36" height="36" viewBox="0 0 36 36"><path d="M26,30 Q6,28 8,16 Q12,6 26,10" fill="none" stroke="#9a9a9a" stroke-width="4"/><path d="M32,10 L22,2 L22,18Z" fill="#9a9a9a"/></svg>
<svg style="left:651.0px;top:2189.5px" width="36" height="36" viewBox="0 0 36 36"><path d="M10,4 L28,18 L10,32Z" fill="#9a9a9a"/></svg>
<svg style="left:716.0px;top:2189.5px" width="36" height="36" viewBox="0 0 36 36"><rect x="4" y="5" width="18" height="26" fill="#f4f4f4" stroke="#999" stroke-width="1.5"/><path d="M7,11 L19,11 M7,16 L19,16 M7,21 L19,21" stroke="#999" stroke-width="1.5"/><path d="M18,10 L34,21 L18,32Z" fill="#9a9a9a"/></svg>
<svg style="left:782.0px;top:2189.5px" width="36" height="36" viewBox="0 0 36 36"><rect x="4" y="4" width="28" height="28" fill="#dd1a1a" stroke="#444" stroke-width="1"/></svg>
<svg style="left:867.0px;top:2189.5px" width="36" height="36" viewBox="0 0 36 36"><rect x="10" y="10" width="20" height="15" fill="#1a3ac8" stroke="#333" stroke-width="1.5"/><circle cx="10" cy="14" r="7" fill="#b8d8e8" stroke="#567" stroke-width="1"/><rect x="14" y="27" width="12" height="4" fill="#444"/></svg>
<svg style="left:954.0px;top:2189.5px" width="36" height="36" viewBox="0 0 36 36"><path d="M8,4 L34,4 L28,32 L2,32Z" fill="#2a8ad8"/><path d="M10,10 L19,17 L10,24 M18,26 L26,26" fill="none" stroke="#fff" stroke-width="2.5"/></svg>
<div style="left:1035.0px;top:2185.5px;width:48.0px;height:44.0px;background:#fbfcfe;border:2px solid #5a5a5a;"></div>
<svg style="left:1041.0px;top:2189.5px" width="36" height="36" viewBox="0 0 36 36"><rect x="3" y="5" width="30" height="26" fill="#fff" stroke="#555" stroke-width="2"/><path d="M3,11 L33,11 M3,20 L33,20" stroke="#555" stroke-width="2"/></svg>
<svg style="left:1106.0px;top:2189.5px" width="36" height="36" viewBox="0 0 36 36"><rect x="3" y="5" width="30" height="26" fill="#fff" stroke="#555" stroke-width="2"/><path d="M3,11 L33,11 M21,11 L21,31" stroke="#555" stroke-width="2"/></svg>
<svg style="left:1170.0px;top:2189.5px" width="36" height="36" viewBox="0 0 36 36"><rect x="3" y="5" width="30" height="26" fill="#fff" stroke="#555" stroke-width="2"/><path d="M3,11 L33,11" stroke="#555" stroke-width="2"/></svg>
<svg style="left:1257.0px;top:2189.5px" width="36" height="36" viewBox="0 0 36 36"><rect x="5" y="7" width="28" height="25" fill="#eee" stroke="#777" stroke-width="2"/><rect x="9" y="2" width="14" height="18" fill="#3a6ab8" stroke="#555"/><path d="M12,7 L18,11 L12,15" fill="none" stroke="#fff" stroke-width="2"/></svg>
<div style="left:1315.0px;top:2185.5px;width:48.0px;height:44.0px;background:#fbfcfe;border:2px solid #5a5a5a;"></div>
<svg style="left:1321.0px;top:2189.5px" width="36" height="36" viewBox="0 0 36 36"><rect x="3" y="6" width="30" height="24" fill="#fff" stroke="#555" stroke-width="2"/><path d="M3,11 L33,11" stroke="#555" stroke-width="2"/><rect x="20" y="12" width="12" height="17" fill="#2a6ac8"/><path d="M23,16 L28,20 L23,24" fill="none" stroke="#fff" stroke-width="2"/></svg>
<div style="left:477.0px;top:2185.5px;width:2.0px;height:44.0px;background:#a8b4c4;"></div>
<div style="left:627.0px;top:2185.5px;width:2.0px;height:44.0px;background:#a8b4c4;"></div>
<div style="left:841.0px;top:2185.5px;width:2.0px;height:44.0px;background:#a8b4c4;"></div>
<div style="left:929.0px;top:2185.5px;width:2.0px;height:44.0px;background:#a8b4c4;"></div>
<div style="left:1015.0px;top:2185.5px;width:2.0px;height:44.0px;background:#a8b4c4;"></div>
<div style="left:1231.5px;top:2185.5px;width:2.0px;height:44.0px;background:#a8b4c4;"></div>
<svg style="left:1379px;top:2211.5px" width="14" height="16"><rect x="1" y="0" width="12" height="2" fill="#333"/><path d="M1,5 L13,5 L7,12Z" fill="#333"/></svg>
<div style="left:12.0px;top:2235.0px;width:2238.0px;height:60.0px;background:linear-gradient(#fdf8f2,#fdeedd);"></div>
<div style="left:12.0px;top:2920.0px;width:2238.0px;height:10.0px;background:#fcead6;"></div>
<div style="left:12.0px;top:2235.0px;width:8.0px;height:695.0px;background:#fbeee0;"></div>
<div style="left:2246.0px;top:2235.0px;width:4.0px;height:695.0px;background:#fbeee0;"></div>
<div style="left:30.0px;top:2247.0px;width:174.0px;height:48.0px;background:linear-gradient(#f4f4f4,#dcdcdc);border:1px solid #a0a0a0;border-bottom:none;border-radius:8px 8px 0 0;"></div>
<div class="t" style="left:47.0px;top:2258.0px;font-size:26px;line-height:26px;color:#111;font-family:'Liberation Sans', sans-serif;transform:scaleX(0.9126);transform-origin:left 0;">Untitled1.ps1</div>
<div style="left:206.0px;top:2242.0px;width:339.0px;height:53.0px;background:linear-gradient(#f8fbfe,#dde9f6);border:1px solid #8aa0b8;border-bottom:none;border-radius:8px 8px 0 0;"></div>
<div class="t" style="left:223.0px;top:2258.0px;font-size:26px;line-height:26px;color:#111;font-family:'Liberation Sans', sans-serif;transform:scaleX(0.8456);transform-origin:left 0;">RESTCallbackListener.ps1</div>
<svg style="left:502px;top:2258px" width="20" height="20"><path d="M2,2 L18,18 M18,2 L2,18" stroke="#333" stroke-width="3.2"/></svg>
<svg style="left:1646px;top:2251px" width="34" height="34"><circle cx="17" cy="17" r="15" fill="#eef1f5" stroke="#9aa" stroke-width="1.5"/><path d="M10,20 L17,12 L24,20" fill="none" stroke="#2a66c0" stroke-width="3.2"/></svg>
<div style="left:20.0px;top:2295.0px;width:1666.0px;height:37.0px;background:#f0f0f0;border:1px solid #c8c8c8;"></div>
<div style="left:55.0px;top:2297.0px;width:1207.0px;height:33.0px;background:#cdcdcd;"></div>
<svg style="left:27.0px;top:2303.0px" width="20" height="20" viewBox="-10 -10 20 20"><path d="M4.0,-8 L-4.0,0 L4.0,8" fill="none" stroke="#999" stroke-width="2"/></svg>
<svg style="left:1624.0px;top:2303.0px" width="20" height="20" viewBox="-10 -10 20 20"><path d="M-4.0,-8 L4.0,0 L-4.0,8" fill="none" stroke="#999" stroke-width="2"/></svg>
<div style="left:20.0px;top:2334.0px;width:1666.0px;height:7.0px;background:linear-gradient(#a8c8ec,#d8e8f8);"></div>
<div style="left:20.0px;top:2342.0px;width:1631.0px;height:549.0px;background:#012456;"></div>
<div style="left:20px;top:2342px;width:1631px;height:549px;overflow:hidden;">
<div class="t" style="left:-3.5px;top:5.1px;font-size:24px;line-height:24px;color:#fff;font-family:'Liberation Mono', monospace;">    },</div>
<div class="t" style="left:-3.5px;top:31.1px;font-size:24px;line-height:24px;color:#fff;font-family:'Liberation Mono', monospace;">    &quot;message&quot;: null</div>
<div class="t" style="left:-3.5px;top:57.1px;font-size:24px;line-height:24px;color:#fff;font-family:'Liberation Mono', monospace;">  }</div>
<div class="t" style="left:-3.5px;top:83.1px;font-size:24px;line-height:24px;color:#fff;font-family:'Liberation Mono', monospace;">  {</div>
<div class="t" style="left:-3.5px;top:109.1px;font-size:24px;line-height:24px;color:#fff;font-family:'Liberation Mono', monospace;">    &quot;status&quot;: &quot;success&quot;,</div>
<div class="t" style="left:-3.5px;top:135.1px;font-size:24px;line-height:24px;color:#fff;font-family:'Liberation Mono', monospace;">    &quot;event&quot;: &quot;SKSS_CameraOutputViewUpdated&quot;,</div>
<div class="t" style="left:-3.5px;top:161.1px;font-size:24px;line-height:24px;color:#fff;font-family:'Liberation Mono', monospace;">    &quot;data&quot;: {</div>
<div class="t" style="left:-3.5px;top:187.1px;font-size:24px;line-height:24px;color:#fff;font-family:'Liberation Mono', monospace;">      &quot;Time&quot;: &quot;01.07.2018 21:06:09&quot;,</div>
<div class="t" style="left:-3.5px;top:213.1px;font-size:24px;line-height:24px;color:#fff;font-family:'Liberation Mono', monospace;">      &quot;TimeUTC&quot;: &quot;01.07.2018 19:06:09&quot;,</div>
<div class="t" style="left:-3.5px;top:239.1px;font-size:24px;line-height:24px;color:#fff;font-family:'Liberation Mono', monospace;">      &quot;Frame&quot;: 59,</div>
<div class="t" style="left:-3.5px;top:265.1px;font-size:24px;line-height:24px;color:#fff;font-family:'Liberation Mono', monospace;">      &quot;GuiderCamSNR&quot;: 40.766167709401167,</div>
<div class="t" style="left:-3.5px;top:291.1px;font-size:24px;line-height:24px;color:#fff;font-family:'Liberation Mono', monospace;">      &quot;GuiderCamStDev&quot;: 4.4487000703811646,</div>
<div class="t" style="left:-3.5px;top:317.1px;font-size:24px;line-height:24px;color:#fff;font-family:'Liberation Mono', monospace;">      &quot;GuiderCamMedian&quot;: 23.0,</div>
<div class="t" style="left:-3.5px;top:343.1px;font-size:24px;line-height:24px;color:#fff;font-family:'Liberation Mono', monospace;">      &quot;GuiderCamMean&quot;: 109.22156257629395,</div>
<div class="t" style="left:-3.5px;top:369.1px;font-size:24px;line-height:24px;color:#fff;font-family:'Liberation Mono', monospace;">      &quot;GuiderCamGradientAngleX&quot;: 0.096123890075104593,</div>
<div class="t" style="left:-3.5px;top:395.1px;font-size:24px;line-height:24px;color:#fff;font-family:'Liberation Mono', monospace;">      &quot;GuiderCamGradientAngleY&quot;: 0.086639009289033966,</div>
<div class="t" style="left:-3.5px;top:421.1px;font-size:24px;line-height:24px;color:#fff;font-family:'Liberation Mono', monospace;">      &quot;GuiderCamGradientOffset&quot;: 22.860246658325195</div>
<div class="t" style="left:-3.5px;top:447.1px;font-size:24px;line-height:24px;color:#fff;font-family:'Liberation Mono', monospace;">    },</div>
<div class="t" style="left:-3.5px;top:473.1px;font-size:24px;line-height:24px;color:#fff;font-family:'Liberation Mono', monospace;">    &quot;message&quot;: null</div>
<div class="t" style="left:-3.5px;top:499.1px;font-size:24px;line-height:24px;color:#fff;font-family:'Liberation Mono', monospace;">  }</div>
</div>
<div style="left:1651.0px;top:2342.0px;width:35.0px;height:549.0px;background:#f0f0f0;"></div>
<svg style="left:1658.0px;top:2350.0px" width="20" height="20" viewBox="-10 -10 20 20"><path d="M-8,4.0 L0,-4.0 L8,4.0" fill="none" stroke="#888" stroke-width="2"/></svg>
<div style="left:1651.0px;top:2841.0px;width:35.0px;height:15.0px;background:#cdcdcd;"></div>
<svg style="left:1658.0px;top:2865.0px" width="20" height="20" viewBox="-10 -10 20 20"><path d="M-8,-4.0 L0,4.0 L8,-4.0" fill="none" stroke="#888" stroke-width="2"/></svg>
<div style="left:20.0px;top:2891.0px;width:1666.0px;height:36.0px;background:#f0f0f0;border:1px solid #d4d4d4;"></div>
<svg style="left:27.0px;top:2899.0px" width="20" height="20" viewBox="-10 -10 20 20"><path d="M4.0,-8 L-4.0,0 L4.0,8" fill="none" stroke="#bbb" stroke-width="2"/></svg>
<svg style="left:1624.0px;top:2899.0px" width="20" height="20" viewBox="-10 -10 20 20"><path d="M-4.0,-8 L4.0,0 L-4.0,8" fill="none" stroke="#bbb" stroke-width="2"/></svg>
<div style="left:1686.0px;top:2240.0px;width:11.5px;height:690.0px;background:linear-gradient(90deg,#e8eef6,#a8c0dc,#e8eef6);"></div>
<div style="left:1697.5px;top:2295.0px;width:552.5px;height:632.0px;background:#ffffff;"></div>
<div style="left:1707.5px;top:2242.0px;width:186.5px;height:48.0px;background:linear-gradient(#f6fbf4,#dff5e0);border:1px solid #9aaab8;border-bottom:none;border-radius:8px 8px 0 0;"></div>
<div class="t" style="left:1725.0px;top:2255.0px;font-size:26px;line-height:26px;color:#111;font-family:'Liberation Sans', sans-serif;transform:scaleX(0.8426);transform-origin:left 0;">Commands</div>
<svg style="left:1850.5px;top:2256.0px" width="20" height="20"><path d="M2,2 L18,18 M18,2 L2,18" stroke="#333" stroke-width="3.2"/></svg>
<svg style="left:2224.0px;top:2255.0px" width="20" height="20"><path d="M2,2 L18,18 M18,2 L2,18" stroke="#222" stroke-width="3"/></svg>
<div style="left:1697.5px;top:2290.0px;width:552.5px;height:2.0px;background:#b8c4d0;"></div>
<div class="t" style="left:1725.0px;top:2320.5px;font-size:26px;line-height:26px;color:#111;font-family:'Liberation Sans', sans-serif;transform:scaleX(0.8389);transform-origin:left 0;">Modules:</div>
<div style="left:1836.0px;top:2310.0px;width:302.5px;height:46.5px;background:linear-gradient(#f2f2f2,#e5e5e5);border:2px solid #adadad;"></div>
<div class="t" style="left:1847.5px;top:2314.0px;font-size:26px;line-height:26px;color:#111;font-family:'Liberation Sans', sans-serif;transform:scaleX(0.8652);transform-origin:left 0;">All</div>
<svg style="left:2112.5px;top:2323.0px" width="16" height="16" viewBox="-8 -8 16 16"><path d="M-6,-3.0 L0,3.0 L6,-3.0" fill="none" stroke="#333" stroke-width="2"/></svg>
<div style="left:2151.5px;top:2310.0px;width:82.5px;height:46.5px;background:#f4f4f4;border:2px solid #c8c8c8;"></div>
<div class="t" style="left:2147.2px;top:2320.0px;font-size:26px;line-height:26px;color:#8c8c8c;font-family:'Liberation Sans', sans-serif;transform:scaleX(0.7689);transform-origin:center 0;">Refresh</div>
<div class="t" style="left:1725.0px;top:2383.0px;font-size:26px;line-height:26px;color:#111;font-family:'Liberation Sans', sans-serif;transform:scaleX(0.8162);transform-origin:left 0;">Name:</div>
<div style="left:1836.0px;top:2371.0px;width:398.0px;height:47.5px;background:#fff;border:2px solid #adadad;"></div>
<div style="left:1715.0px;top:2444.0px;width:519.0px;height:370.0px;background:#fff;border:2px solid #adadad;"></div>
<div style="left:1717px;top:2446px;width:515px;height:366px;overflow:hidden;">
<div class="t" style="left:14.0px;top:7.8px;font-size:25px;line-height:25px;color:#111;font-family:'Liberation Sans', sans-serif;transform:scaleX(0.9314);transform-origin:left 0;">A:</div>
<div class="t" style="left:14.0px;top:45.3px;font-size:25px;line-height:25px;color:#111;font-family:'Liberation Sans', sans-serif;transform:scaleX(0.8819);transform-origin:left 0;">Add-AppvClientConnectionGroup</div>
<div class="t" style="left:14.0px;top:82.3px;font-size:25px;line-height:25px;color:#111;font-family:'Liberation Sans', sans-serif;transform:scaleX(0.8617);transform-origin:left 0;">Add-AppvClientPackage</div>
<div class="t" style="left:14.0px;top:119.3px;font-size:25px;line-height:25px;color:#111;font-family:'Liberation Sans', sans-serif;transform:scaleX(0.8736);transform-origin:left 0;">Add-AppvPublishingServer</div>
<div class="t" style="left:14.0px;top:156.3px;font-size:25px;line-height:25px;color:#111;font-family:'Liberation Sans', sans-serif;transform:scaleX(0.8572);transform-origin:left 0;">Add-AppxPackage</div>
<div class="t" style="left:14.0px;top:193.3px;font-size:25px;line-height:25px;color:#111;font-family:'Liberation Sans', sans-serif;transform:scaleX(0.8617);transform-origin:left 0;">Add-AppxProvisionedPackage</div>
<div class="t" style="left:14.0px;top:230.3px;font-size:25px;line-height:25px;color:#111;font-family:'Liberation Sans', sans-serif;transform:scaleX(0.8904);transform-origin:left 0;">Add-AppxVolume</div>
<div class="t" style="left:14.0px;top:268.3px;font-size:25px;line-height:25px;color:#111;font-family:'Liberation Sans', sans-serif;transform:scaleX(0.8406);transform-origin:left 0;">Add-BCDataCacheExtension</div>
<div class="t" style="left:14.0px;top:305.3px;font-size:25px;line-height:25px;color:#111;font-family:'Liberation Sans', sans-serif;transform:scaleX(0.8689);transform-origin:left 0;">Add-BitLockerKeyProtector</div>
<div class="t" style="left:14.0px;top:342.3px;font-size:25px;line-height:25px;color:#111;font-family:'Liberation Sans', sans-serif;transform:scaleX(0.8608);transform-origin:left 0;">Add-BitsFile</div>
</div>
<div style="left:2197.0px;top:2447.0px;width:34.0px;height:364.0px;background:#f0f0f0;"></div>
<svg style="left:2204.0px;top:2455.0px" width="20" height="20" viewBox="-10 -10 20 20"><path d="M-8,4.0 L0,-4.0 L8,4.0" fill="none" stroke="#888" stroke-width="2"/></svg>
<div style="left:2197.0px;top:2481.5px;width:34.0px;height:15.0px;background:#cdcdcd;"></div>
<svg style="left:2204.0px;top:2785.0px" width="20" height="20" viewBox="-10 -10 20 20"><path d="M-8,-4.0 L0,4.0 L8,-4.0" fill="none" stroke="#888" stroke-width="2"/></svg>
<div style="left:2018.5px;top:2875.0px;width:65.5px;height:40.0px;background:#f4f4f4;border:2px solid #c6c6c6;"></div>
<div class="t" style="left:2027.4px;top:2882.0px;font-size:26px;line-height:26px;color:#8c8c8c;font-family:'Liberation Sans', sans-serif;transform:scaleX(0.9435);transform-origin:center 0;">Run</div>
<div style="left:2097.5px;top:2875.0px;width:65.0px;height:40.0px;background:#f4f4f4;border:2px solid #c6c6c6;"></div>
<div class="t" style="left:2097.5px;top:2882.0px;font-size:26px;line-height:26px;color:#8c8c8c;font-family:'Liberation Sans', sans-serif;transform:scaleX(0.8305);transform-origin:center 0;">Insert</div>
<div style="left:2175.0px;top:2875.0px;width:65.0px;height:40.0px;background:#f4f4f4;border:2px solid #c6c6c6;"></div>
<div class="t" style="left:2177.2px;top:2882.0px;font-size:26px;line-height:26px;color:#8c8c8c;font-family:'Liberation Sans', sans-serif;transform:scaleX(0.8073);transform-origin:center 0;">Copy</div>
<div style="left:12.0px;top:2927.5px;width:2238.0px;height:5.0px;background:#fcead6;"></div>
<div style="left:12.0px;top:2932.0px;width:2238.0px;height:68.0px;background:#f0f0f0;border-top:2px solid #cfcfcf;"></div>
<div class="t" style="left:33.5px;top:2955.5px;font-size:26px;line-height:26px;color:#111;font-family:'Liberation Sans', sans-serif;transform:scaleX(0.9144);transform-origin:left 0;">Running script / selection.  Press Ctrl+Break to stop.  Press Ctrl+B to break into debugger.</div>
<div style="left:1653.0px;top:2950.0px;width:2.0px;height:38.0px;background:#9a9a9a;"></div>
<div style="left:1862.5px;top:2950.0px;width:2.0px;height:38.0px;background:#9a9a9a;"></div>
<div class="t" style="left:1678.5px;top:2955.5px;font-size:26px;line-height:26px;color:#111;font-family:'Liberation Sans', sans-serif;transform:scaleX(0.8808);transform-origin:left 0;">Ln 11463  Col 1</div>
<div style="left:1884.5px;top:2966.0px;width:271.0px;height:4.0px;background:#e2e2e2;border:1px solid #d0d0d0;"></div>
<div style="left:1934.0px;top:2952.0px;width:17.5px;height:28.0px;background:#f0f0f0;border:2px solid #9a9a9a;"></div>
<div class="t" style="left:2176.0px;top:2957.0px;font-size:26px;line-height:26px;color:#111;font-family:'Liberation Sans', sans-serif;transform:scaleX(0.7895);transform-origin:left 0;">100%</div>
<div style="left:2250.0px;top:2086.0px;width:2250.0px;height:914.0px;background:#f0f0f0;border:2px solid #7db6ee;"></div>
<div style="left:2253.0px;top:2088.0px;width:2244.0px;height:54.5px;background:#ffffff;"></div>
<svg style="left:2265px;top:2092.5px" width="34" height="32" viewBox="0 0 34 32"><path d="M7,1 L33,1 L27,24 L1,24Z" fill="#3ca0d8"/><path d="M4,26 L26,26 L25,31 L3,31Z" fill="#5a6a7a"/><path d="M9,6 L17,12 L8,18 M15,19 L22,19" fill="none" stroke="#fff" stroke-width="2.2"/></svg>
<div class="t" style="left:2302.5px;top:2102.5px;font-size:26px;line-height:26px;color:#111;font-family:'Liberation Sans', sans-serif;transform:scaleX(0.8761);transform-origin:left 0;">Windows PowerShell ISE</div>
<div style="left:4256.5px;top:2114.5px;width:21.0px;height:2.0px;background:#111;"></div>
<div style="left:4347.5px;top:2104.5px;width:21.0px;height:21.0px;border:2px solid #111;"></div>
<svg style="left:4439.5px;top:2103.5px" width="23" height="23"><path d="M1,1 L22,22 M22,1 L1,22" stroke="#111" stroke-width="2.2"/></svg>
<div style="left:2253.0px;top:2142.5px;width:2244.0px;height:37.0px;background:linear-gradient(#f2f6fb,#dfe8f4);"></div>
<div class="t" style="left:2266.5px;top:2149.5px;font-size:26px;line-height:26px;color:#111;font-family:'Liberation Sans', sans-serif;transform:scaleX(0.8354);transform-origin:left 0;">File</div>
<div class="t" style="left:2330.0px;top:2149.5px;font-size:26px;line-height:26px;color:#111;font-family:'Liberation Sans', sans-serif;transform:scaleX(0.8928);transform-origin:left 0;">Edit</div>
<div class="t" style="left:2398.5px;top:2149.5px;font-size:26px;line-height:26px;color:#111;font-family:'Liberation Sans', sans-serif;transform:scaleX(0.8947);transform-origin:left 0;">View</div>
<div class="t" style="left:2476.5px;top:2149.5px;font-size:26px;line-height:26px;color:#111;font-family:'Liberation Sans', sans-serif;transform:scaleX(0.8897);transform-origin:left 0;">Tools</div>
<div class="t" style="left:2559.0px;top:2149.5px;font-size:26px;line-height:26px;color:#111;font-family:'Liberation Sans', sans-serif;transform:scaleX(0.9137);transform-origin:left 0;">Debug</div>
<div class="t" style="left:2658.5px;top:2149.5px;font-size:26px;line-height:26px;color:#111;font-family:'Liberation Sans', sans-serif;transform:scaleX(0.9397);transform-origin:left 0;">Add-ons</div>
<div class="t" style="left:2777.5px;top:2149.5px;font-size:26px;line-height:26px;color:#111;font-family:'Liberation Sans', sans-serif;transform:scaleX(0.9164);transform-origin:left 0;">Help</div>
<div style="left:2253.0px;top:2179.5px;width:2244.0px;height:53.0px;background:linear-gradient(#e9eff8,#dbe5f3);"></div>
<svg style="left:2272.0px;top:2187.0px" width="36" height="36" viewBox="0 0 36 36"><path d="M8,6 L22,6 L29,13 L29,32 L8,32Z" fill="#fff" stroke="#777" stroke-width="1.5"/><path d="M22,6 L22,13 L29,13" fill="#eee" stroke="#777" stroke-width="1.2"/><circle cx="8" cy="6" r="5" fill="#ffb400"/></svg>
<svg style="left:2337.0px;top:2187.0px" width="36" height="36" viewBox="0 0 36 36"><path d="M3,10 L13,10 L16,13 L31,13 L31,29 L3,29Z" fill="#e8b030" stroke="#b07a10" stroke-width="1.2"/><path d="M6,17 L34,17 L30,29 L3,29Z" fill="#f8d060" stroke="#b07a10" stroke-width="1.2"/></svg>
<svg style="left:2400.0px;top:2187.0px" width="36" height="36" viewBox="0 0 36 36"><rect x="4" y="5" width="28" height="28" fill="#2a6cc8" stroke="#1a4a90" stroke-width="1.2"/><rect x="9" y="6" width="18" height="11" fill="#f0f4fa"/><rect x="10" y="22" width="16" height="10" fill="#143a78"/></svg>
<svg style="left:2463.0px;top:2187.0px" width="36" height="36" viewBox="0 0 36 36"><path d="M14,4 L20,24 M24,4 L16,24" stroke="#9a9a9a" stroke-width="2.5"/><circle cx="14" cy="28" r="4" fill="none" stroke="#9a9a9a" stroke-width="2.5"/><circle cx="22" cy="28" r="4" fill="none" stroke="#9a9a9a" stroke-width="2.5"/></svg>
<svg style="left:2527.0px;top:2187.0px" width="36" height="36" viewBox="0 0 36 36"><rect x="6" y="5" width="15" height="19" fill="#f4f4f4" stroke="#aaa" stroke-width="1.5"/><rect x="14" y="13" width="15" height="19" fill="#f4f4f4" stroke="#aaa" stroke-width="1.5"/><path d="M17,19 L26,19 M17,23 L26,23 M17,27 L26,27" stroke="#bbb" stroke-width="1.2"/></svg>
<svg style="left:2592.0px;top:2187.0px" width="36" height="36" viewBox="0 0 36 36"><rect x="8" y="6" width="21" height="26" fill="#fff" stroke="#555" stroke-width="2"/><rect x="13" y="3" width="11" height="6" fill="#888"/><path d="M12,15 L25,15 M12,20 L25,20 M12,25 L25,25" stroke="#777" stroke-width="1.5"/></svg>
<svg style="left:2656.0px;top:2187.0px" width="36" height="36" viewBox="0 0 36 36"><path d="M6,6 L24,26" stroke="#1a66c8" stroke-width="4"/><path d="M18,24 L30,12 L34,32 Z" fill="#555"/></svg>
<svg style="left:2743.0px;top:2187.0px" width="36" height="36" viewBox="0 0 36 36"><path d="M10,30 Q30,28 28,16 Q24,6 10,10" fill="none" stroke="#9a9a9a" stroke-width="4"/><path d="M4,10 L14,2 L14,18Z" fill="#9a9a9a"/></svg>
<svg style="left:2807.0px;top:2187.0px" width="36" height="36" viewBox="0 0 36 36"><path d="M26,30 Q6,28 8,16 Q12,6 26,10" fill="none" stroke="#9a9a9a" stroke-width="4"/><path d="M32,10 L22,2 L22,18Z" fill="#9a9a9a"/></svg>
<svg style="left:2891.0px;top:2187.0px" width="36" height="36" viewBox="0 0 36 36"><path d="M10,4 L28,18 L10,32Z" fill="#2db82d"/></svg>
<svg style="left:2956.0px;top:2187.0px" width="36" height="36" viewBox="0 0 36 36"><rect x="4" y="5" width="18" height="26" fill="#f4f4f4" stroke="#999" stroke-width="1.5"/><path d="M7,11 L19,11 M7,16 L19,16 M7,21 L19,21" stroke="#999" stroke-width="1.5"/><path d="M18,10 L34,21 L18,32Z" fill="#2db82d"/></svg>
<svg style="left:3022.0px;top:2187.0px" width="36" height="36" viewBox="0 0 36 36"><rect x="4" y="4" width="28" height="28" fill="#7a7a7a" stroke="#444" stroke-width="1"/></svg>
<svg style="left:3107.0px;top:2187.0px" width="36" height="36" viewBox="0 0 36 36"><rect x="10" y="10" width="20" height="15" fill="#1a3ac8" stroke="#333" stroke-width="1.5"/><circle cx="10" cy="14" r="7" fill="#b8d8e8" stroke="#567" stroke-width="1"/><rect x="14" y="27" width="12" height="4" fill="#444"/></svg>
<svg style="left:3194.0px;top:2187.0px" width="36" height="36" viewBox="0 0 36 36"><path d="M8,4 L34,4 L28,32 L2,32Z" fill="#2a8ad8"/><path d="M10,10 L19,17 L10,24 M18,26 L26,26" fill="none" stroke="#fff" stroke-width="2.5"/></svg>
<div style="left:3275.0px;top:2183.0px;width:48.0px;height:44.0px;background:#fbfcfe;border:2px solid #5a5a5a;"></div>
<svg style="left:3281.0px;top:2187.0px" width="36" height="36" viewBox="0 0 36 36"><rect x="3" y="5" width="30" height="26" fill="#fff" stroke="#555" stroke-width="2"/><path d="M3,11 L33,11 M3,20 L33,20" stroke="#555" stroke-width="2"/></svg>
<svg style="left:3346.0px;top:2187.0px" width="36" height="36" viewBox="0 0 36 36"><rect x="3" y="5" width="30" height="26" fill="#fff" stroke="#555" stroke-width="2"/><path d="M3,11 L33,11 M21,11 L21,31" stroke="#555" stroke-width="2"/></svg>
<svg style="left:3410.0px;top:2187.0px" width="36" height="36" viewBox="0 0 36 36"><rect x="3" y="5" width="30" height="26" fill="#fff" stroke="#555" stroke-width="2"/><path d="M3,11 L33,11" stroke="#555" stroke-width="2"/></svg>
<svg style="left:3497.0px;top:2187.0px" width="36" height="36" viewBox="0 0 36 36"><rect x="5" y="7" width="28" height="25" fill="#eee" stroke="#777" stroke-width="2"/><rect x="9" y="2" width="14" height="18" fill="#3a6ab8" stroke="#555"/><path d="M12,7 L18,11 L12,15" fill="none" stroke="#fff" stroke-width="2"/></svg>
<div style="left:3555.0px;top:2183.0px;width:48.0px;height:44.0px;background:#fbfcfe;border:2px solid #5a5a5a;"></div>
<svg style="left:3561.0px;top:2187.0px" width="36" height="36" viewBox="0 0 36 36"><rect x="3" y="6" width="30" height="24" fill="#fff" stroke="#555" stroke-width="2"/><path d="M3,11 L33,11" stroke="#555" stroke-width="2"/><rect x="20" y="12" width="12" height="17" fill="#2a6ac8"/><path d="M23,16 L28,20 L23,24" fill="none" stroke="#fff" stroke-width="2"/></svg>
<div style="left:2717.0px;top:2183.0px;width:2.0px;height:44.0px;background:#a8b4c4;"></div>
<div style="left:2867.0px;top:2183.0px;width:2.0px;height:44.0px;background:#a8b4c4;"></div>
<div style="left:3081.0px;top:2183.0px;width:2.0px;height:44.0px;background:#a8b4c4;"></div>
<div style="left:3169.0px;top:2183.0px;width:2.0px;height:44.0px;background:#a8b4c4;"></div>
<div style="left:3255.0px;top:2183.0px;width:2.0px;height:44.0px;background:#a8b4c4;"></div>
<div style="left:3471.5px;top:2183.0px;width:2.0px;height:44.0px;background:#a8b4c4;"></div>
<svg style="left:3619px;top:2209.0px" width="14" height="16"><rect x="1" y="0" width="12" height="2" fill="#333"/><path d="M1,5 L13,5 L7,12Z" fill="#333"/></svg>
<div style="left:2253.0px;top:2232.5px;width:2244.0px;height:60.0px;background:linear-gradient(#fdf8f2,#fdeedd);"></div>
<div style="left:2253.0px;top:2920.0px;width:2244.0px;height:10.0px;background:#fcead6;"></div>
<div style="left:2253.0px;top:2232.5px;width:8.0px;height:695.0px;background:#fbeee0;"></div>
<div style="left:4493.0px;top:2232.5px;width:4.0px;height:695.0px;background:#fbeee0;"></div>
<div style="left:2268.5px;top:2245.0px;width:174.0px;height:47.0px;background:linear-gradient(#f4f4f4,#dcdcdc);border:1px solid #a0a0a0;border-bottom:none;border-radius:8px 8px 0 0;"></div>
<div class="t" style="left:2286.0px;top:2256.0px;font-size:26px;line-height:26px;color:#111;font-family:'Liberation Sans', sans-serif;transform:scaleX(0.9126);transform-origin:left 0;">Untitled1.ps1</div>
<div style="left:2445.0px;top:2241.0px;width:302.5px;height:51.0px;background:linear-gradient(#f8fbfe,#dde9f6);border:1px solid #8aa0b8;border-bottom:none;border-radius:8px 8px 0 0;"></div>
<div class="t" style="left:2462.0px;top:2256.0px;font-size:26px;line-height:26px;color:#111;font-family:'Liberation Sans', sans-serif;transform:scaleX(0.8341);transform-origin:left 0;">RESTAPISamples.ps1*</div>
<svg style="left:2703px;top:2255px" width="20" height="20"><path d="M2,2 L18,18 M18,2 L2,18" stroke="#333" stroke-width="3.2"/></svg>
<svg style="left:3885px;top:2248px" width="34" height="34"><circle cx="17" cy="17" r="15" fill="#eef1f5" stroke="#9aa" stroke-width="1.5"/><path d="M10,20 L17,12 L24,20" fill="none" stroke="#2a66c0" stroke-width="3.2"/></svg>
<div style="left:2259.0px;top:2291.5px;width:1665.0px;height:2.0px;background:#a0a0a0;"></div>
<div style="left:2259.0px;top:2293.0px;width:1631.0px;height:357.0px;background:#ffffff;"></div>
<div style="left:2259px;top:2293px;width:1631px;height:357px;overflow:hidden;">
<div style="left:115.0px;top:84.5px;width:1489.0px;height:26.5px;background:#c8c8c8;"></div>
<div class="t" style="left:43.7px;top:-18.4px;font-size:24px;line-height:24px;color:#1f6e80;font-family:'Liberation Mono', monospace;">21</div>
<div class="t" style="left:116.0px;top:-18.4px;font-size:24px;line-height:24px;color:#0000ff;font-family:'Liberation Mono', monospace;">Invoke-WebRequest</div>
<div class="t" style="left:375.2px;top:-18.4px;font-size:24px;line-height:24px;color:#8b0000;font-family:'Liberation Mono', monospace;">&quot;http://localhost:18700/SKSS_StartFocusing&quot;</div>
<div class="t" style="left:43.7px;top:7.6px;font-size:24px;line-height:24px;color:#1f6e80;font-family:'Liberation Mono', monospace;">22</div>
<div class="t" style="left:116.0px;top:7.6px;font-size:24px;line-height:24px;color:#0000ff;font-family:'Liberation Mono', monospace;">Invoke-WebRequest</div>
<div class="t" style="left:375.2px;top:7.6px;font-size:24px;line-height:24px;color:#8b0000;font-family:'Liberation Mono', monospace;">&quot;http://localhost:18700/SKSS_StopFocusing&quot;</div>
<div class="t" style="left:43.7px;top:33.6px;font-size:24px;line-height:24px;color:#1f6e80;font-family:'Liberation Mono', monospace;">23</div>
<div class="t" style="left:116.0px;top:33.6px;font-size:24px;line-height:24px;color:#0000ff;font-family:'Liberation Mono', monospace;">Invoke-WebRequest</div>
<div class="t" style="left:375.2px;top:33.6px;font-size:24px;line-height:24px;color:#8b0000;font-family:'Liberation Mono', monospace;">&quot;http://localhost:18700/SKSS_ResumeMoveFocuser&quot;</div>
<div class="t" style="left:43.7px;top:59.6px;font-size:24px;line-height:24px;color:#1f6e80;font-family:'Liberation Mono', monospace;">24</div>
<div class="t" style="left:43.7px;top:85.6px;font-size:24px;line-height:24px;color:#1f6e80;font-family:'Liberation Mono', monospace;">25</div>
<div class="t" style="left:116.0px;top:85.6px;font-size:24px;line-height:24px;color:#0000ff;font-family:'Liberation Mono', monospace;">Invoke-WebRequest</div>
<div class="t" style="left:375.2px;top:85.6px;font-size:24px;line-height:24px;color:#8b0000;font-family:'Liberation Mono', monospace;">&quot;http://localhost:18700/SKSS_StartFocuserCalibration?autoRestoreFocuserPosition=true&quot;</div>
<div class="t" style="left:43.7px;top:111.6px;font-size:24px;line-height:24px;color:#1f6e80;font-family:'Liberation Mono', monospace;">26</div>
<div class="t" style="left:43.7px;top:137.6px;font-size:24px;line-height:24px;color:#1f6e80;font-family:'Liberation Mono', monospace;">27</div>
<div class="t" style="left:116.0px;top:137.6px;font-size:24px;line-height:24px;color:#0000ff;font-family:'Liberation Mono', monospace;">Invoke-WebRequest</div>
<div class="t" style="left:375.2px;top:137.6px;font-size:24px;line-height:24px;color:#8b0000;font-family:'Liberation Mono', monospace;">&quot;http://localhost:18700/SKSS_SuspendMoveFocuser&quot;</div>
<div class="t" style="left:43.7px;top:163.6px;font-size:24px;line-height:24px;color:#1f6e80;font-family:'Liberation Mono', monospace;">28</div>
<div class="t" style="left:43.7px;top:189.6px;font-size:24px;line-height:24px;color:#1f6e80;font-family:'Liberation Mono', monospace;">29</div>
<div class="t" style="left:116.0px;top:189.6px;font-size:24px;line-height:24px;color:#0000ff;font-family:'Liberation Mono', monospace;">Invoke-WebRequest</div>
<div class="t" style="left:375.2px;top:189.6px;font-size:24px;line-height:24px;color:#8b0000;font-family:'Liberation Mono', monospace;">&quot;http://localhost:18700/SKSS_MoveFocuserToPosition?steps=32768&quot;</div>
<div class="t" style="left:43.7px;top:215.6px;font-size:24px;line-height:24px;color:#1f6e80;font-family:'Liberation Mono', monospace;">30</div>
<div class="t" style="left:116.0px;top:215.6px;font-size:24px;line-height:24px;color:#0000ff;font-family:'Liberation Mono', monospace;">Invoke-WebRequest</div>
<div class="t" style="left:375.2px;top:215.6px;font-size:24px;line-height:24px;color:#8b0000;font-family:'Liberation Mono', monospace;">&quot;http://localhost:18700/SKSS_MoveFocuserInward?steps=5&quot;</div>
<div class="t" style="left:43.7px;top:241.6px;font-size:24px;line-height:24px;color:#1f6e80;font-family:'Liberation Mono', monospace;">31</div>
<div class="t" style="left:116.0px;top:241.6px;font-size:24px;line-height:24px;color:#0000ff;font-family:'Liberation Mono', monospace;">Invoke-WebRequest</div>
<div class="t" style="left:375.2px;top:241.6px;font-size:24px;line-height:24px;color:#8b0000;font-family:'Liberation Mono', monospace;">&quot;http://localhost:18700/SKSS_MoveFocuserOutward?steps=5&quot;</div>
<div class="t" style="left:43.7px;top:267.6px;font-size:24px;line-height:24px;color:#1f6e80;font-family:'Liberation Mono', monospace;">32</div>
<div class="t" style="left:43.7px;top:293.6px;font-size:24px;line-height:24px;color:#1f6e80;font-family:'Liberation Mono', monospace;">33</div>
<div class="t" style="left:116.0px;top:293.6px;font-size:24px;line-height:24px;color:#0000ff;font-family:'Liberation Mono', monospace;">Invoke-WebRequest</div>
<div class="t" style="left:375.2px;top:293.6px;font-size:24px;line-height:24px;color:#8b0000;font-family:'Liberation Mono', monospace;">&quot;http://localhost:18700/SKSS_MoveGuiderMinusX?duration=10&quot;</div>
<div class="t" style="left:43.7px;top:319.6px;font-size:24px;line-height:24px;color:#1f6e80;font-family:'Liberation Mono', monospace;">34</div>
<div class="t" style="left:116.0px;top:319.6px;font-size:24px;line-height:24px;color:#0000ff;font-family:'Liberation Mono', monospace;">Invoke-WebRequest</div>
<div class="t" style="left:375.2px;top:319.6px;font-size:24px;line-height:24px;color:#8b0000;font-family:'Liberation Mono', monospace;">&quot;http://localhost:18700/SKSS_MoveGuiderPlusX?duration=10&quot;</div>
<div class="t" style="left:43.7px;top:345.6px;font-size:24px;line-height:24px;color:#1f6e80;font-family:'Liberation Mono', monospace;">35</div>
<div class="t" style="left:116.0px;top:345.6px;font-size:24px;line-height:24px;color:#0000ff;font-family:'Liberation Mono', monospace;">Invoke-WebRequest</div>
<div class="t" style="left:375.2px;top:345.6px;font-size:24px;line-height:24px;color:#8b0000;font-family:'Liberation Mono', monospace;">&quot;http://localhost:18700/SKSS_MoveGuiderMinusY?duration=10&quot;</div>
</div>
<div style="left:3890.0px;top:2293.0px;width:34.0px;height:357.0px;background:#f0f0f0;"></div>
<svg style="left:3897.0px;top:2300.0px" width="20" height="20" viewBox="-10 -10 20 20"><path d="M-8,4.0 L0,-4.0 L8,4.0" fill="none" stroke="#888" stroke-width="2"/></svg>
<div style="left:3890.0px;top:2441.0px;width:34.0px;height:76.5px;background:#cdcdcd;"></div>
<svg style="left:3897.0px;top:2622.5px" width="20" height="20" viewBox="-10 -10 20 20"><path d="M-8,-4.0 L0,4.0 L8,-4.0" fill="none" stroke="#888" stroke-width="2"/></svg>
<div style="left:2259.0px;top:2650.0px;width:1631.0px;height:35.0px;background:#f0f0f0;"></div>
<div style="left:2294.0px;top:2652.0px;width:1245.0px;height:31.0px;background:#cdcdcd;"></div>
<svg style="left:2267.5px;top:2657.0px" width="20" height="20" viewBox="-10 -10 20 20"><path d="M4.0,-8 L-4.0,0 L4.0,8" fill="none" stroke="#999" stroke-width="2"/></svg>
<svg style="left:3862.5px;top:2657.0px" width="20" height="20" viewBox="-10 -10 20 20"><path d="M-4.0,-8 L4.0,0 L-4.0,8" fill="none" stroke="#999" stroke-width="2"/></svg>
<div style="left:3890.0px;top:2650.0px;width:34.0px;height:35.0px;background:#f0f0f0;"></div>
<div style="left:2259.0px;top:2687.5px;width:1665.0px;height:7.0px;background:linear-gradient(#a8c8ec,#d8e8f8);"></div>
<div style="left:2259.0px;top:2695.0px;width:1631.0px;height:196.0px;background:#012456;"></div>
<div style="left:2259px;top:2695px;width:1631px;height:196px;overflow:hidden;">
<div class="t" style="left:26.0px;top:-10.4px;font-size:24px;line-height:24px;color:#fff;font-family:'Liberation Mono', monospace;">Links             : {}</div>
<div class="t" style="left:26.0px;top:15.6px;font-size:24px;line-height:24px;color:#fff;font-family:'Liberation Mono', monospace;">ParsedHtml        : mshtml.HTMLDocumentClass</div>
<div class="t" style="left:26.0px;top:41.6px;font-size:24px;line-height:24px;color:#fff;font-family:'Liberation Mono', monospace;">RawContentLength  : 157</div>
<div class="t" style="left:26.0px;top:171.6px;font-size:24px;line-height:24px;color:#fff;font-family:'Liberation Mono', monospace;">PS C:\Users\david&gt; </div>
<div style="left:306.5px;top:167.0px;width:2.0px;height:27.0px;background:#ddd;"></div>
</div>
<div style="left:3890.0px;top:2695.0px;width:34.0px;height:196.0px;background:#f0f0f0;"></div>
<svg style="left:3897.0px;top:2702.5px" width="20" height="20" viewBox="-10 -10 20 20"><path d="M-8,4.0 L0,-4.0 L8,4.0" fill="none" stroke="#888" stroke-width="2"/></svg>
<div style="left:3890.0px;top:2841.0px;width:34.0px;height:15.0px;background:#cdcdcd;"></div>
<svg style="left:3897.0px;top:2865.0px" width="20" height="20" viewBox="-10 -10 20 20"><path d="M-8,-4.0 L0,4.0 L8,-4.0" fill="none" stroke="#888" stroke-width="2"/></svg>
<div style="left:2259.0px;top:2891.0px;width:1665.0px;height:36.0px;background:#f0f0f0;border:1px solid #d4d4d4;"></div>
<svg style="left:2267.5px;top:2899.0px" width="20" height="20" viewBox="-10 -10 20 20"><path d="M4.0,-8 L-4.0,0 L4.0,8" fill="none" stroke="#bbb" stroke-width="2"/></svg>
<svg style="left:3862.5px;top:2899.0px" width="20" height="20" viewBox="-10 -10 20 20"><path d="M-4.0,-8 L4.0,0 L-4.0,8" fill="none" stroke="#bbb" stroke-width="2"/></svg>
<div style="left:3924.0px;top:2238.0px;width:11.0px;height:692.0px;background:linear-gradient(90deg,#e8eef6,#a8c0dc,#e8eef6);"></div>
<div style="left:3935.0px;top:2292.5px;width:561.0px;height:632.0px;background:#ffffff;"></div>
<div style="left:3946.5px;top:2239.5px;width:186.5px;height:48.0px;background:linear-gradient(#f6fbf4,#dff5e0);border:1px solid #9aaab8;border-bottom:none;border-radius:8px 8px 0 0;"></div>
<div class="t" style="left:3964.0px;top:2252.5px;font-size:26px;line-height:26px;color:#111;font-family:'Liberation Sans', sans-serif;transform:scaleX(0.8426);transform-origin:left 0;">Commands</div>
<svg style="left:4089.5px;top:2253.5px" width="20" height="20"><path d="M2,2 L18,18 M18,2 L2,18" stroke="#333" stroke-width="3.2"/></svg>
<svg style="left:4470.0px;top:2252.5px" width="20" height="20"><path d="M2,2 L18,18 M18,2 L2,18" stroke="#222" stroke-width="3"/></svg>
<div style="left:3935.0px;top:2287.5px;width:561.0px;height:2.0px;background:#b8c4d0;"></div>
<div class="t" style="left:3964.0px;top:2318.0px;font-size:26px;line-height:26px;color:#111;font-family:'Liberation Sans', sans-serif;transform:scaleX(0.8389);transform-origin:left 0;">Modules:</div>
<div style="left:4075.0px;top:2307.5px;width:302.5px;height:46.5px;background:linear-gradient(#f2f2f2,#e5e5e5);border:2px solid #adadad;"></div>
<div class="t" style="left:4086.5px;top:2311.5px;font-size:26px;line-height:26px;color:#111;font-family:'Liberation Sans', sans-serif;transform:scaleX(0.8652);transform-origin:left 0;">All</div>
<svg style="left:4351.5px;top:2320.5px" width="16" height="16" viewBox="-8 -8 16 16"><path d="M-6,-3.0 L0,3.0 L6,-3.0" fill="none" stroke="#333" stroke-width="2"/></svg>
<div style="left:4390.5px;top:2307.5px;width:82.5px;height:46.5px;background:#e1e1e1;border:2px solid #707070;"></div>
<div class="t" style="left:4386.2px;top:2317.5px;font-size:26px;line-height:26px;color:#111;font-family:'Liberation Sans', sans-serif;transform:scaleX(0.7689);transform-origin:center 0;">Refresh</div>
<div class="t" style="left:3964.0px;top:2380.5px;font-size:26px;line-height:26px;color:#111;font-family:'Liberation Sans', sans-serif;transform:scaleX(0.8162);transform-origin:left 0;">Name:</div>
<div style="left:4075.0px;top:2368.5px;width:398.0px;height:47.5px;background:#fff;border:2px solid #adadad;"></div>
<div style="left:3955.0px;top:2441.5px;width:518.0px;height:370.0px;background:#fff;border:2px solid #adadad;"></div>
<div style="left:3957px;top:2443.5px;width:514px;height:366px;overflow:hidden;">
<div class="t" style="left:14.0px;top:7.8px;font-size:25px;line-height:25px;color:#111;font-family:'Liberation Sans', sans-serif;transform:scaleX(0.9314);transform-origin:left 0;">A:</div>
<div class="t" style="left:14.0px;top:45.3px;font-size:25px;line-height:25px;color:#111;font-family:'Liberation Sans', sans-serif;transform:scaleX(0.8819);transform-origin:left 0;">Add-AppvClientConnectionGroup</div>
<div class="t" style="left:14.0px;top:82.3px;font-size:25px;line-height:25px;color:#111;font-family:'Liberation Sans', sans-serif;transform:scaleX(0.8617);transform-origin:left 0;">Add-AppvClientPackage</div>
<div class="t" style="left:14.0px;top:119.3px;font-size:25px;line-height:25px;color:#111;font-family:'Liberation Sans', sans-serif;transform:scaleX(0.8736);transform-origin:left 0;">Add-AppvPublishingServer</div>
<div class="t" style="left:14.0px;top:156.3px;font-size:25px;line-height:25px;color:#111;font-family:'Liberation Sans', sans-serif;transform:scaleX(0.8572);transform-origin:left 0;">Add-AppxPackage</div>
<div class="t" style="left:14.0px;top:193.3px;font-size:25px;line-height:25px;color:#111;font-family:'Liberation Sans', sans-serif;transform:scaleX(0.8617);transform-origin:left 0;">Add-AppxProvisionedPackage</div>
<div class="t" style="left:14.0px;top:230.3px;font-size:25px;line-height:25px;color:#111;font-family:'Liberation Sans', sans-serif;transform:scaleX(0.8904);transform-origin:left 0;">Add-AppxVolume</div>
<div class="t" style="left:14.0px;top:268.3px;font-size:25px;line-height:25px;color:#111;font-family:'Liberation Sans', sans-serif;transform:scaleX(0.8406);transform-origin:left 0;">Add-BCDataCacheExtension</div>
<div class="t" style="left:14.0px;top:305.3px;font-size:25px;line-height:25px;color:#111;font-family:'Liberation Sans', sans-serif;transform:scaleX(0.8689);transform-origin:left 0;">Add-BitLockerKeyProtector</div>
<div class="t" style="left:14.0px;top:342.3px;font-size:25px;line-height:25px;color:#111;font-family:'Liberation Sans', sans-serif;transform:scaleX(0.8608);transform-origin:left 0;">Add-BitsFile</div>
</div>
<div style="left:4436.0px;top:2444.5px;width:34.0px;height:364.0px;background:#f0f0f0;"></div>
<svg style="left:4443.0px;top:2452.5px" width="20" height="20" viewBox="-10 -10 20 20"><path d="M-8,4.0 L0,-4.0 L8,4.0" fill="none" stroke="#888" stroke-width="2"/></svg>
<div style="left:4436.0px;top:2479.0px;width:34.0px;height:15.0px;background:#cdcdcd;"></div>
<svg style="left:4443.0px;top:2782.5px" width="20" height="20" viewBox="-10 -10 20 20"><path d="M-8,-4.0 L0,4.0 L8,-4.0" fill="none" stroke="#888" stroke-width="2"/></svg>
<div style="left:4257.5px;top:2872.5px;width:65.5px;height:40.0px;background:#f4f4f4;border:2px solid #c6c6c6;"></div>
<div class="t" style="left:4266.4px;top:2879.5px;font-size:26px;line-height:26px;color:#8c8c8c;font-family:'Liberation Sans', sans-serif;transform:scaleX(0.9435);transform-origin:center 0;">Run</div>
<div style="left:4336.5px;top:2872.5px;width:65.0px;height:40.0px;background:#f4f4f4;border:2px solid #c6c6c6;"></div>
<div class="t" style="left:4336.5px;top:2879.5px;font-size:26px;line-height:26px;color:#8c8c8c;font-family:'Liberation Sans', sans-serif;transform:scaleX(0.8305);transform-origin:center 0;">Insert</div>
<div style="left:4414.0px;top:2872.5px;width:65.0px;height:40.0px;background:#f4f4f4;border:2px solid #c6c6c6;"></div>
<div class="t" style="left:4416.2px;top:2879.5px;font-size:26px;line-height:26px;color:#8c8c8c;font-family:'Liberation Sans', sans-serif;transform:scaleX(0.8073);transform-origin:center 0;">Copy</div>
<div style="left:2253.0px;top:2927.5px;width:2244.0px;height:5.0px;background:#fcead6;"></div>
<div style="left:2253.0px;top:2932.0px;width:2244.0px;height:68.0px;background:#f0f0f0;border-top:2px solid #cfcfcf;"></div>
<div class="t" style="left:2272.5px;top:2955.5px;font-size:26px;line-height:26px;color:#111;font-family:'Liberation Sans', sans-serif;transform:scaleX(0.9146);transform-origin:left 0;">Completed</div>
<div style="left:3905.0px;top:2950.0px;width:2.0px;height:38.0px;background:#9a9a9a;"></div>
<div style="left:4101.5px;top:2950.0px;width:2.0px;height:38.0px;background:#9a9a9a;"></div>
<div class="t" style="left:3930.5px;top:2955.5px;font-size:26px;line-height:26px;color:#111;font-family:'Liberation Sans', sans-serif;transform:scaleX(0.8722);transform-origin:left 0;">Ln 552  Col 20</div>
<div style="left:4123.5px;top:2966.0px;width:271.0px;height:4.0px;background:#e2e2e2;border:1px solid #d0d0d0;"></div>
<div style="left:4173.0px;top:2952.0px;width:17.5px;height:28.0px;background:#f0f0f0;border:2px solid #9a9a9a;"></div>
<div class="t" style="left:4415.0px;top:2957.0px;font-size:26px;line-height:26px;color:#111;font-family:'Liberation Sans', sans-serif;transform:scaleX(0.7895);transform-origin:left 0;">100%</div>
<div style="left:2250.0px;top:2998.0px;width:2250.0px;height:2.0px;background:#7db6ee;"></div>
<div style="left:12.0px;top:2998.0px;width:2238.0px;height:2.0px;background:#111;"></div></div></body></html>
